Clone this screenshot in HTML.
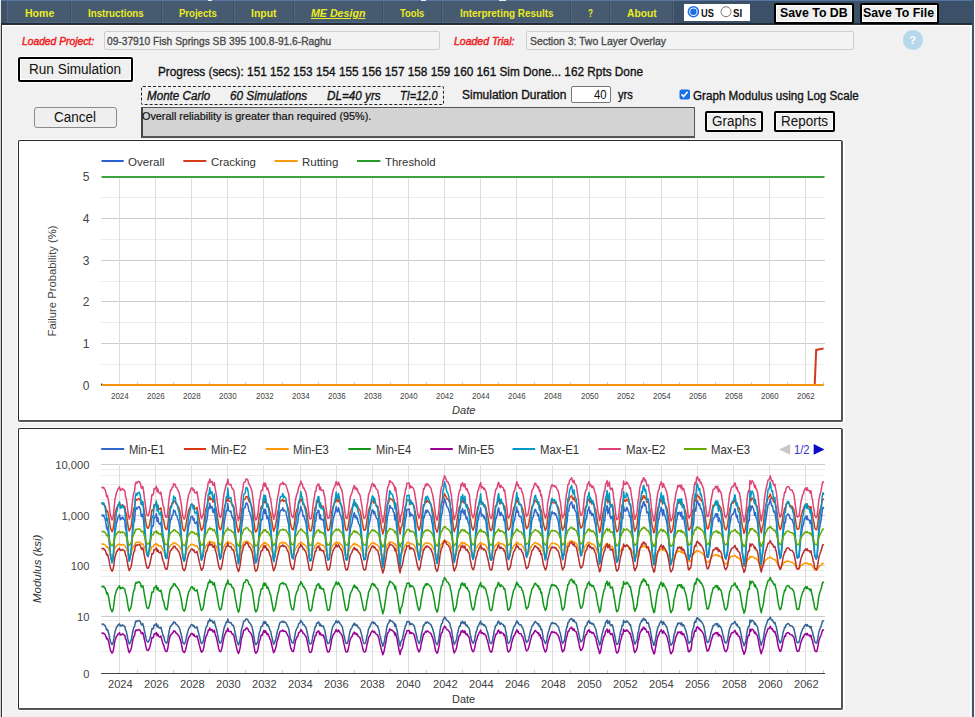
<!DOCTYPE html>
<html><head><meta charset="utf-8"><title>ME Design</title>
<style>
html,body{margin:0;padding:0;width:975px;height:717px;overflow:hidden;background:#f1f1f1}
.b{position:absolute}
.t{position:absolute;white-space:pre;font-family:'Liberation Sans', sans-serif;transform-origin:0 0}
</style></head><body>
<div class=b style="left:0px;top:0px;width:975px;height:717px;background:#f1f1f1"></div>
<div class=b style="left:0px;top:25px;width:1px;height:692px;background:#d0d0d0"></div>
<div class=b style="left:1px;top:25px;width:1px;height:692px;background:#333"></div>
<div class=b style="left:2px;top:25px;width:1px;height:692px;background:#fff"></div>
<div class=b style="left:970px;top:25px;width:1px;height:692px;background:#fff"></div>
<div class=b style="left:2px;top:25px;width:968px;height:1px;background:#fff"></div>
<div class=b style="left:972px;top:0px;width:2px;height:717px;background:#3a5572"></div>
<div class=b style="left:974px;top:0px;width:1px;height:717px;background:#f8f6f6"></div>
<div class=b style="left:0px;top:0px;width:1px;height:25px;background:#e8e8e8"></div>
<div class=b style="left:1px;top:0px;width:971px;height:25px;background:#475b70"></div>
<div class=b style="left:1px;top:0px;width:971px;height:1px;background:#5674a4"></div>
<div class=b style="left:1px;top:22px;width:971px;height:1px;background:#506680"></div>
<div class=b style="left:1px;top:23px;width:971px;height:1px;background:#1f2b38"></div>
<div class=b style="left:1px;top:24px;width:971px;height:1px;background:#2c3036"></div>
<div class=b style="left:1px;top:1px;width:6px;height:22px;background:#3e5169"></div>
<div class=b style="left:7px;top:1px;width:1px;height:22px;background:#53677e"></div>
<div class=b style="left:673px;top:1px;width:299px;height:22px;background:#3c5068"></div>
<div class=b style="left:208px;top:0px;width:4px;height:1px;background:#e8eef8"></div>
<div class=b style="left:421px;top:0px;width:5px;height:1px;background:#e8eef8"></div>
<div class=b style="left:499px;top:0px;width:7px;height:1px;background:#e8eef8"></div>
<div class=b style="left:70px;top:1px;width:1px;height:22px;background:#3c4f64"></div>
<div class=b style="left:71px;top:1px;width:1px;height:22px;background:#52667c"></div>
<div class=b style="left:161px;top:1px;width:1px;height:22px;background:#3c4f64"></div>
<div class=b style="left:162px;top:1px;width:1px;height:22px;background:#52667c"></div>
<div class=b style="left:233px;top:1px;width:1px;height:22px;background:#3c4f64"></div>
<div class=b style="left:234px;top:1px;width:1px;height:22px;background:#52667c"></div>
<div class=b style="left:293px;top:1px;width:1px;height:22px;background:#3c4f64"></div>
<div class=b style="left:294px;top:1px;width:1px;height:22px;background:#52667c"></div>
<div class=b style="left:382px;top:1px;width:1px;height:22px;background:#3c4f64"></div>
<div class=b style="left:383px;top:1px;width:1px;height:22px;background:#52667c"></div>
<div class=b style="left:441px;top:1px;width:1px;height:22px;background:#3c4f64"></div>
<div class=b style="left:442px;top:1px;width:1px;height:22px;background:#52667c"></div>
<div class=b style="left:570px;top:1px;width:1px;height:22px;background:#3c4f64"></div>
<div class=b style="left:571px;top:1px;width:1px;height:22px;background:#52667c"></div>
<div class=b style="left:609px;top:1px;width:1px;height:22px;background:#3c4f64"></div>
<div class=b style="left:610px;top:1px;width:1px;height:22px;background:#52667c"></div>
<div class=b style="left:672px;top:1px;width:1px;height:22px;background:#3c4f64"></div>
<div class=b style="left:673px;top:1px;width:1px;height:22px;background:#52667c"></div>
<div class=b style="left:684px;top:4px;width:66px;height:17px;background:#fff"></div>
<svg class=b style="left:684px;top:4px" width="66" height="17"><circle cx="9.4" cy="7.7" r="5" fill="#fff" stroke="#1a6ee6" stroke-width="1.6"/><circle cx="9.4" cy="7.7" r="3.2" fill="#1a6ee6"/><circle cx="42" cy="7.7" r="5" fill="#fff" stroke="#777" stroke-width="1"/></svg>
<div class=b style="left:774px;top:3px;width:80px;height:21px;box-sizing:border-box;border:2px solid #000;background:#efefef;box-shadow:inset 0 0 0 1px #fff;border-radius:2px"></div>
<div class=b style="left:860px;top:3px;width:79px;height:21px;box-sizing:border-box;border:2px solid #000;background:#efefef;box-shadow:inset 0 0 0 1px #fff;border-radius:2px"></div>
<div class=b style="left:104px;top:31px;width:336px;height:19px;box-sizing:border-box;border:1px solid #cfcfcf;border-radius:2px;background:#f3f3f3"></div>
<div class=b style="left:526px;top:31px;width:328px;height:19px;box-sizing:border-box;border:1px solid #cfcfcf;border-radius:2px;background:#f3f3f3"></div>
<div class=b style="left:903px;top:30px;width:19.5px;height:19.5px;border-radius:50%;background:#b7d8ea"></div>
<div class=b style="left:18px;top:57px;width:115px;height:25px;box-sizing:border-box;border:2px solid #000;border-radius:2px;background:#efefef;box-shadow:inset 0 0 0 1px #fff, 0 0 0 1px #fff"></div>
<div class=b style="left:141px;top:86px;width:303px;height:19px;box-sizing:border-box;border:1px dashed #222;border-radius:2px"></div>
<div class=b style="left:571px;top:86px;width:40px;height:17px;box-sizing:border-box;border:1px solid #777;border-radius:2px;background:#fff"></div>
<svg class=b style="left:679px;top:89px" width="12" height="11"><rect x="0.5" y="0.5" width="10.5" height="10" rx="2" fill="#1a6ee6"/><path d="M2.6 5.4 L4.6 7.6 L8.6 2.8" fill="none" stroke="#fff" stroke-width="1.6"/></svg>
<div class=b style="left:34px;top:107px;width:83px;height:21px;box-sizing:border-box;border:1px solid #8a8a8a;border-radius:3px;background:#efefef"></div>
<div class=b style="left:141px;top:107px;width:554px;height:31px;box-sizing:border-box;border:1px solid #555;border-bottom:2px solid #555;border-left:2px solid #444;background:#d3d3d3"></div>
<div class=b style="left:705px;top:111px;width:58px;height:21px;box-sizing:border-box;border:2px solid #000;border-radius:2px;background:#efefef;box-shadow:inset 0 0 0 1px #fff"></div>
<div class=b style="left:774px;top:111px;width:61px;height:21px;box-sizing:border-box;border:2px solid #000;border-radius:2px;background:#efefef;box-shadow:inset 0 0 0 1px #fff"></div>
<div class=b style="left:17px;top:139px;width:828px;height:284px;background:#fff;opacity:0.9;border-radius:3px"></div>
<div class=b style="left:18px;top:140px;width:825px;height:282px;box-sizing:border-box;background:#fff;border:1px solid #2a2a2a;border-right:2px solid #555;border-bottom:2px solid #555;border-radius:2px"></div>
<div class=b style="left:17px;top:427px;width:828px;height:284px;background:#fff;opacity:0.9;border-radius:3px"></div>
<div class=b style="left:18px;top:428px;width:825px;height:282px;box-sizing:border-box;background:#fff;border:1px solid #2a2a2a;border-right:2px solid #555;border-bottom:2px solid #555;border-radius:2px"></div>
<svg class=b style="left:0;top:0" width="975" height="717"><line x1="101" x2="825" y1="364.5" y2="364.5" stroke="#ebebeb" stroke-width="1"/><line x1="101" x2="825" y1="343.5" y2="343.5" stroke="#cccccc" stroke-width="1"/><line x1="101" x2="825" y1="322.5" y2="322.5" stroke="#ebebeb" stroke-width="1"/><line x1="101" x2="825" y1="301.5" y2="301.5" stroke="#cccccc" stroke-width="1"/><line x1="101" x2="825" y1="281.5" y2="281.5" stroke="#ebebeb" stroke-width="1"/><line x1="101" x2="825" y1="260.5" y2="260.5" stroke="#cccccc" stroke-width="1"/><line x1="101" x2="825" y1="239.5" y2="239.5" stroke="#ebebeb" stroke-width="1"/><line x1="101" x2="825" y1="218.5" y2="218.5" stroke="#cccccc" stroke-width="1"/><line x1="101" x2="825" y1="197.5" y2="197.5" stroke="#ebebeb" stroke-width="1"/><line x1="119.5" x2="119.5" y1="176" y2="384" stroke="#dddddd" stroke-width="1"/><line x1="155.5" x2="155.5" y1="176" y2="384" stroke="#dddddd" stroke-width="1"/><line x1="191.5" x2="191.5" y1="176" y2="384" stroke="#dddddd" stroke-width="1"/><line x1="227.5" x2="227.5" y1="176" y2="384" stroke="#dddddd" stroke-width="1"/><line x1="263.5" x2="263.5" y1="176" y2="384" stroke="#dddddd" stroke-width="1"/><line x1="300.5" x2="300.5" y1="176" y2="384" stroke="#dddddd" stroke-width="1"/><line x1="336.5" x2="336.5" y1="176" y2="384" stroke="#dddddd" stroke-width="1"/><line x1="372.5" x2="372.5" y1="176" y2="384" stroke="#dddddd" stroke-width="1"/><line x1="408.5" x2="408.5" y1="176" y2="384" stroke="#dddddd" stroke-width="1"/><line x1="444.5" x2="444.5" y1="176" y2="384" stroke="#dddddd" stroke-width="1"/><line x1="480.5" x2="480.5" y1="176" y2="384" stroke="#dddddd" stroke-width="1"/><line x1="516.5" x2="516.5" y1="176" y2="384" stroke="#dddddd" stroke-width="1"/><line x1="552.5" x2="552.5" y1="176" y2="384" stroke="#dddddd" stroke-width="1"/><line x1="589.5" x2="589.5" y1="176" y2="384" stroke="#dddddd" stroke-width="1"/><line x1="625.5" x2="625.5" y1="176" y2="384" stroke="#dddddd" stroke-width="1"/><line x1="661.5" x2="661.5" y1="176" y2="384" stroke="#dddddd" stroke-width="1"/><line x1="697.5" x2="697.5" y1="176" y2="384" stroke="#dddddd" stroke-width="1"/><line x1="733.5" x2="733.5" y1="176" y2="384" stroke="#dddddd" stroke-width="1"/><line x1="769.5" x2="769.5" y1="176" y2="384" stroke="#dddddd" stroke-width="1"/><line x1="805.5" x2="805.5" y1="176" y2="384" stroke="#dddddd" stroke-width="1"/><line x1="137.5" x2="137.5" y1="382" y2="384" stroke="#cccccc" stroke-width="1"/><line x1="173.5" x2="173.5" y1="382" y2="384" stroke="#cccccc" stroke-width="1"/><line x1="209.5" x2="209.5" y1="382" y2="384" stroke="#cccccc" stroke-width="1"/><line x1="245.5" x2="245.5" y1="382" y2="384" stroke="#cccccc" stroke-width="1"/><line x1="282.5" x2="282.5" y1="382" y2="384" stroke="#cccccc" stroke-width="1"/><line x1="318.5" x2="318.5" y1="382" y2="384" stroke="#cccccc" stroke-width="1"/><line x1="354.5" x2="354.5" y1="382" y2="384" stroke="#cccccc" stroke-width="1"/><line x1="390.5" x2="390.5" y1="382" y2="384" stroke="#cccccc" stroke-width="1"/><line x1="426.5" x2="426.5" y1="382" y2="384" stroke="#cccccc" stroke-width="1"/><line x1="462.5" x2="462.5" y1="382" y2="384" stroke="#cccccc" stroke-width="1"/><line x1="498.5" x2="498.5" y1="382" y2="384" stroke="#cccccc" stroke-width="1"/><line x1="534.5" x2="534.5" y1="382" y2="384" stroke="#cccccc" stroke-width="1"/><line x1="570.5" x2="570.5" y1="382" y2="384" stroke="#cccccc" stroke-width="1"/><line x1="607.5" x2="607.5" y1="382" y2="384" stroke="#cccccc" stroke-width="1"/><line x1="643.5" x2="643.5" y1="382" y2="384" stroke="#cccccc" stroke-width="1"/><line x1="679.5" x2="679.5" y1="382" y2="384" stroke="#cccccc" stroke-width="1"/><line x1="715.5" x2="715.5" y1="382" y2="384" stroke="#cccccc" stroke-width="1"/><line x1="751.5" x2="751.5" y1="382" y2="384" stroke="#cccccc" stroke-width="1"/><line x1="787.5" x2="787.5" y1="382" y2="384" stroke="#cccccc" stroke-width="1"/><line x1="823.5" x2="823.5" y1="382" y2="384" stroke="#cccccc" stroke-width="1"/><line x1="101" x2="102" y1="384.5" y2="384.5" stroke="#333" stroke-width="2"/><path d="M101.5 177 H824.5" stroke="#3ba53b" stroke-width="2" fill="none"/><path d="M102 385 H814.7 L816.2 349.9 L823.6 348.4" stroke="#d23a1c" stroke-width="2" fill="none"/><path d="M102 385 H823.8" stroke="#f7930f" stroke-width="2" fill="none"/><path d="M101.5 161 H123.7" stroke="#2a5fd0" stroke-width="2"/><path d="M183.3 161 H206.3" stroke="#d83a1a" stroke-width="2"/><path d="M274.5 161 H297.8" stroke="#fb9a10" stroke-width="2"/><path d="M357 161 H380.4" stroke="#2a9a2a" stroke-width="2"/><line x1="101" x2="825" y1="600.5" y2="600.5" stroke="#ebebeb" stroke-width="1"/><line x1="101" x2="825" y1="585.5" y2="585.5" stroke="#ebebeb" stroke-width="1"/><line x1="101" x2="825" y1="576.5" y2="576.5" stroke="#ebebeb" stroke-width="1"/><line x1="101" x2="825" y1="570.5" y2="570.5" stroke="#ebebeb" stroke-width="1"/><line x1="101" x2="825" y1="550.5" y2="550.5" stroke="#ebebeb" stroke-width="1"/><line x1="101" x2="825" y1="535.5" y2="535.5" stroke="#ebebeb" stroke-width="1"/><line x1="101" x2="825" y1="526.5" y2="526.5" stroke="#ebebeb" stroke-width="1"/><line x1="101" x2="825" y1="519.5" y2="519.5" stroke="#ebebeb" stroke-width="1"/><line x1="101" x2="825" y1="499.5" y2="499.5" stroke="#ebebeb" stroke-width="1"/><line x1="101" x2="825" y1="484.5" y2="484.5" stroke="#ebebeb" stroke-width="1"/><line x1="101" x2="825" y1="475.5" y2="475.5" stroke="#ebebeb" stroke-width="1"/><line x1="101" x2="825" y1="469.5" y2="469.5" stroke="#ebebeb" stroke-width="1"/><line x1="101" x2="825" y1="620.5" y2="620.5" stroke="#ebebeb" stroke-width="1"/><line x1="101" x2="825" y1="626.5" y2="626.5" stroke="#ebebeb" stroke-width="1"/><line x1="101" x2="825" y1="636.5" y2="636.5" stroke="#ebebeb" stroke-width="1"/><line x1="101" x2="825" y1="651.5" y2="651.5" stroke="#ebebeb" stroke-width="1"/><line x1="101" x2="825" y1="464.5" y2="464.5" stroke="#cccccc" stroke-width="1"/><line x1="101" x2="825" y1="515.5" y2="515.5" stroke="#cccccc" stroke-width="1"/><line x1="101" x2="825" y1="565.5" y2="565.5" stroke="#cccccc" stroke-width="1"/><line x1="101" x2="825" y1="616.5" y2="616.5" stroke="#cccccc" stroke-width="1"/><line x1="119.5" x2="119.5" y1="464" y2="673" stroke="#dddddd" stroke-width="1"/><line x1="155.5" x2="155.5" y1="464" y2="673" stroke="#dddddd" stroke-width="1"/><line x1="191.5" x2="191.5" y1="464" y2="673" stroke="#dddddd" stroke-width="1"/><line x1="227.5" x2="227.5" y1="464" y2="673" stroke="#dddddd" stroke-width="1"/><line x1="263.5" x2="263.5" y1="464" y2="673" stroke="#dddddd" stroke-width="1"/><line x1="300.5" x2="300.5" y1="464" y2="673" stroke="#dddddd" stroke-width="1"/><line x1="336.5" x2="336.5" y1="464" y2="673" stroke="#dddddd" stroke-width="1"/><line x1="372.5" x2="372.5" y1="464" y2="673" stroke="#dddddd" stroke-width="1"/><line x1="408.5" x2="408.5" y1="464" y2="673" stroke="#dddddd" stroke-width="1"/><line x1="444.5" x2="444.5" y1="464" y2="673" stroke="#dddddd" stroke-width="1"/><line x1="480.5" x2="480.5" y1="464" y2="673" stroke="#dddddd" stroke-width="1"/><line x1="516.5" x2="516.5" y1="464" y2="673" stroke="#dddddd" stroke-width="1"/><line x1="552.5" x2="552.5" y1="464" y2="673" stroke="#dddddd" stroke-width="1"/><line x1="589.5" x2="589.5" y1="464" y2="673" stroke="#dddddd" stroke-width="1"/><line x1="625.5" x2="625.5" y1="464" y2="673" stroke="#dddddd" stroke-width="1"/><line x1="661.5" x2="661.5" y1="464" y2="673" stroke="#dddddd" stroke-width="1"/><line x1="697.5" x2="697.5" y1="464" y2="673" stroke="#dddddd" stroke-width="1"/><line x1="733.5" x2="733.5" y1="464" y2="673" stroke="#dddddd" stroke-width="1"/><line x1="769.5" x2="769.5" y1="464" y2="673" stroke="#dddddd" stroke-width="1"/><line x1="805.5" x2="805.5" y1="464" y2="673" stroke="#dddddd" stroke-width="1"/><line x1="137.5" x2="137.5" y1="670" y2="673" stroke="#cccccc" stroke-width="1"/><line x1="173.5" x2="173.5" y1="670" y2="673" stroke="#cccccc" stroke-width="1"/><line x1="209.5" x2="209.5" y1="670" y2="673" stroke="#cccccc" stroke-width="1"/><line x1="245.5" x2="245.5" y1="670" y2="673" stroke="#cccccc" stroke-width="1"/><line x1="282.5" x2="282.5" y1="670" y2="673" stroke="#cccccc" stroke-width="1"/><line x1="318.5" x2="318.5" y1="670" y2="673" stroke="#cccccc" stroke-width="1"/><line x1="354.5" x2="354.5" y1="670" y2="673" stroke="#cccccc" stroke-width="1"/><line x1="390.5" x2="390.5" y1="670" y2="673" stroke="#cccccc" stroke-width="1"/><line x1="426.5" x2="426.5" y1="670" y2="673" stroke="#cccccc" stroke-width="1"/><line x1="462.5" x2="462.5" y1="670" y2="673" stroke="#cccccc" stroke-width="1"/><line x1="498.5" x2="498.5" y1="670" y2="673" stroke="#cccccc" stroke-width="1"/><line x1="534.5" x2="534.5" y1="670" y2="673" stroke="#cccccc" stroke-width="1"/><line x1="570.5" x2="570.5" y1="670" y2="673" stroke="#cccccc" stroke-width="1"/><line x1="607.5" x2="607.5" y1="670" y2="673" stroke="#cccccc" stroke-width="1"/><line x1="643.5" x2="643.5" y1="670" y2="673" stroke="#cccccc" stroke-width="1"/><line x1="679.5" x2="679.5" y1="670" y2="673" stroke="#cccccc" stroke-width="1"/><line x1="715.5" x2="715.5" y1="670" y2="673" stroke="#cccccc" stroke-width="1"/><line x1="751.5" x2="751.5" y1="670" y2="673" stroke="#cccccc" stroke-width="1"/><line x1="787.5" x2="787.5" y1="670" y2="673" stroke="#cccccc" stroke-width="1"/><line x1="823.5" x2="823.5" y1="670" y2="673" stroke="#cccccc" stroke-width="1"/><line x1="101" x2="825" y1="673.5" y2="673.5" stroke="#444" stroke-width="1.2"/><path d="M101.4 515.7 L102.2 515.1 L102.9 516.2 L103.7 515.1 L104.4 517.5 L105.2 519.0 L106.0 523.7 L106.7 528.9 L107.5 527.2 L108.2 532.2 L109.0 539.1 L109.7 547.8 L110.5 556.1 L111.2 559.0 L112.0 562.4 L112.7 560.4 L113.5 554.2 L114.2 543.3 L115.0 532.1 L115.7 528.5 L116.5 522.3 L117.2 521.3 L118.0 517.1 L118.7 516.8 L119.5 514.4 L120.3 519.7 L121.0 518.1 L121.8 519.0 L122.5 516.9 L123.3 518.3 L124.0 519.3 L124.8 520.5 L125.5 528.4 L126.3 531.7 L127.0 539.2 L127.8 549.1 L128.5 556.4 L129.3 561.2 L130.0 557.9 L130.8 554.9 L131.5 549.0 L132.3 537.9 L133.0 529.8 L133.8 522.7 L134.5 521.4 L135.3 510.8 L136.1 507.6 L136.8 509.1 L137.6 508.2 L138.3 507.0 L139.1 506.7 L139.8 508.0 L140.6 510.5 L141.3 516.4 L142.1 516.6 L142.8 513.9 L143.6 520.8 L144.3 529.4 L145.1 537.1 L145.8 545.3 L146.6 553.3 L147.3 555.7 L148.1 556.6 L148.8 554.1 L149.6 549.5 L150.3 543.4 L151.1 535.4 L151.9 525.9 L152.6 526.6 L153.4 525.1 L154.1 517.0 L154.9 517.8 L155.6 516.3 L156.4 513.7 L157.1 521.6 L157.9 517.5 L158.6 522.5 L159.4 524.1 L160.1 524.4 L160.9 522.2 L161.6 528.5 L162.4 535.7 L163.1 541.3 L163.9 544.4 L164.6 552.2 L165.4 557.0 L166.1 558.4 L166.9 558.5 L167.7 552.7 L168.4 541.5 L169.2 531.0 L169.9 523.8 L170.7 518.9 L171.4 519.0 L172.2 514.9 L172.9 514.9 L173.7 509.8 L174.4 511.7 L175.2 511.0 L175.9 515.0 L176.7 515.8 L177.4 517.6 L178.2 520.2 L178.9 522.1 L179.7 526.4 L180.4 532.2 L181.2 538.5 L181.9 546.9 L182.7 556.9 L183.5 559.5 L184.2 561.2 L185.0 558.7 L185.7 554.0 L186.5 544.9 L187.2 537.7 L188.0 531.2 L188.7 525.4 L189.5 523.6 L190.2 520.5 L191.0 517.0 L191.7 516.1 L192.5 516.4 L193.2 520.0 L194.0 518.2 L194.7 522.9 L195.5 523.6 L196.2 523.3 L197.0 521.4 L197.7 527.9 L198.5 534.8 L199.3 543.0 L200.0 548.7 L200.8 556.4 L201.5 560.3 L202.3 558.3 L203.0 556.1 L203.8 549.4 L204.5 538.6 L205.3 530.0 L206.0 522.9 L206.8 520.4 L207.5 515.8 L208.3 507.9 L209.0 508.7 L209.8 503.2 L210.5 508.1 L211.3 507.3 L212.0 506.4 L212.8 512.0 L213.6 512.5 L214.3 508.3 L215.1 516.6 L215.8 521.7 L216.6 527.4 L217.3 536.0 L218.1 544.3 L218.8 552.8 L219.6 557.4 L220.3 559.2 L221.1 557.3 L221.8 551.7 L222.6 542.0 L223.3 532.2 L224.1 524.0 L224.8 519.2 L225.6 515.2 L226.3 510.4 L227.1 510.7 L227.8 503.5 L228.6 510.1 L229.4 511.4 L230.1 511.7 L230.9 511.0 L231.6 514.7 L232.4 517.9 L233.1 517.6 L233.9 521.3 L234.6 529.2 L235.4 538.3 L236.1 544.6 L236.9 553.8 L237.6 558.0 L238.4 563.3 L239.1 560.3 L239.9 552.3 L240.6 543.0 L241.4 528.4 L242.1 523.1 L242.9 517.2 L243.6 508.9 L244.4 507.9 L245.2 507.5 L245.9 503.5 L246.7 503.0 L247.4 503.9 L248.2 506.6 L248.9 511.2 L249.7 512.1 L250.4 514.6 L251.2 517.3 L251.9 521.0 L252.7 528.5 L253.4 538.2 L254.2 548.3 L254.9 558.4 L255.7 562.6 L256.4 561.6 L257.2 558.6 L257.9 553.7 L258.7 542.5 L259.4 533.9 L260.2 530.2 L261.0 520.9 L261.7 519.3 L262.5 519.6 L263.2 512.0 L264.0 509.0 L264.7 513.6 L265.5 509.4 L266.2 513.4 L267.0 518.6 L267.7 516.2 L268.5 520.0 L269.2 523.8 L270.0 529.8 L270.7 531.4 L271.5 541.6 L272.2 547.7 L273.0 556.8 L273.7 561.5 L274.5 557.8 L275.2 554.3 L276.0 547.3 L276.8 537.9 L277.5 530.5 L278.3 525.9 L279.0 519.2 L279.8 512.6 L280.5 510.5 L281.3 510.1 L282.0 510.0 L282.8 507.7 L283.5 511.1 L284.3 510.0 L285.0 510.9 L285.8 511.4 L286.5 515.2 L287.3 518.1 L288.0 521.8 L288.8 525.1 L289.5 536.3 L290.3 546.0 L291.0 551.9 L291.8 557.0 L292.6 558.3 L293.3 558.9 L294.1 552.0 L294.8 542.2 L295.6 532.3 L296.3 528.1 L297.1 524.1 L297.8 522.4 L298.6 514.6 L299.3 513.5 L300.1 511.5 L300.8 506.3 L301.6 510.4 L302.3 510.5 L303.1 516.3 L303.8 515.8 L304.6 518.8 L305.3 520.7 L306.1 523.8 L306.8 529.9 L307.6 539.3 L308.4 547.3 L309.1 557.3 L309.9 560.7 L310.6 560.8 L311.4 559.5 L312.1 553.5 L312.9 542.4 L313.6 535.6 L314.4 529.7 L315.1 521.3 L315.9 521.0 L316.6 513.1 L317.4 513.1 L318.1 510.3 L318.9 510.4 L319.6 518.6 L320.4 514.8 L321.1 519.7 L321.9 519.0 L322.7 520.2 L323.4 519.6 L324.2 526.7 L324.9 529.6 L325.7 541.5 L326.4 548.5 L327.2 556.8 L327.9 560.1 L328.7 559.6 L329.4 558.2 L330.2 551.3 L330.9 542.4 L331.7 529.6 L332.4 524.3 L333.2 519.0 L333.9 516.5 L334.7 513.8 L335.4 511.5 L336.2 506.6 L336.9 510.9 L337.7 512.0 L338.5 507.8 L339.2 510.4 L340.0 514.1 L340.7 515.7 L341.5 518.4 L342.2 521.1 L343.0 530.1 L343.7 538.4 L344.5 545.8 L345.2 554.1 L346.0 559.5 L346.7 560.2 L347.5 559.0 L348.2 553.2 L349.0 544.0 L349.7 534.9 L350.5 528.2 L351.2 525.8 L352.0 523.2 L352.7 518.8 L353.5 515.5 L354.3 512.7 L355.0 517.6 L355.8 515.2 L356.5 518.7 L357.3 517.5 L358.0 521.8 L358.8 523.8 L359.5 524.9 L360.3 528.0 L361.0 534.7 L361.8 541.0 L362.5 548.3 L363.3 556.3 L364.0 559.9 L364.8 559.6 L365.5 558.9 L366.3 551.8 L367.0 541.8 L367.8 536.0 L368.5 526.5 L369.3 522.9 L370.1 520.2 L370.8 515.5 L371.6 512.4 L372.3 509.8 L373.1 510.2 L373.8 513.8 L374.6 511.6 L375.3 514.7 L376.1 517.4 L376.8 518.6 L377.6 519.0 L378.3 524.5 L379.1 529.8 L379.8 539.5 L380.6 546.1 L381.3 554.1 L382.1 559.6 L382.8 566.1 L383.6 561.6 L384.3 555.6 L385.1 544.9 L385.9 536.3 L386.6 525.2 L387.4 517.2 L388.1 514.1 L388.9 511.7 L389.6 505.6 L390.4 506.3 L391.1 508.3 L391.9 508.2 L392.6 508.8 L393.4 512.0 L394.1 512.6 L394.9 519.9 L395.6 515.1 L396.4 524.6 L397.1 529.3 L397.9 541.8 L398.6 549.6 L399.4 560.2 L400.1 565.8 L400.9 555.4 L401.7 553.5 L402.4 548.8 L403.2 540.9 L403.9 530.9 L404.7 525.9 L405.4 519.0 L406.2 516.7 L406.9 509.3 L407.7 509.4 L408.4 509.3 L409.2 509.1 L409.9 516.6 L410.7 513.1 L411.4 515.4 L412.2 514.8 L412.9 515.8 L413.7 517.8 L414.4 521.1 L415.2 529.1 L416.0 535.9 L416.7 543.7 L417.5 551.7 L418.2 555.2 L419.0 559.9 L419.7 557.7 L420.5 551.4 L421.2 540.2 L422.0 533.0 L422.7 526.7 L423.5 516.8 L424.2 517.8 L425.0 513.7 L425.7 510.6 L426.5 512.9 L427.2 509.9 L428.0 511.0 L428.7 512.4 L429.5 513.7 L430.2 515.2 L431.0 516.4 L431.8 521.8 L432.5 524.5 L433.3 531.7 L434.0 537.9 L434.8 546.9 L435.5 556.6 L436.3 559.3 L437.0 563.0 L437.8 559.3 L438.5 552.4 L439.3 542.5 L440.0 529.7 L440.8 520.4 L441.5 514.6 L442.3 513.2 L443.0 505.4 L443.8 503.1 L444.5 498.5 L445.3 500.7 L446.0 503.2 L446.8 506.5 L447.6 507.3 L448.3 508.6 L449.1 511.5 L449.8 513.2 L450.6 521.8 L451.3 525.7 L452.1 537.3 L452.8 546.2 L453.6 557.2 L454.3 562.2 L455.1 557.5 L455.8 555.3 L456.6 549.7 L457.3 539.1 L458.1 532.0 L458.8 524.5 L459.6 519.6 L460.3 519.4 L461.1 510.4 L461.8 512.7 L462.6 508.6 L463.4 512.3 L464.1 514.2 L464.9 510.0 L465.6 516.5 L466.4 518.9 L467.1 517.1 L467.9 521.5 L468.6 523.6 L469.4 526.0 L470.1 538.0 L470.9 544.6 L471.6 553.0 L472.4 557.2 L473.1 559.5 L473.9 556.5 L474.6 551.4 L475.4 541.2 L476.1 533.0 L476.9 529.7 L477.6 521.5 L478.4 519.4 L479.2 514.1 L479.9 512.1 L480.7 508.1 L481.4 516.2 L482.2 514.4 L482.9 514.9 L483.7 518.0 L484.4 516.5 L485.2 519.4 L485.9 520.9 L486.7 528.5 L487.4 532.6 L488.2 539.7 L488.9 547.5 L489.7 555.8 L490.4 559.2 L491.2 560.3 L491.9 559.0 L492.7 549.8 L493.4 541.7 L494.2 530.8 L495.0 524.7 L495.7 518.1 L496.5 518.2 L497.2 514.6 L498.0 509.7 L498.7 507.8 L499.5 514.1 L500.2 515.8 L501.0 512.2 L501.7 514.4 L502.5 515.2 L503.2 516.0 L504.0 520.6 L504.7 519.2 L505.5 528.2 L506.2 537.1 L507.0 546.4 L507.7 557.4 L508.5 559.7 L509.2 557.9 L510.0 555.5 L510.8 549.8 L511.5 539.5 L512.3 533.4 L513.0 527.3 L513.8 521.5 L514.5 520.4 L515.3 515.9 L516.0 511.9 L516.8 507.1 L517.5 512.3 L518.3 511.2 L519.0 516.0 L519.8 516.8 L520.5 516.2 L521.3 517.6 L522.0 522.4 L522.8 523.9 L523.5 530.0 L524.3 536.7 L525.1 544.5 L525.8 553.1 L526.6 557.5 L527.3 554.9 L528.1 554.1 L528.8 548.3 L529.6 540.8 L530.3 532.6 L531.1 527.6 L531.8 520.7 L532.6 517.9 L533.3 517.0 L534.1 512.7 L534.8 509.7 L535.6 509.3 L536.3 512.5 L537.1 512.5 L537.8 515.9 L538.6 514.3 L539.3 520.8 L540.1 519.1 L540.9 527.8 L541.6 526.3 L542.4 535.5 L543.1 545.8 L543.9 551.7 L544.6 555.8 L545.4 560.0 L546.1 557.3 L546.9 551.4 L547.6 539.6 L548.4 533.1 L549.1 528.5 L549.9 521.4 L550.6 517.9 L551.4 512.8 L552.1 511.5 L552.9 513.7 L553.6 512.9 L554.4 512.7 L555.1 514.7 L555.9 513.9 L556.7 517.1 L557.4 518.5 L558.2 520.9 L558.9 524.8 L559.7 532.6 L560.4 536.2 L561.2 546.9 L561.9 555.2 L562.7 559.7 L563.4 556.0 L564.2 555.0 L564.9 546.5 L565.7 534.4 L566.4 525.4 L567.2 520.7 L567.9 511.5 L568.7 511.3 L569.4 506.3 L570.2 504.0 L570.9 502.8 L571.7 501.7 L572.5 506.4 L573.2 508.2 L574.0 504.9 L574.7 509.9 L575.5 511.2 L576.2 512.1 L577.0 518.7 L577.7 525.9 L578.5 533.9 L579.2 543.0 L580.0 550.9 L580.7 556.0 L581.5 555.2 L582.2 552.8 L583.0 548.7 L583.7 539.8 L584.5 528.7 L585.2 522.4 L586.0 519.0 L586.7 518.1 L587.5 510.3 L588.3 509.9 L589.0 506.8 L589.8 513.5 L590.5 511.0 L591.3 513.5 L592.0 515.8 L592.8 513.5 L593.5 515.1 L594.3 519.1 L595.0 523.1 L595.8 525.8 L596.5 535.2 L597.3 543.3 L598.0 550.7 L598.8 554.7 L599.5 563.6 L600.3 561.1 L601.0 553.3 L601.8 541.8 L602.5 534.7 L603.3 527.9 L604.1 521.5 L604.8 520.3 L605.6 510.6 L606.3 509.7 L607.1 505.5 L607.8 513.7 L608.6 512.0 L609.3 507.4 L610.1 516.6 L610.8 518.6 L611.6 516.7 L612.3 516.4 L613.1 523.4 L613.8 532.2 L614.6 539.6 L615.3 548.3 L616.1 557.9 L616.8 562.2 L617.6 560.9 L618.4 558.6 L619.1 550.9 L619.9 539.7 L620.6 531.4 L621.4 527.8 L622.1 517.5 L622.9 518.4 L623.6 506.2 L624.4 511.0 L625.1 510.2 L625.9 511.0 L626.6 507.5 L627.4 508.5 L628.1 510.6 L628.9 512.5 L629.6 516.7 L630.4 515.9 L631.1 523.8 L631.9 531.2 L632.6 537.5 L633.4 546.6 L634.2 557.5 L634.9 561.3 L635.7 557.4 L636.4 555.3 L637.2 549.5 L637.9 535.8 L638.7 531.0 L639.4 520.5 L640.2 513.6 L640.9 511.5 L641.7 506.1 L642.4 507.5 L643.2 502.0 L643.9 501.5 L644.7 505.8 L645.4 504.4 L646.2 507.8 L646.9 513.1 L647.7 512.1 L648.4 512.1 L649.2 521.1 L650.0 524.9 L650.7 534.4 L651.5 544.9 L652.2 553.5 L653.0 557.2 L653.7 564.0 L654.5 563.3 L655.2 554.4 L656.0 543.9 L656.7 534.4 L657.5 525.8 L658.2 520.8 L659.0 518.5 L659.7 512.5 L660.5 510.9 L661.2 507.2 L662.0 511.0 L662.7 515.7 L663.5 509.6 L664.2 513.9 L665.0 515.7 L665.8 518.7 L666.5 521.1 L667.3 526.0 L668.0 533.8 L668.8 541.0 L669.5 550.3 L670.3 560.7 L671.0 564.1 L671.8 561.1 L672.5 559.1 L673.3 552.1 L674.0 539.3 L674.8 535.5 L675.5 527.5 L676.3 521.3 L677.0 519.1 L677.8 512.6 L678.5 514.6 L679.3 512.3 L680.0 512.4 L680.8 516.3 L681.6 511.9 L682.3 519.1 L683.1 516.6 L683.8 517.3 L684.6 523.1 L685.3 526.6 L686.1 532.2 L686.8 538.4 L687.6 547.9 L688.3 558.1 L689.1 559.9 L689.8 556.0 L690.6 556.2 L691.3 550.0 L692.1 533.1 L692.8 526.5 L693.6 523.7 L694.3 512.0 L695.1 508.3 L695.8 511.1 L696.6 501.5 L697.4 500.2 L698.1 502.6 L698.9 505.3 L699.6 503.8 L700.4 508.9 L701.1 508.2 L701.9 511.2 L702.6 513.7 L703.4 517.2 L704.1 522.8 L704.9 532.9 L705.6 542.0 L706.4 550.7 L707.1 557.3 L707.9 557.5 L708.6 555.9 L709.4 549.3 L710.1 544.6 L710.9 535.0 L711.6 529.9 L712.4 524.2 L713.2 518.0 L713.9 518.1 L714.7 517.1 L715.4 514.2 L716.2 513.6 L716.9 517.1 L717.7 513.8 L718.4 521.8 L719.2 517.9 L719.9 520.6 L720.7 521.8 L721.4 525.1 L722.2 532.9 L722.9 539.5 L723.7 546.3 L724.4 554.5 L725.2 557.9 L725.9 559.2 L726.7 556.3 L727.5 552.7 L728.2 542.4 L729.0 532.2 L729.7 524.6 L730.5 521.4 L731.2 516.3 L732.0 514.6 L732.7 513.7 L733.5 513.9 L734.2 510.9 L735.0 508.7 L735.7 512.9 L736.5 517.5 L737.2 515.3 L738.0 521.0 L738.7 522.4 L739.5 522.9 L740.2 529.7 L741.0 537.6 L741.7 546.0 L742.5 554.7 L743.3 558.3 L744.0 565.2 L744.8 562.0 L745.5 556.2 L746.3 545.5 L747.0 534.0 L747.8 524.5 L748.5 520.3 L749.3 520.5 L750.0 505.3 L750.8 510.7 L751.5 506.6 L752.3 505.9 L753.0 507.7 L753.8 509.7 L754.5 515.3 L755.3 512.4 L756.0 517.7 L756.8 518.4 L757.5 522.4 L758.3 531.0 L759.1 543.0 L759.8 550.4 L760.6 559.5 L761.3 564.2 L762.1 555.8 L762.8 552.9 L763.6 545.7 L764.3 533.9 L765.1 525.2 L765.8 519.3 L766.6 514.1 L767.3 509.8 L768.1 504.5 L768.8 504.4 L769.6 502.3 L770.3 498.8 L771.1 503.8 L771.8 506.1 L772.6 505.8 L773.3 510.7 L774.1 512.4 L774.9 510.8 L775.6 517.5 L776.4 522.4 L777.1 532.0 L777.9 542.0 L778.6 550.0 L779.4 554.9 L780.1 558.7 L780.9 556.9 L781.6 551.1 L782.4 543.4 L783.1 533.2 L783.9 528.3 L784.6 522.2 L785.4 522.7 L786.1 516.3 L786.9 515.4 L787.6 513.9 L788.4 514.2 L789.1 515.2 L789.9 518.2 L790.7 518.7 L791.4 519.5 L792.2 519.5 L792.9 522.5 L793.7 524.2 L794.4 530.9 L795.2 539.5 L795.9 546.7 L796.7 556.0 L797.4 558.3 L798.2 557.4 L798.9 557.5 L799.7 550.0 L800.4 542.0 L801.2 534.9 L801.9 531.1 L802.7 525.6 L803.4 524.9 L804.2 519.8 L804.9 518.0 L805.7 516.1 L806.5 519.5 L807.2 515.9 L808.0 519.8 L808.7 519.8 L809.5 520.3 L810.2 523.5 L811.0 520.3 L811.7 528.6 L812.5 532.9 L813.2 541.3 L814.0 547.1 L814.7 555.7 L815.5 557.7 L816.2 559.1 L817.0 557.3 L817.7 549.3 L818.5 538.2 L819.2 530.7 L820.0 525.6 L820.8 521.6 L821.5 517.0 L822.3 509.6 L823.0 507.2 L823.8 508.9" stroke="#3366cc" stroke-width="1.5" fill="none" stroke-linejoin="round"/><path d="M101.4 504.0 L102.2 503.6 L102.9 504.3 L103.7 503.6 L104.4 505.1 L105.2 506.0 L106.0 508.8 L106.7 511.9 L107.5 510.8 L108.2 513.8 L109.0 517.9 L109.7 523.1 L110.5 528.1 L111.2 529.8 L112.0 531.8 L112.7 530.6 L113.5 527.0 L114.2 520.5 L115.0 513.8 L115.7 511.6 L116.5 507.9 L117.2 507.4 L118.0 504.8 L118.7 504.6 L119.5 503.2 L120.3 506.4 L121.0 505.4 L121.8 505.9 L122.5 504.7 L123.3 505.6 L124.0 506.1 L124.8 506.8 L125.5 511.6 L126.3 513.5 L127.0 518.0 L127.8 523.9 L128.5 528.3 L129.3 531.1 L130.0 529.2 L130.8 527.3 L131.5 523.9 L132.3 517.2 L133.0 512.4 L133.8 508.2 L134.5 507.4 L135.3 501.1 L136.1 499.2 L136.8 500.1 L137.6 499.5 L138.3 498.8 L139.1 498.6 L139.8 499.4 L140.6 500.9 L141.3 504.4 L142.1 504.5 L142.8 502.9 L143.6 507.1 L144.3 512.2 L145.1 516.7 L145.8 521.6 L146.6 526.4 L147.3 527.9 L148.1 528.4 L148.8 526.9 L149.6 524.1 L150.3 520.5 L151.1 515.7 L151.9 510.1 L152.6 510.5 L153.4 509.6 L154.1 504.8 L154.9 505.3 L155.6 504.3 L156.4 502.8 L157.1 507.5 L157.9 505.1 L158.6 508.1 L159.4 509.0 L160.1 509.2 L160.9 507.9 L161.6 511.6 L162.4 515.9 L163.1 519.3 L163.9 521.1 L164.6 525.7 L165.4 528.6 L166.1 529.4 L166.9 529.5 L167.7 526.1 L168.4 519.4 L169.2 513.1 L169.9 508.8 L170.7 505.9 L171.4 505.9 L172.2 503.5 L172.9 503.5 L173.7 500.5 L174.4 501.6 L175.2 501.2 L175.9 503.5 L176.7 504.0 L177.4 505.1 L178.2 506.7 L178.9 507.8 L179.7 510.4 L180.4 513.9 L181.2 517.6 L181.9 522.6 L182.7 528.5 L183.5 530.1 L184.2 531.1 L185.0 529.6 L185.7 526.8 L186.5 521.4 L187.2 517.1 L188.0 513.3 L188.7 509.8 L189.5 508.7 L190.2 506.9 L191.0 504.8 L191.7 504.2 L192.5 504.4 L193.2 506.6 L194.0 505.5 L194.7 508.3 L195.5 508.7 L196.2 508.5 L197.0 507.4 L197.7 511.3 L198.5 515.4 L199.3 520.3 L200.0 523.7 L200.8 528.3 L201.5 530.6 L202.3 529.4 L203.0 528.1 L203.8 524.1 L204.5 517.7 L205.3 512.5 L206.0 508.3 L206.8 506.8 L207.5 504.1 L208.3 499.4 L209.0 499.8 L209.8 496.6 L210.5 499.4 L211.3 499.0 L212.0 498.5 L212.8 501.8 L213.6 502.1 L214.3 499.6 L215.1 504.5 L215.8 507.5 L216.6 511.0 L217.3 516.1 L218.1 521.1 L218.8 526.1 L219.6 528.8 L220.3 529.9 L221.1 528.8 L221.8 525.5 L222.6 519.7 L223.3 513.9 L224.1 508.9 L224.8 506.1 L225.6 503.7 L226.3 500.8 L227.1 501.0 L227.8 496.7 L228.6 500.6 L229.4 501.4 L230.1 501.6 L230.9 501.2 L231.6 503.4 L232.4 505.3 L233.1 505.1 L233.9 507.3 L234.6 512.0 L235.4 517.5 L236.1 521.2 L236.9 526.7 L237.6 529.2 L238.4 532.3 L239.1 530.6 L239.9 525.8 L240.6 520.3 L241.4 511.5 L242.1 508.4 L242.9 504.9 L243.6 500.0 L244.4 499.4 L245.2 499.1 L245.9 496.7 L246.7 496.4 L247.4 496.9 L248.2 498.6 L248.9 501.3 L249.7 501.8 L250.4 503.3 L251.2 505.0 L251.9 507.2 L252.7 511.7 L253.4 517.4 L254.2 523.4 L254.9 529.4 L255.7 531.9 L256.4 531.4 L257.2 529.6 L257.9 526.7 L258.7 519.9 L259.4 514.8 L260.2 512.7 L261.0 507.1 L261.7 506.1 L262.5 506.3 L263.2 501.8 L264.0 500.0 L264.7 502.7 L265.5 500.2 L266.2 502.6 L267.0 505.7 L267.7 504.3 L268.5 506.5 L269.2 508.8 L270.0 512.4 L270.7 513.3 L271.5 519.4 L272.2 523.1 L273.0 528.5 L273.7 531.3 L274.5 529.1 L275.2 527.0 L276.0 522.9 L276.8 517.2 L277.5 512.8 L278.3 510.0 L279.0 506.1 L279.8 502.1 L280.5 500.9 L281.3 500.7 L282.0 500.6 L282.8 499.2 L283.5 501.3 L284.3 500.6 L285.0 501.1 L285.8 501.4 L286.5 503.7 L287.3 505.4 L288.0 507.7 L288.8 509.6 L289.5 516.3 L290.3 522.1 L291.0 525.6 L291.8 528.6 L292.6 529.4 L293.3 529.8 L294.1 525.6 L294.8 519.8 L295.6 513.9 L296.3 511.4 L297.1 509.0 L297.8 508.0 L298.6 503.3 L299.3 502.7 L300.1 501.5 L300.8 498.4 L301.6 500.8 L302.3 500.9 L303.1 504.4 L303.8 504.0 L304.6 505.8 L305.3 507.0 L306.1 508.8 L306.8 512.4 L307.6 518.1 L308.4 522.8 L309.1 528.8 L309.9 530.8 L310.6 530.9 L311.4 530.1 L312.1 526.5 L312.9 519.9 L313.6 515.9 L314.4 512.3 L315.1 507.3 L315.9 507.2 L316.6 502.5 L317.4 502.4 L318.1 500.8 L318.9 500.8 L319.6 505.7 L320.4 503.5 L321.1 506.4 L321.9 506.0 L322.7 506.7 L323.4 506.3 L324.2 510.6 L324.9 512.3 L325.7 519.4 L326.4 523.5 L327.2 528.5 L327.9 530.5 L328.7 530.2 L329.4 529.3 L330.2 525.2 L330.9 519.9 L331.7 512.3 L332.4 509.1 L333.2 506.0 L333.9 504.5 L334.7 502.9 L335.4 501.5 L336.2 498.6 L336.9 501.1 L337.7 501.8 L338.5 499.3 L339.2 500.8 L340.0 503.1 L340.7 504.0 L341.5 505.6 L342.2 507.2 L343.0 512.6 L343.7 517.5 L344.5 522.0 L345.2 526.9 L346.0 530.1 L346.7 530.5 L347.5 529.8 L348.2 526.3 L349.0 520.9 L349.7 515.5 L350.5 511.5 L351.2 510.0 L352.0 508.4 L352.7 505.9 L353.5 503.9 L354.3 502.2 L355.0 505.1 L355.8 503.7 L356.5 505.8 L357.3 505.0 L358.0 507.7 L358.8 508.8 L359.5 509.5 L360.3 511.4 L361.0 515.3 L361.8 519.1 L362.5 523.4 L363.3 528.2 L364.0 530.3 L364.8 530.1 L365.5 529.7 L366.3 525.5 L367.0 519.5 L367.8 516.1 L368.5 510.5 L369.3 508.3 L370.1 506.7 L370.8 503.9 L371.6 502.0 L372.3 500.5 L373.1 500.7 L373.8 502.9 L374.6 501.6 L375.3 503.4 L376.1 505.0 L376.8 505.7 L377.6 506.0 L378.3 509.2 L379.1 512.4 L379.8 518.2 L380.6 522.1 L381.3 526.9 L382.1 530.2 L382.8 534.1 L383.6 531.3 L384.3 527.8 L385.1 521.4 L385.9 516.3 L386.6 509.7 L387.4 504.9 L388.1 503.1 L388.9 501.6 L389.6 498.0 L390.4 498.4 L391.1 499.6 L391.9 499.5 L392.6 499.9 L393.4 501.8 L394.1 502.1 L394.9 506.5 L395.6 503.6 L396.4 509.3 L397.1 512.1 L397.9 519.5 L398.6 524.2 L399.4 530.5 L400.1 533.9 L400.9 527.7 L401.7 526.5 L402.4 523.7 L403.2 519.0 L403.9 513.1 L404.7 510.1 L405.4 506.0 L406.2 504.6 L406.9 500.2 L407.7 500.3 L408.4 500.2 L409.2 500.1 L409.9 504.5 L410.7 502.5 L411.4 503.8 L412.2 503.4 L412.9 504.0 L413.7 505.3 L414.4 507.2 L415.2 512.0 L416.0 516.1 L416.7 520.7 L417.5 525.4 L418.2 527.5 L419.0 530.3 L419.7 529.0 L420.5 525.3 L421.2 518.6 L422.0 514.3 L422.7 510.5 L423.5 504.7 L424.2 505.2 L425.0 502.8 L425.7 500.9 L426.5 502.3 L427.2 500.6 L428.0 501.2 L428.7 502.0 L429.5 502.8 L430.2 503.7 L431.0 504.4 L431.8 507.6 L432.5 509.3 L433.3 513.5 L434.0 517.2 L434.8 522.6 L435.5 528.4 L436.3 530.0 L437.0 532.2 L437.8 530.0 L438.5 525.9 L439.3 520.0 L440.0 512.3 L440.8 506.8 L441.5 503.3 L442.3 502.5 L443.0 497.8 L443.8 496.5 L444.5 493.8 L445.3 495.1 L446.0 496.6 L446.8 498.5 L447.6 499.0 L448.3 499.8 L449.1 501.5 L449.8 502.5 L450.6 507.6 L451.3 510.0 L452.1 516.9 L452.8 522.2 L453.6 528.7 L454.3 531.7 L455.1 528.9 L455.8 527.6 L456.6 524.3 L457.3 517.9 L458.1 513.7 L458.8 509.2 L459.6 506.3 L460.3 506.2 L461.1 500.8 L461.8 502.2 L462.6 499.8 L463.4 502.0 L464.1 503.1 L464.9 500.6 L465.6 504.5 L466.4 505.9 L467.1 504.8 L467.9 507.5 L468.6 508.7 L469.4 510.1 L470.1 517.3 L470.9 521.2 L471.6 526.2 L472.4 528.7 L473.1 530.1 L473.9 528.3 L474.6 525.3 L475.4 519.2 L476.1 514.3 L476.9 512.3 L477.6 507.5 L478.4 506.2 L479.2 503.0 L479.9 501.8 L480.7 499.5 L481.4 504.3 L482.2 503.2 L482.9 503.5 L483.7 505.4 L484.4 504.5 L485.2 506.2 L485.9 507.1 L486.7 511.6 L487.4 514.1 L488.2 518.3 L488.9 522.9 L489.7 527.9 L490.4 529.9 L491.2 530.6 L491.9 529.8 L492.7 524.3 L493.4 519.5 L494.2 513.0 L495.0 509.4 L495.7 505.4 L496.5 505.5 L497.2 503.3 L498.0 500.4 L498.7 499.3 L499.5 503.0 L500.2 504.0 L501.0 501.9 L501.7 503.2 L502.5 503.7 L503.2 504.2 L504.0 506.9 L504.7 506.1 L505.5 511.5 L506.2 516.7 L507.0 522.3 L507.7 528.8 L508.5 530.2 L509.2 529.1 L510.0 527.7 L510.8 524.3 L511.5 518.2 L512.3 514.6 L513.0 510.9 L513.8 507.4 L514.5 506.8 L515.3 504.1 L516.0 501.7 L516.8 498.8 L517.5 502.0 L518.3 501.3 L519.0 504.1 L519.8 504.6 L520.5 504.3 L521.3 505.1 L522.0 508.0 L522.8 508.9 L523.5 512.5 L524.3 516.5 L525.1 521.2 L525.8 526.3 L526.6 528.9 L527.3 527.4 L528.1 526.9 L528.8 523.4 L529.6 519.0 L530.3 514.1 L531.1 511.1 L531.8 507.0 L532.6 505.3 L533.3 504.7 L534.1 502.2 L534.8 500.4 L535.6 500.2 L536.3 502.1 L537.1 502.1 L537.8 504.1 L538.6 503.2 L539.3 507.0 L540.1 506.0 L540.9 511.2 L541.6 510.3 L542.4 515.8 L543.1 521.9 L543.9 525.5 L544.6 527.9 L545.4 530.4 L546.1 528.8 L546.9 525.3 L547.6 518.2 L548.4 514.4 L549.1 511.6 L549.9 507.4 L550.6 505.3 L551.4 502.3 L552.1 501.5 L552.9 502.8 L553.6 502.3 L554.4 502.2 L555.1 503.4 L555.9 502.9 L556.7 504.8 L557.4 505.6 L558.2 507.1 L558.9 509.4 L559.7 514.1 L560.4 516.2 L561.2 522.6 L561.9 527.6 L562.7 530.3 L563.4 528.0 L564.2 527.4 L564.9 522.4 L565.7 515.1 L566.4 509.8 L567.2 507.0 L567.9 501.5 L568.7 501.3 L569.4 498.4 L570.2 497.0 L570.9 496.3 L571.7 495.6 L572.5 498.4 L573.2 499.5 L574.0 497.5 L574.7 500.5 L575.5 501.3 L576.2 501.8 L577.0 505.8 L577.7 510.1 L578.5 514.8 L579.2 520.3 L580.0 525.0 L580.7 528.0 L581.5 527.6 L582.2 526.1 L583.0 523.7 L583.7 518.3 L584.5 511.8 L585.2 508.0 L586.0 506.0 L586.7 505.4 L587.5 500.7 L588.3 500.5 L589.0 498.7 L589.8 502.7 L590.5 501.2 L591.3 502.7 L592.0 504.1 L592.8 502.7 L593.5 503.6 L594.3 506.0 L595.0 508.4 L595.8 510.0 L596.5 515.6 L597.3 520.4 L598.0 524.9 L598.8 527.3 L599.5 532.6 L600.3 531.1 L601.0 526.4 L601.8 519.6 L602.5 515.3 L603.3 511.3 L604.1 507.4 L604.8 506.8 L605.6 500.9 L606.3 500.4 L607.1 497.9 L607.8 502.8 L608.6 501.8 L609.3 499.1 L610.1 504.5 L610.8 505.7 L611.6 504.6 L612.3 504.4 L613.1 508.6 L613.8 513.8 L614.6 518.2 L615.3 523.4 L616.1 529.2 L616.8 531.7 L617.6 530.9 L618.4 529.6 L619.1 525.0 L619.9 518.3 L620.6 513.4 L621.4 511.2 L622.1 505.1 L622.9 505.6 L623.6 498.3 L624.4 501.2 L625.1 500.7 L625.9 501.2 L626.6 499.1 L627.4 499.7 L628.1 500.9 L628.9 502.1 L629.6 504.6 L630.4 504.1 L631.1 508.8 L631.9 513.3 L632.6 517.0 L633.4 522.4 L634.2 528.9 L634.9 531.2 L635.7 528.8 L636.4 527.6 L637.2 524.2 L637.9 516.0 L638.7 513.1 L639.4 506.9 L640.2 502.7 L640.9 501.5 L641.7 498.3 L642.4 499.1 L643.2 495.8 L643.9 495.6 L644.7 498.1 L645.4 497.3 L646.2 499.3 L646.9 502.4 L647.7 501.8 L648.4 501.8 L649.2 507.2 L650.0 509.5 L650.7 515.1 L651.5 521.4 L652.2 526.5 L653.0 528.7 L653.7 532.8 L654.5 532.3 L655.2 527.1 L656.0 520.8 L656.7 515.2 L657.5 510.0 L658.2 507.0 L659.0 505.6 L659.7 502.1 L660.5 501.2 L661.2 499.0 L662.0 501.2 L662.7 504.0 L663.5 500.4 L664.2 502.9 L665.0 504.0 L665.8 505.8 L666.5 507.2 L667.3 510.1 L668.0 514.8 L668.8 519.1 L669.5 524.6 L670.3 530.8 L671.0 532.8 L671.8 531.1 L672.5 529.9 L673.3 525.7 L674.0 518.1 L674.8 515.8 L675.5 511.0 L676.3 507.3 L677.0 506.0 L677.8 502.2 L678.5 503.4 L679.3 502.0 L680.0 502.0 L680.8 504.4 L681.6 501.7 L682.3 506.0 L683.1 504.5 L683.8 505.0 L684.6 508.4 L685.3 510.5 L686.1 513.8 L686.8 517.5 L687.6 523.2 L688.3 529.3 L689.1 530.3 L689.8 528.0 L690.6 528.1 L691.3 524.4 L692.1 514.4 L692.8 510.4 L693.6 508.8 L694.3 501.8 L695.1 499.6 L695.8 501.2 L696.6 495.5 L697.4 494.8 L698.1 496.2 L698.9 497.8 L699.6 496.9 L700.4 500.0 L701.1 499.5 L701.9 501.3 L702.6 502.8 L703.4 504.9 L704.1 508.2 L704.9 514.3 L705.6 519.7 L706.4 524.9 L707.1 528.8 L707.9 528.9 L708.6 527.9 L709.4 524.0 L710.1 521.2 L710.9 515.5 L711.6 512.5 L712.4 509.0 L713.2 505.3 L713.9 505.4 L714.7 504.8 L715.4 503.1 L716.2 502.8 L716.9 504.8 L717.7 502.9 L718.4 507.6 L719.2 505.3 L719.9 506.9 L720.7 507.6 L721.4 509.6 L722.2 514.3 L722.9 518.2 L723.7 522.2 L724.4 527.1 L725.2 529.1 L725.9 529.9 L726.7 528.2 L727.5 526.0 L728.2 519.9 L729.0 513.8 L729.7 509.3 L730.5 507.4 L731.2 504.3 L732.0 503.3 L732.7 502.8 L733.5 502.9 L734.2 501.1 L735.0 499.8 L735.7 502.3 L736.5 505.1 L737.2 503.8 L738.0 507.1 L738.7 508.0 L739.5 508.3 L740.2 512.3 L741.0 517.0 L741.7 522.1 L742.5 527.2 L743.3 529.4 L744.0 533.5 L744.8 531.6 L745.5 528.2 L746.3 521.8 L747.0 514.9 L747.8 509.2 L748.5 506.7 L749.3 506.9 L750.0 497.8 L750.8 501.0 L751.5 498.6 L752.3 498.1 L753.0 499.2 L753.8 500.4 L754.5 503.8 L755.3 502.1 L756.0 505.2 L756.8 505.6 L757.5 508.0 L758.3 513.1 L759.1 520.3 L759.8 524.7 L760.6 530.1 L761.3 532.9 L762.1 527.9 L762.8 526.2 L763.6 521.9 L764.3 514.8 L765.1 509.6 L765.8 506.2 L766.6 503.0 L767.3 500.5 L768.1 497.3 L768.8 497.2 L769.6 496.0 L770.3 493.9 L771.1 496.9 L771.8 498.3 L772.6 498.1 L773.3 501.0 L774.1 502.1 L774.9 501.1 L775.6 505.1 L776.4 508.0 L777.1 513.7 L777.9 519.7 L778.6 524.4 L779.4 527.4 L780.1 529.6 L780.9 528.6 L781.6 525.1 L782.4 520.5 L783.1 514.4 L783.9 511.5 L784.6 507.9 L785.4 508.2 L786.1 504.4 L786.9 503.8 L787.6 502.9 L788.4 503.1 L789.1 503.7 L789.9 505.5 L790.7 505.8 L791.4 506.3 L792.2 506.3 L792.9 508.0 L793.7 509.0 L794.4 513.0 L795.2 518.2 L795.9 522.5 L796.7 528.0 L797.4 529.4 L798.2 528.9 L798.9 528.9 L799.7 524.4 L800.4 519.7 L801.2 515.4 L801.9 513.2 L802.7 509.9 L803.4 509.5 L804.2 506.4 L804.9 505.4 L805.7 504.3 L806.5 506.3 L807.2 504.1 L808.0 506.5 L808.7 506.4 L809.5 506.7 L810.2 508.6 L811.0 506.7 L811.7 511.7 L812.5 514.3 L813.2 519.3 L814.0 522.7 L814.7 527.9 L815.5 529.0 L816.2 529.9 L817.0 528.8 L817.7 524.0 L818.5 517.4 L819.2 512.9 L820.0 509.9 L820.8 507.5 L821.5 504.8 L822.3 500.3 L823.0 498.9 L823.8 500.0" stroke="#dc3912" stroke-width="1.5" fill="none" stroke-linejoin="round"/><path d="M101.4 544.1 L102.2 544.0 L102.9 544.2 L103.7 544.0 L104.4 544.6 L105.2 544.9 L106.0 546.0 L106.7 547.3 L107.5 546.9 L108.2 548.1 L109.0 549.7 L109.7 551.8 L110.5 553.8 L111.2 554.5 L112.0 555.3 L112.7 554.8 L113.5 553.4 L114.2 550.8 L115.0 548.1 L115.7 547.2 L116.5 545.7 L117.2 545.5 L118.0 544.4 L118.7 544.4 L119.5 543.8 L120.3 545.1 L121.0 544.7 L121.8 544.9 L122.5 544.4 L123.3 544.7 L124.0 545.0 L124.8 545.3 L125.5 547.2 L126.3 548.0 L127.0 549.8 L127.8 552.1 L128.5 553.9 L129.3 555.0 L130.0 554.3 L130.8 553.5 L131.5 552.1 L132.3 549.4 L133.0 547.5 L133.8 545.8 L134.5 545.5 L135.3 542.9 L136.1 542.2 L136.8 542.5 L137.6 542.3 L138.3 542.0 L139.1 541.9 L139.8 542.3 L140.6 542.9 L141.3 544.3 L142.1 544.3 L142.8 543.7 L143.6 545.3 L144.3 547.4 L145.1 549.2 L145.8 551.2 L146.6 553.2 L147.3 553.7 L148.1 553.9 L148.8 553.3 L149.6 552.2 L150.3 550.8 L151.1 548.8 L151.9 546.6 L152.6 546.7 L153.4 546.4 L154.1 544.4 L154.9 544.6 L155.6 544.3 L156.4 543.6 L157.1 545.5 L157.9 544.5 L158.6 545.8 L159.4 546.1 L160.1 546.2 L160.9 545.7 L161.6 547.2 L162.4 548.9 L163.1 550.3 L163.9 551.0 L164.6 552.9 L165.4 554.0 L166.1 554.4 L166.9 554.4 L167.7 553.0 L168.4 550.3 L169.2 547.8 L169.9 546.1 L170.7 544.9 L171.4 544.9 L172.2 543.9 L172.9 543.9 L173.7 542.7 L174.4 543.1 L175.2 543.0 L175.9 543.9 L176.7 544.1 L177.4 544.6 L178.2 545.2 L178.9 545.6 L179.7 546.7 L180.4 548.1 L181.2 549.6 L181.9 551.6 L182.7 554.0 L183.5 554.6 L184.2 555.1 L185.0 554.4 L185.7 553.3 L186.5 551.1 L187.2 549.4 L188.0 547.8 L188.7 546.4 L189.5 546.0 L190.2 545.3 L191.0 544.4 L191.7 544.2 L192.5 544.3 L193.2 545.1 L194.0 544.7 L194.7 545.8 L195.5 546.0 L196.2 545.9 L197.0 545.5 L197.7 547.1 L198.5 548.7 L199.3 550.7 L200.0 552.0 L200.8 553.9 L201.5 554.8 L202.3 554.4 L203.0 553.8 L203.8 552.2 L204.5 549.6 L205.3 547.6 L206.0 545.8 L206.8 545.2 L207.5 544.1 L208.3 542.2 L209.0 542.4 L209.8 541.1 L210.5 542.3 L211.3 542.1 L212.0 541.9 L212.8 543.2 L213.6 543.3 L214.3 542.3 L215.1 544.3 L215.8 545.5 L216.6 546.9 L217.3 549.0 L218.1 551.0 L218.8 553.0 L219.6 554.1 L220.3 554.6 L221.1 554.1 L221.8 552.8 L222.6 550.4 L223.3 548.1 L224.1 546.1 L224.8 545.0 L225.6 544.0 L226.3 542.8 L227.1 542.9 L227.8 541.2 L228.6 542.8 L229.4 543.1 L230.1 543.2 L230.9 543.0 L231.6 543.9 L232.4 544.6 L233.1 544.6 L233.9 545.4 L234.6 547.4 L235.4 549.5 L236.1 551.1 L236.9 553.3 L237.6 554.3 L238.4 555.5 L239.1 554.8 L239.9 552.9 L240.6 550.7 L241.4 547.2 L242.1 545.9 L242.9 544.5 L243.6 542.5 L244.4 542.2 L245.2 542.1 L245.9 541.2 L246.7 541.1 L247.4 541.3 L248.2 541.9 L248.9 543.0 L249.7 543.2 L250.4 543.9 L251.2 544.5 L251.9 545.4 L252.7 547.2 L253.4 549.5 L254.2 551.9 L254.9 554.4 L255.7 555.4 L256.4 555.1 L257.2 554.4 L257.9 553.3 L258.7 550.5 L259.4 548.5 L260.2 547.6 L261.0 545.4 L261.7 545.0 L262.5 545.0 L263.2 543.2 L264.0 542.5 L264.7 543.6 L265.5 542.6 L266.2 543.6 L267.0 544.8 L267.7 544.2 L268.5 545.1 L269.2 546.1 L270.0 547.5 L270.7 547.9 L271.5 550.3 L272.2 551.8 L273.0 554.0 L273.7 555.1 L274.5 554.2 L275.2 553.4 L276.0 551.7 L276.8 549.4 L277.5 547.7 L278.3 546.6 L279.0 545.0 L279.8 543.4 L280.5 542.9 L281.3 542.8 L282.0 542.8 L282.8 542.2 L283.5 543.0 L284.3 542.7 L285.0 543.0 L285.8 543.1 L286.5 544.0 L287.3 544.7 L288.0 545.6 L288.8 546.4 L289.5 549.1 L290.3 551.4 L291.0 552.8 L291.8 554.0 L292.6 554.3 L293.3 554.5 L294.1 552.8 L294.8 550.5 L295.6 548.1 L296.3 547.1 L297.1 546.1 L297.8 545.7 L298.6 543.8 L299.3 543.6 L300.1 543.1 L300.8 541.9 L301.6 542.8 L302.3 542.9 L303.1 544.3 L303.8 544.1 L304.6 544.8 L305.3 545.3 L306.1 546.1 L306.8 547.5 L307.6 549.8 L308.4 551.7 L309.1 554.1 L309.9 554.9 L310.6 554.9 L311.4 554.6 L312.1 553.2 L312.9 550.5 L313.6 548.9 L314.4 547.5 L315.1 545.5 L315.9 545.4 L316.6 543.5 L317.4 543.5 L318.1 542.8 L318.9 542.8 L319.6 544.8 L320.4 543.9 L321.1 545.1 L321.9 544.9 L322.7 545.2 L323.4 545.0 L324.2 546.8 L324.9 547.5 L325.7 550.3 L326.4 552.0 L327.2 554.0 L327.9 554.8 L328.7 554.7 L329.4 554.3 L330.2 552.7 L330.9 550.5 L331.7 547.5 L332.4 546.2 L333.2 544.9 L333.9 544.3 L334.7 543.7 L335.4 543.1 L336.2 541.9 L336.9 543.0 L337.7 543.2 L338.5 542.2 L339.2 542.8 L340.0 543.7 L340.7 544.1 L341.5 544.8 L342.2 545.4 L343.0 547.6 L343.7 549.6 L344.5 551.4 L345.2 553.3 L346.0 554.6 L346.7 554.8 L347.5 554.5 L348.2 553.1 L349.0 550.9 L349.7 548.7 L350.5 547.1 L351.2 546.5 L352.0 545.9 L352.7 544.9 L353.5 544.1 L354.3 543.4 L355.0 544.6 L355.8 544.0 L356.5 544.8 L357.3 544.5 L358.0 545.6 L358.8 546.1 L359.5 546.3 L360.3 547.1 L361.0 548.7 L361.8 550.2 L362.5 551.9 L363.3 553.9 L364.0 554.7 L364.8 554.7 L365.5 554.5 L366.3 552.8 L367.0 550.4 L367.8 549.0 L368.5 546.7 L369.3 545.9 L370.1 545.2 L370.8 544.1 L371.6 543.3 L372.3 542.7 L373.1 542.8 L373.8 543.7 L374.6 543.1 L375.3 543.9 L376.1 544.5 L376.8 544.8 L377.6 544.9 L378.3 546.2 L379.1 547.5 L379.8 549.8 L380.6 551.4 L381.3 553.4 L382.1 554.7 L382.8 556.2 L383.6 555.1 L384.3 553.7 L385.1 551.1 L385.9 549.1 L386.6 546.4 L387.4 544.5 L388.1 543.7 L388.9 543.2 L389.6 541.7 L390.4 541.8 L391.1 542.3 L391.9 542.3 L392.6 542.4 L393.4 543.2 L394.1 543.4 L394.9 545.1 L395.6 544.0 L396.4 546.3 L397.1 547.4 L397.9 550.4 L398.6 552.3 L399.4 554.8 L400.1 556.2 L400.9 553.7 L401.7 553.2 L402.4 552.1 L403.2 550.2 L403.9 547.8 L404.7 546.6 L405.4 544.9 L406.2 544.4 L406.9 542.6 L407.7 542.6 L408.4 542.6 L409.2 542.5 L409.9 544.3 L410.7 543.5 L411.4 544.0 L412.2 543.9 L412.9 544.1 L413.7 544.6 L414.4 545.4 L415.2 547.3 L416.0 549.0 L416.7 550.8 L417.5 552.8 L418.2 553.6 L419.0 554.7 L419.7 554.2 L420.5 552.7 L421.2 550.0 L422.0 548.3 L422.7 546.7 L423.5 544.4 L424.2 544.6 L425.0 543.6 L425.7 542.9 L426.5 543.4 L427.2 542.7 L428.0 543.0 L428.7 543.3 L429.5 543.6 L430.2 544.0 L431.0 544.3 L431.8 545.6 L432.5 546.2 L433.3 548.0 L434.0 549.4 L434.8 551.6 L435.5 553.9 L436.3 554.6 L437.0 555.5 L437.8 554.6 L438.5 552.9 L439.3 550.6 L440.0 547.5 L440.8 545.2 L441.5 543.8 L442.3 543.5 L443.0 541.6 L443.8 541.1 L444.5 540.0 L445.3 540.5 L446.0 541.1 L446.8 541.9 L447.6 542.1 L448.3 542.4 L449.1 543.1 L449.8 543.5 L450.6 545.6 L451.3 546.5 L452.1 549.3 L452.8 551.5 L453.6 554.1 L454.3 555.3 L455.1 554.1 L455.8 553.6 L456.6 552.3 L457.3 549.7 L458.1 548.0 L458.8 546.2 L459.6 545.0 L460.3 545.0 L461.1 542.8 L461.8 543.4 L462.6 542.4 L463.4 543.3 L464.1 543.8 L464.9 542.7 L465.6 544.3 L466.4 544.9 L467.1 544.5 L467.9 545.5 L468.6 546.0 L469.4 546.6 L470.1 549.5 L470.9 551.1 L471.6 553.1 L472.4 554.1 L473.1 554.6 L473.9 553.9 L474.6 552.7 L475.4 550.2 L476.1 548.3 L476.9 547.5 L477.6 545.5 L478.4 545.0 L479.2 543.7 L479.9 543.2 L480.7 542.3 L481.4 544.2 L482.2 543.8 L482.9 543.9 L483.7 544.7 L484.4 544.3 L485.2 545.0 L485.9 545.4 L486.7 547.2 L487.4 548.2 L488.2 549.9 L488.9 551.8 L489.7 553.8 L490.4 554.6 L491.2 554.8 L491.9 554.5 L492.7 552.3 L493.4 550.4 L494.2 547.7 L495.0 546.3 L495.7 544.7 L496.5 544.7 L497.2 543.8 L498.0 542.7 L498.7 542.2 L499.5 543.7 L500.2 544.1 L501.0 543.3 L501.7 543.8 L502.5 544.0 L503.2 544.2 L504.0 545.3 L504.7 545.0 L505.5 547.1 L506.2 549.3 L507.0 551.5 L507.7 554.1 L508.5 554.7 L509.2 554.2 L510.0 553.7 L510.8 552.3 L511.5 549.8 L512.3 548.4 L513.0 546.9 L513.8 545.5 L514.5 545.2 L515.3 544.2 L516.0 543.2 L516.8 542.0 L517.5 543.3 L518.3 543.0 L519.0 544.2 L519.8 544.4 L520.5 544.2 L521.3 544.6 L522.0 545.7 L522.8 546.1 L523.5 547.5 L524.3 549.2 L525.1 551.0 L525.8 553.1 L526.6 554.2 L527.3 553.5 L528.1 553.3 L528.8 552.0 L529.6 550.1 L530.3 548.2 L531.1 547.0 L531.8 545.3 L532.6 544.6 L533.3 544.4 L534.1 543.4 L534.8 542.7 L535.6 542.6 L536.3 543.3 L537.1 543.3 L537.8 544.2 L538.6 543.8 L539.3 545.3 L540.1 544.9 L540.9 547.0 L541.6 546.6 L542.4 548.9 L543.1 551.3 L543.9 552.8 L544.6 553.8 L545.4 554.7 L546.1 554.1 L546.9 552.7 L547.6 549.9 L548.4 548.3 L549.1 547.2 L549.9 545.5 L550.6 544.6 L551.4 543.4 L552.1 543.1 L552.9 543.6 L553.6 543.4 L554.4 543.4 L555.1 543.9 L555.9 543.7 L556.7 544.4 L557.4 544.8 L558.2 545.4 L558.9 546.3 L559.7 548.2 L560.4 549.0 L561.2 551.6 L561.9 553.6 L562.7 554.7 L563.4 553.8 L564.2 553.6 L564.9 551.5 L565.7 548.6 L566.4 546.4 L567.2 545.3 L567.9 543.1 L568.7 543.0 L569.4 541.8 L570.2 541.3 L570.9 541.0 L571.7 540.7 L572.5 541.9 L573.2 542.3 L574.0 541.5 L574.7 542.7 L575.5 543.0 L576.2 543.2 L577.0 544.8 L577.7 546.6 L578.5 548.5 L579.2 550.7 L580.0 552.6 L580.7 553.8 L581.5 553.6 L582.2 553.0 L583.0 552.0 L583.7 549.9 L584.5 547.2 L585.2 545.7 L586.0 544.9 L586.7 544.7 L587.5 542.8 L588.3 542.7 L589.0 542.0 L589.8 543.6 L590.5 543.1 L591.3 543.8 L592.0 544.4 L592.8 543.9 L593.5 544.3 L594.3 545.4 L595.0 546.4 L595.8 547.1 L596.5 549.4 L597.3 551.4 L598.0 553.2 L598.8 554.2 L599.5 556.3 L600.3 555.8 L601.0 554.0 L601.8 551.4 L602.5 549.7 L603.3 548.2 L604.1 546.8 L604.8 546.6 L605.6 544.3 L606.3 544.2 L607.1 543.3 L607.8 545.3 L608.6 545.0 L609.3 544.0 L610.1 546.2 L610.8 546.7 L611.6 546.3 L612.3 546.3 L613.1 548.0 L613.8 550.1 L614.6 551.8 L615.3 553.9 L616.1 556.1 L616.8 557.2 L617.6 556.9 L618.4 556.4 L619.1 554.7 L619.9 552.2 L620.6 550.4 L621.4 549.7 L622.1 547.4 L622.9 547.7 L623.6 545.0 L624.4 546.1 L625.1 546.0 L625.9 546.2 L626.6 545.5 L627.4 545.8 L628.1 546.3 L628.9 546.8 L629.6 547.9 L630.4 547.7 L631.1 549.6 L631.9 551.3 L632.6 552.7 L633.4 554.8 L634.2 557.3 L634.9 558.2 L635.7 557.4 L636.4 557.0 L637.2 555.8 L637.9 552.8 L638.7 551.8 L639.4 549.5 L640.2 548.1 L640.9 547.7 L641.7 546.6 L642.4 547.0 L643.2 545.8 L643.9 545.8 L644.7 546.8 L645.4 546.6 L646.2 547.4 L646.9 548.6 L647.7 548.4 L648.4 548.5 L649.2 550.5 L650.0 551.4 L650.7 553.5 L651.5 555.8 L652.2 557.7 L653.0 558.5 L653.7 560.1 L654.5 559.9 L655.2 558.1 L656.0 555.9 L656.7 554.0 L657.5 552.2 L658.2 551.2 L659.0 550.8 L659.7 549.6 L660.5 549.3 L661.2 548.6 L662.0 549.5 L662.7 550.5 L663.5 549.3 L664.2 550.3 L665.0 550.7 L665.8 551.4 L666.5 552.0 L667.3 553.0 L668.0 554.7 L668.8 556.3 L669.5 558.3 L670.3 560.5 L671.0 561.2 L671.8 560.7 L672.5 560.3 L673.3 558.9 L674.0 556.3 L674.8 555.6 L675.5 554.0 L676.3 552.8 L677.0 552.4 L677.8 551.2 L678.5 551.7 L679.3 551.2 L680.0 551.3 L680.8 552.2 L681.6 551.4 L682.3 552.9 L683.1 552.5 L683.8 552.7 L684.6 553.9 L685.3 554.6 L686.1 555.8 L686.8 557.1 L687.6 559.1 L688.3 561.2 L689.1 561.6 L689.8 560.9 L690.6 561.0 L691.3 559.8 L692.1 556.5 L692.8 555.2 L693.6 554.8 L694.3 552.5 L695.1 551.9 L695.8 552.5 L696.6 550.6 L697.4 550.5 L698.1 551.0 L698.9 551.6 L699.6 551.4 L700.4 552.4 L701.1 552.4 L701.9 553.0 L702.6 553.6 L703.4 554.3 L704.1 555.5 L704.9 557.5 L705.6 559.3 L706.4 561.0 L707.1 562.3 L707.9 562.4 L708.6 562.2 L709.4 561.0 L710.1 560.1 L710.9 558.3 L711.6 557.4 L712.4 556.4 L713.2 555.3 L713.9 555.4 L714.7 555.3 L715.4 554.8 L716.2 554.7 L716.9 555.5 L717.7 554.9 L718.4 556.5 L719.2 555.8 L719.9 556.4 L720.7 556.7 L721.4 557.3 L722.2 558.9 L722.9 560.1 L723.7 561.5 L724.4 563.0 L725.2 563.7 L725.9 564.0 L726.7 563.5 L727.5 562.9 L728.2 561.1 L729.0 559.3 L729.7 557.9 L730.5 557.4 L731.2 556.5 L732.0 556.3 L732.7 556.2 L733.5 556.3 L734.2 555.8 L735.0 555.5 L735.7 556.3 L736.5 557.2 L737.2 556.9 L738.0 558.0 L738.7 558.3 L739.5 558.5 L740.2 559.7 L741.0 561.2 L741.7 562.7 L742.5 564.3 L743.3 565.0 L744.0 566.3 L744.8 565.8 L745.5 564.8 L746.3 563.0 L747.0 561.0 L747.8 559.4 L748.5 558.7 L749.3 558.9 L750.0 556.3 L750.8 557.3 L751.5 556.6 L752.3 556.6 L753.0 556.9 L753.8 557.4 L754.5 558.4 L755.3 558.0 L756.0 558.9 L756.8 559.1 L757.5 559.9 L758.3 561.4 L759.1 563.5 L759.8 564.8 L760.6 566.4 L761.3 567.3 L762.1 565.9 L762.8 565.5 L763.6 564.3 L764.3 562.4 L765.1 561.0 L765.8 560.1 L766.6 559.2 L767.3 558.6 L768.1 557.8 L768.8 557.8 L769.6 557.5 L770.3 557.0 L771.1 557.9 L771.8 558.4 L772.6 558.4 L773.3 559.3 L774.1 559.6 L774.9 559.4 L775.6 560.6 L776.4 561.4 L777.1 563.1 L777.9 564.8 L778.6 566.1 L779.4 567.0 L780.1 567.6 L780.9 567.4 L781.6 566.5 L782.4 565.3 L783.1 563.8 L783.9 563.0 L784.6 562.1 L785.4 562.3 L786.1 561.3 L786.9 561.2 L787.6 561.0 L788.4 561.2 L789.1 561.4 L789.9 561.9 L790.7 562.1 L791.4 562.3 L792.2 562.3 L792.9 562.9 L793.7 563.2 L794.4 564.3 L795.2 565.7 L795.9 566.9 L796.7 568.4 L797.4 568.8 L798.2 568.7 L798.9 568.8 L799.7 567.7 L800.4 566.5 L801.2 565.4 L801.9 564.9 L802.7 564.2 L803.4 564.1 L804.2 563.4 L804.9 563.2 L805.7 563.0 L806.5 563.5 L807.2 563.1 L808.0 563.7 L808.7 563.8 L809.5 563.9 L810.2 564.5 L811.0 564.0 L811.7 565.3 L812.5 566.1 L813.2 567.4 L814.0 568.3 L814.7 569.6 L815.5 569.9 L816.2 570.2 L817.0 570.0 L817.7 568.9 L818.5 567.3 L819.2 566.3 L820.0 565.6 L820.8 565.1 L821.5 564.5 L822.3 563.4 L823.0 563.2 L823.8 563.5" stroke="#ff9900" stroke-width="1.5" fill="none" stroke-linejoin="round"/><path d="M101.4 586.6 L102.2 586.3 L102.9 586.9 L103.7 586.3 L104.4 587.6 L105.2 588.4 L106.0 590.9 L106.7 593.7 L107.5 592.8 L108.2 595.5 L109.0 599.2 L109.7 603.9 L110.5 608.4 L111.2 609.9 L112.0 611.8 L112.7 610.7 L113.5 607.4 L114.2 601.5 L115.0 595.5 L115.7 593.5 L116.5 590.1 L117.2 589.6 L118.0 587.4 L118.7 587.2 L119.5 585.9 L120.3 588.8 L121.0 587.9 L121.8 588.4 L122.5 587.3 L123.3 588.0 L124.0 588.6 L124.8 589.2 L125.5 593.5 L126.3 595.2 L127.0 599.3 L127.8 604.6 L128.5 608.5 L129.3 611.1 L130.0 609.3 L130.8 607.7 L131.5 604.6 L132.3 598.6 L133.0 594.2 L133.8 590.4 L134.5 589.7 L135.3 584.0 L136.1 582.2 L136.8 583.1 L137.6 582.6 L138.3 581.9 L139.1 581.8 L139.8 582.5 L140.6 583.8 L141.3 587.0 L142.1 587.1 L142.8 585.7 L143.6 589.4 L144.3 594.0 L145.1 598.1 L145.8 602.5 L146.6 606.9 L147.3 608.2 L148.1 608.6 L148.8 607.3 L149.6 604.8 L150.3 601.5 L151.1 597.2 L151.9 592.1 L152.6 592.5 L153.4 591.7 L154.1 587.3 L154.9 587.8 L155.6 586.9 L156.4 585.5 L157.1 589.8 L157.9 587.6 L158.6 590.3 L159.4 591.1 L160.1 591.3 L160.9 590.1 L161.6 593.5 L162.4 597.4 L163.1 600.4 L163.9 602.1 L164.6 606.2 L165.4 608.8 L166.1 609.6 L166.9 609.7 L167.7 606.5 L168.4 600.5 L169.2 594.8 L169.9 591.0 L170.7 588.3 L171.4 588.4 L172.2 586.2 L172.9 586.2 L173.7 583.4 L174.4 584.4 L175.2 584.1 L175.9 586.2 L176.7 586.7 L177.4 587.6 L178.2 589.0 L178.9 590.0 L179.7 592.4 L180.4 595.5 L181.2 598.9 L181.9 603.4 L182.7 608.8 L183.5 610.2 L184.2 611.1 L185.0 609.7 L185.7 607.2 L186.5 602.4 L187.2 598.5 L188.0 595.0 L188.7 591.8 L189.5 590.8 L190.2 589.2 L191.0 587.3 L191.7 586.8 L192.5 587.0 L193.2 588.9 L194.0 588.0 L194.7 590.5 L195.5 590.8 L196.2 590.7 L197.0 589.7 L197.7 593.2 L198.5 596.9 L199.3 601.3 L200.0 604.4 L200.8 608.5 L201.5 610.6 L202.3 609.6 L203.0 608.3 L203.8 604.8 L204.5 598.9 L205.3 594.3 L206.0 590.5 L206.8 589.1 L207.5 586.7 L208.3 582.4 L209.0 582.9 L209.8 579.9 L210.5 582.5 L211.3 582.1 L212.0 581.6 L212.8 584.6 L213.6 584.9 L214.3 582.6 L215.1 587.1 L215.8 589.8 L216.6 592.9 L217.3 597.5 L218.1 602.0 L218.8 606.6 L219.6 609.0 L220.3 610.0 L221.1 609.0 L221.8 606.0 L222.6 600.8 L223.3 595.5 L224.1 591.1 L224.8 588.5 L225.6 586.3 L226.3 583.7 L227.1 583.9 L227.8 580.0 L228.6 583.6 L229.4 584.3 L230.1 584.5 L230.9 584.1 L231.6 586.1 L232.4 587.8 L233.1 587.6 L233.9 589.6 L234.6 593.9 L235.4 598.8 L236.1 602.2 L236.9 607.1 L237.6 609.4 L238.4 612.2 L239.1 610.6 L239.9 606.3 L240.6 601.3 L241.4 593.4 L242.1 590.6 L242.9 587.4 L243.6 583.0 L244.4 582.4 L245.2 582.2 L245.9 580.0 L246.7 579.8 L247.4 580.2 L248.2 581.7 L248.9 584.2 L249.7 584.7 L250.4 586.0 L251.2 587.5 L251.9 589.5 L252.7 593.5 L253.4 598.7 L254.2 604.2 L254.9 609.6 L255.7 611.8 L256.4 611.3 L257.2 609.7 L257.9 607.1 L258.7 601.0 L259.4 596.4 L260.2 594.4 L261.0 589.4 L261.7 588.5 L262.5 588.7 L263.2 584.6 L264.0 583.0 L264.7 585.5 L265.5 583.2 L266.2 585.4 L267.0 588.2 L267.7 586.9 L268.5 588.9 L269.2 591.0 L270.0 594.2 L270.7 595.0 L271.5 600.6 L272.2 603.8 L273.0 608.7 L273.7 611.3 L274.5 609.3 L275.2 607.4 L276.0 603.6 L276.8 598.6 L277.5 594.6 L278.3 592.1 L279.0 588.5 L279.8 584.9 L280.5 583.8 L281.3 583.6 L282.0 583.6 L282.8 582.3 L283.5 584.1 L284.3 583.5 L285.0 584.0 L285.8 584.3 L286.5 586.3 L287.3 587.9 L288.0 589.9 L288.8 591.7 L289.5 597.7 L290.3 602.9 L291.0 606.1 L291.8 608.9 L292.6 609.5 L293.3 609.9 L294.1 606.2 L294.8 600.9 L295.6 595.6 L296.3 593.3 L297.1 591.1 L297.8 590.2 L298.6 586.0 L299.3 585.4 L300.1 584.3 L300.8 581.6 L301.6 583.7 L302.3 583.8 L303.1 586.9 L303.8 586.7 L304.6 588.3 L305.3 589.3 L306.1 591.0 L306.8 594.2 L307.6 599.3 L308.4 603.6 L309.1 609.0 L309.9 610.8 L310.6 610.9 L311.4 610.2 L312.1 607.0 L312.9 601.0 L313.6 597.3 L314.4 594.1 L315.1 589.6 L315.9 589.5 L316.6 585.2 L317.4 585.2 L318.1 583.7 L318.9 583.7 L319.6 588.1 L320.4 586.1 L321.1 588.8 L321.9 588.4 L322.7 589.1 L323.4 588.7 L324.2 592.5 L324.9 594.1 L325.7 600.5 L326.4 604.2 L327.2 608.7 L327.9 610.5 L328.7 610.3 L329.4 609.5 L330.2 605.8 L330.9 601.0 L331.7 594.1 L332.4 591.3 L333.2 588.4 L333.9 587.0 L334.7 585.6 L335.4 584.3 L336.2 581.7 L336.9 584.0 L337.7 584.6 L338.5 582.3 L339.2 583.8 L340.0 585.8 L340.7 586.6 L341.5 588.1 L342.2 589.5 L343.0 594.4 L343.7 598.8 L344.5 602.8 L345.2 607.3 L346.0 610.2 L346.7 610.5 L347.5 609.9 L348.2 606.8 L349.0 601.9 L349.7 597.0 L350.5 593.4 L351.2 592.0 L352.0 590.6 L352.7 588.3 L353.5 586.5 L354.3 585.0 L355.0 587.6 L355.8 586.4 L356.5 588.2 L357.3 587.6 L358.0 589.9 L358.8 591.0 L359.5 591.5 L360.3 593.3 L361.0 596.9 L361.8 600.3 L362.5 604.1 L363.3 608.5 L364.0 610.4 L364.8 610.2 L365.5 609.9 L366.3 606.0 L367.0 600.7 L367.8 597.6 L368.5 592.4 L369.3 590.5 L370.1 589.1 L370.8 586.5 L371.6 584.8 L372.3 583.4 L373.1 583.6 L373.8 585.6 L374.6 584.4 L375.3 586.1 L376.1 587.5 L376.8 588.2 L377.6 588.4 L378.3 591.4 L379.1 594.2 L379.8 599.4 L380.6 603.0 L381.3 607.3 L382.1 610.3 L382.8 613.8 L383.6 611.3 L384.3 608.1 L385.1 602.3 L385.9 597.7 L386.6 591.7 L387.4 587.4 L388.1 585.8 L388.9 584.5 L389.6 581.2 L390.4 581.5 L391.1 582.6 L391.9 582.6 L392.6 582.9 L393.4 584.6 L394.1 584.9 L394.9 588.9 L395.6 586.3 L396.4 591.4 L397.1 593.9 L397.9 600.6 L398.6 604.9 L399.4 610.6 L400.1 613.6 L400.9 608.0 L401.7 606.9 L402.4 604.4 L403.2 600.2 L403.9 594.8 L404.7 592.1 L405.4 588.4 L406.2 587.2 L406.9 583.2 L407.7 583.2 L408.4 583.2 L409.2 583.1 L409.9 587.1 L410.7 585.2 L411.4 586.4 L412.2 586.1 L412.9 586.6 L413.7 587.8 L414.4 589.5 L415.2 593.8 L416.0 597.5 L416.7 601.7 L417.5 606.0 L418.2 607.9 L419.0 610.4 L419.7 609.2 L420.5 605.8 L421.2 599.8 L422.0 595.9 L422.7 592.5 L423.5 587.2 L424.2 587.7 L425.0 585.5 L425.7 583.8 L426.5 585.1 L427.2 583.5 L428.0 584.1 L428.7 584.8 L429.5 585.5 L430.2 586.3 L431.0 587.0 L431.8 589.9 L432.5 591.4 L433.3 595.2 L434.0 598.5 L434.8 603.4 L435.5 608.6 L436.3 610.1 L437.0 612.1 L437.8 610.1 L438.5 606.3 L439.3 601.0 L440.0 594.1 L440.8 589.1 L441.5 586.0 L442.3 585.2 L443.0 581.0 L443.8 579.8 L444.5 577.4 L445.3 578.5 L446.0 579.9 L446.8 581.7 L447.6 582.1 L448.3 582.8 L449.1 584.4 L449.8 585.2 L450.6 589.9 L451.3 592.0 L452.1 598.2 L452.8 603.1 L453.6 609.0 L454.3 611.6 L455.1 609.1 L455.8 607.9 L456.6 604.9 L457.3 599.2 L458.1 595.4 L458.8 591.3 L459.6 588.7 L460.3 588.6 L461.1 583.8 L461.8 585.0 L462.6 582.8 L463.4 584.8 L464.1 585.8 L464.9 583.5 L465.6 587.1 L466.4 588.3 L467.1 587.4 L467.9 589.7 L468.6 590.9 L469.4 592.2 L470.1 598.6 L470.9 602.2 L471.6 606.7 L472.4 609.0 L473.1 610.2 L473.9 608.6 L474.6 605.8 L475.4 600.3 L476.1 595.9 L476.9 594.1 L477.6 589.7 L478.4 588.6 L479.2 585.7 L479.9 584.7 L480.7 582.5 L481.4 586.9 L482.2 585.9 L482.9 586.2 L483.7 587.9 L484.4 587.1 L485.2 588.6 L485.9 589.4 L486.7 593.5 L487.4 595.7 L488.2 599.5 L488.9 603.7 L489.7 608.2 L490.4 610.1 L491.2 610.6 L491.9 609.9 L492.7 605.0 L493.4 600.6 L494.2 594.7 L495.0 591.5 L495.7 587.9 L496.5 587.9 L497.2 586.0 L498.0 583.4 L498.7 582.3 L499.5 585.8 L500.2 586.6 L501.0 584.7 L501.7 585.9 L502.5 586.4 L503.2 586.8 L504.0 589.2 L504.7 588.5 L505.5 593.4 L506.2 598.1 L507.0 603.2 L507.7 609.0 L508.5 610.3 L509.2 609.3 L510.0 608.0 L510.8 605.0 L511.5 599.4 L512.3 596.2 L513.0 592.9 L513.8 589.7 L514.5 589.1 L515.3 586.7 L516.0 584.6 L516.8 582.0 L517.5 584.8 L518.3 584.2 L519.0 586.7 L519.8 587.2 L520.5 586.9 L521.3 587.6 L522.0 590.2 L522.8 591.0 L523.5 594.3 L524.3 597.9 L525.1 602.1 L525.8 606.8 L526.6 609.1 L527.3 607.7 L528.1 607.3 L528.8 604.2 L529.6 600.1 L530.3 595.7 L531.1 593.0 L531.8 589.3 L532.6 587.8 L533.3 587.3 L534.1 585.0 L534.8 583.4 L535.6 583.2 L536.3 584.9 L537.1 584.9 L537.8 586.7 L538.6 585.8 L539.3 589.4 L540.1 588.5 L540.9 593.1 L541.6 592.3 L542.4 597.3 L543.1 602.8 L543.9 606.0 L544.6 608.2 L545.4 610.4 L546.1 609.0 L546.9 605.8 L547.6 599.5 L548.4 596.0 L549.1 593.5 L549.9 589.7 L550.6 587.8 L551.4 585.0 L552.1 584.4 L552.9 585.5 L553.6 585.1 L554.4 585.0 L555.1 586.1 L555.9 585.6 L556.7 587.4 L557.4 588.1 L558.2 589.4 L558.9 591.5 L559.7 595.7 L560.4 597.6 L561.2 603.4 L561.9 607.9 L562.7 610.3 L563.4 608.3 L564.2 607.8 L564.9 603.2 L565.7 596.7 L566.4 591.8 L567.2 589.3 L567.9 584.4 L568.7 584.2 L569.4 581.5 L570.2 580.3 L570.9 579.6 L571.7 579.1 L572.5 581.6 L573.2 582.6 L574.0 580.8 L574.7 583.5 L575.5 584.2 L576.2 584.7 L577.0 588.2 L577.7 592.1 L578.5 596.4 L579.2 601.3 L580.0 605.6 L580.7 608.3 L581.5 607.9 L582.2 606.6 L583.0 604.4 L583.7 599.6 L584.5 593.6 L585.2 590.2 L586.0 588.4 L586.7 587.9 L587.5 583.7 L588.3 583.5 L589.0 581.8 L589.8 585.4 L590.5 584.1 L591.3 585.4 L592.0 586.7 L592.8 585.4 L593.5 586.3 L594.3 588.4 L595.0 590.6 L595.8 592.0 L596.5 597.1 L597.3 601.4 L598.0 605.5 L598.8 607.6 L599.5 612.4 L600.3 611.1 L601.0 606.9 L601.8 600.7 L602.5 596.8 L603.3 593.2 L604.1 589.7 L604.8 589.1 L605.6 583.8 L606.3 583.4 L607.1 581.1 L607.8 585.5 L608.6 584.6 L609.3 582.2 L610.1 587.1 L610.8 588.2 L611.6 587.2 L612.3 587.0 L613.1 590.8 L613.8 595.5 L614.6 599.5 L615.3 604.1 L616.1 609.3 L616.8 611.7 L617.6 610.9 L618.4 609.7 L619.1 605.5 L619.9 599.5 L620.6 595.1 L621.4 593.1 L622.1 587.6 L622.9 588.0 L623.6 581.5 L624.4 584.1 L625.1 583.6 L625.9 584.1 L626.6 582.2 L627.4 582.7 L628.1 583.8 L628.9 584.9 L629.6 587.1 L630.4 586.7 L631.1 591.0 L631.9 595.0 L632.6 598.4 L633.4 603.3 L634.2 609.1 L634.9 611.2 L635.7 609.0 L636.4 607.9 L637.2 604.8 L637.9 597.4 L638.7 594.9 L639.4 589.2 L640.2 585.5 L640.9 584.3 L641.7 581.5 L642.4 582.2 L643.2 579.2 L643.9 579.0 L644.7 581.3 L645.4 580.5 L646.2 582.4 L646.9 585.2 L647.7 584.6 L648.4 584.6 L649.2 589.5 L650.0 591.5 L650.7 596.7 L651.5 602.3 L652.2 606.9 L653.0 608.9 L653.7 612.6 L654.5 612.2 L655.2 607.4 L656.0 601.8 L656.7 596.7 L657.5 592.1 L658.2 589.3 L659.0 588.1 L659.7 584.9 L660.5 584.0 L661.2 582.1 L662.0 584.1 L662.7 586.6 L663.5 583.3 L664.2 585.6 L665.0 586.6 L665.8 588.2 L666.5 589.5 L667.3 592.2 L668.0 596.4 L668.8 600.3 L669.5 605.3 L670.3 610.8 L671.0 612.7 L671.8 611.1 L672.5 610.0 L673.3 606.2 L674.0 599.3 L674.8 597.2 L675.5 593.0 L676.3 589.6 L677.0 588.5 L677.8 585.0 L678.5 586.0 L679.3 584.8 L680.0 584.8 L680.8 586.9 L681.6 584.6 L682.3 588.4 L683.1 587.1 L683.8 587.5 L684.6 590.6 L685.3 592.5 L686.1 595.5 L686.8 598.8 L687.6 603.9 L688.3 609.4 L689.1 610.4 L689.8 608.3 L690.6 608.4 L691.3 605.1 L692.1 596.0 L692.8 592.4 L693.6 590.9 L694.3 584.6 L695.1 582.6 L695.8 584.1 L696.6 578.9 L697.4 578.3 L698.1 579.6 L698.9 581.0 L699.6 580.2 L700.4 583.0 L701.1 582.6 L701.9 584.2 L702.6 585.5 L703.4 587.4 L704.1 590.4 L704.9 595.9 L705.6 600.8 L706.4 605.4 L707.1 609.0 L707.9 609.1 L708.6 608.2 L709.4 604.7 L710.1 602.2 L710.9 597.0 L711.6 594.2 L712.4 591.2 L713.2 587.8 L713.9 587.9 L714.7 587.4 L715.4 585.8 L716.2 585.5 L716.9 587.3 L717.7 585.6 L718.4 589.9 L719.2 587.8 L719.9 589.3 L720.7 589.9 L721.4 591.6 L722.2 595.9 L722.9 599.4 L723.7 603.1 L724.4 607.5 L725.2 609.3 L725.9 610.0 L726.7 608.5 L727.5 606.5 L728.2 601.0 L729.0 595.5 L729.7 591.4 L730.5 589.7 L731.2 586.9 L732.0 586.0 L732.7 585.5 L733.5 585.6 L734.2 584.0 L735.0 582.9 L735.7 585.1 L736.5 587.6 L737.2 586.4 L738.0 589.5 L738.7 590.2 L739.5 590.5 L740.2 594.1 L741.0 598.4 L741.7 602.9 L742.5 607.6 L743.3 609.6 L744.0 613.2 L744.8 611.5 L745.5 608.4 L746.3 602.7 L747.0 596.5 L747.8 591.3 L748.5 589.1 L749.3 589.2 L750.0 581.0 L750.8 583.9 L751.5 581.7 L752.3 581.3 L753.0 582.3 L753.8 583.4 L754.5 586.4 L755.3 584.9 L756.0 587.7 L756.8 588.1 L757.5 590.2 L758.3 594.8 L759.1 601.3 L759.8 605.3 L760.6 610.2 L761.3 612.7 L762.1 608.2 L762.8 606.7 L763.6 602.7 L764.3 596.4 L765.1 591.7 L765.8 588.6 L766.6 585.7 L767.3 583.4 L768.1 580.6 L768.8 580.5 L769.6 579.4 L770.3 577.5 L771.1 580.2 L771.8 581.5 L772.6 581.3 L773.3 583.9 L774.1 584.9 L774.9 584.0 L775.6 587.6 L776.4 590.2 L777.1 595.4 L777.9 600.8 L778.6 605.1 L779.4 607.7 L780.1 609.7 L780.9 608.8 L781.6 605.7 L782.4 601.5 L783.1 596.1 L783.9 593.4 L784.6 590.1 L785.4 590.4 L786.1 586.9 L786.9 586.4 L787.6 585.6 L788.4 585.8 L789.1 586.3 L789.9 587.9 L790.7 588.2 L791.4 588.7 L792.2 588.7 L792.9 590.3 L793.7 591.2 L794.4 594.8 L795.2 599.4 L795.9 603.3 L796.7 608.3 L797.4 609.6 L798.2 609.1 L798.9 609.1 L799.7 605.1 L800.4 600.8 L801.2 596.9 L801.9 594.9 L802.7 591.9 L803.4 591.5 L804.2 588.8 L804.9 587.8 L805.7 586.8 L806.5 588.6 L807.2 586.7 L808.0 588.8 L808.7 588.8 L809.5 589.1 L810.2 590.8 L811.0 589.1 L811.7 593.5 L812.5 595.9 L813.2 600.4 L814.0 603.5 L814.7 608.2 L815.5 609.2 L816.2 610.0 L817.0 609.0 L817.7 604.7 L818.5 598.7 L819.2 594.7 L820.0 591.9 L820.8 589.8 L821.5 587.3 L822.3 583.3 L823.0 582.0 L823.8 583.0" stroke="#109618" stroke-width="1.5" fill="none" stroke-linejoin="round"/><path d="M101.4 633.3 L102.2 633.1 L102.9 633.5 L103.7 633.1 L104.4 634.1 L105.2 634.7 L106.0 636.7 L106.7 638.9 L107.5 638.2 L108.2 640.3 L109.0 643.2 L109.7 646.9 L110.5 650.4 L111.2 651.6 L112.0 653.1 L112.7 652.2 L113.5 649.6 L114.2 645.0 L115.0 640.3 L115.7 638.7 L116.5 636.1 L117.2 635.7 L118.0 633.9 L118.7 633.8 L119.5 632.8 L120.3 635.0 L121.0 634.4 L121.8 634.7 L122.5 633.9 L123.3 634.4 L124.0 634.9 L124.8 635.4 L125.5 638.7 L126.3 640.1 L127.0 643.3 L127.8 647.4 L128.5 650.6 L129.3 652.6 L130.0 651.2 L130.8 649.9 L131.5 647.4 L132.3 642.7 L133.0 639.3 L133.8 636.3 L134.5 635.7 L135.3 631.2 L136.1 629.9 L136.8 630.6 L137.6 630.2 L138.3 629.6 L139.1 629.5 L139.8 630.1 L140.6 631.2 L141.3 633.6 L142.1 633.7 L142.8 632.6 L143.6 635.5 L144.3 639.1 L145.1 642.4 L145.8 645.9 L146.6 649.3 L147.3 650.3 L148.1 650.6 L148.8 649.6 L149.6 647.6 L150.3 645.1 L151.1 641.7 L151.9 637.6 L152.6 638.0 L153.4 637.3 L154.1 633.9 L154.9 634.2 L155.6 633.6 L156.4 632.5 L157.1 635.8 L157.9 634.1 L158.6 636.2 L159.4 636.9 L160.1 637.0 L160.9 636.1 L161.6 638.7 L162.4 641.8 L163.1 644.2 L163.9 645.5 L164.6 648.8 L165.4 650.8 L166.1 651.4 L166.9 651.4 L167.7 649.0 L168.4 644.3 L169.2 639.8 L169.9 636.8 L170.7 634.7 L171.4 634.7 L172.2 633.0 L172.9 633.0 L173.7 630.8 L174.4 631.6 L175.2 631.3 L175.9 633.0 L176.7 633.4 L177.4 634.1 L178.2 635.2 L178.9 636.0 L179.7 637.9 L180.4 640.3 L181.2 643.0 L181.9 646.5 L182.7 650.8 L183.5 651.8 L184.2 652.6 L185.0 651.5 L185.7 649.5 L186.5 645.7 L187.2 642.7 L188.0 639.9 L188.7 637.4 L189.5 636.7 L190.2 635.4 L191.0 633.9 L191.7 633.5 L192.5 633.6 L193.2 635.2 L194.0 634.4 L194.7 636.4 L195.5 636.7 L196.2 636.6 L197.0 635.7 L197.7 638.5 L198.5 641.4 L199.3 644.9 L200.0 647.3 L200.8 650.6 L201.5 652.2 L202.3 651.4 L203.0 650.4 L203.8 647.6 L204.5 643.0 L205.3 639.4 L206.0 636.4 L206.8 635.3 L207.5 633.4 L208.3 630.1 L209.0 630.4 L209.8 628.1 L210.5 630.1 L211.3 629.8 L212.0 629.4 L212.8 631.8 L213.6 632.0 L214.3 630.2 L215.1 633.7 L215.8 635.9 L216.6 638.3 L217.3 641.9 L218.1 645.4 L218.8 649.0 L219.6 651.0 L220.3 651.7 L221.1 650.9 L221.8 648.6 L222.6 644.5 L223.3 640.3 L224.1 636.8 L224.8 634.8 L225.6 633.1 L226.3 631.1 L227.1 631.2 L227.8 628.2 L228.6 631.0 L229.4 631.5 L230.1 631.7 L230.9 631.3 L231.6 632.9 L232.4 634.3 L233.1 634.1 L233.9 635.7 L234.6 639.0 L235.4 642.9 L236.1 645.6 L236.9 649.4 L237.6 651.2 L238.4 653.5 L239.1 652.2 L239.9 648.8 L240.6 644.9 L241.4 638.7 L242.1 636.5 L242.9 634.0 L243.6 630.5 L244.4 630.0 L245.2 629.9 L245.9 628.2 L246.7 628.0 L247.4 628.3 L248.2 629.5 L248.9 631.4 L249.7 631.8 L250.4 632.9 L251.2 634.0 L251.9 635.6 L252.7 638.8 L253.4 642.8 L254.2 647.1 L254.9 651.4 L255.7 653.2 L256.4 652.8 L257.2 651.5 L257.9 649.4 L258.7 644.7 L259.4 641.0 L260.2 639.5 L261.0 635.5 L261.7 634.8 L262.5 635.0 L263.2 631.8 L264.0 630.5 L264.7 632.4 L265.5 630.7 L266.2 632.4 L267.0 634.6 L267.7 633.5 L268.5 635.1 L269.2 636.8 L270.0 639.3 L270.7 640.0 L271.5 644.3 L272.2 646.9 L273.0 650.7 L273.7 652.7 L274.5 651.1 L275.2 649.6 L276.0 646.7 L276.8 642.7 L277.5 639.6 L278.3 637.6 L279.0 634.8 L279.8 632.0 L280.5 631.1 L281.3 631.0 L282.0 630.9 L282.8 630.0 L283.5 631.4 L284.3 630.9 L285.0 631.3 L285.8 631.5 L286.5 633.1 L287.3 634.4 L288.0 635.9 L288.8 637.3 L289.5 642.0 L290.3 646.2 L291.0 648.6 L291.8 650.8 L292.6 651.3 L293.3 651.6 L294.1 648.7 L294.8 644.5 L295.6 640.4 L296.3 638.6 L297.1 636.9 L297.8 636.2 L298.6 632.9 L299.3 632.4 L300.1 631.5 L300.8 629.4 L301.6 631.1 L302.3 631.1 L303.1 633.6 L303.8 633.4 L304.6 634.6 L305.3 635.5 L306.1 636.8 L306.8 639.3 L307.6 643.3 L308.4 646.7 L309.1 651.0 L309.9 652.4 L310.6 652.4 L311.4 651.9 L312.1 649.3 L312.9 644.6 L313.6 641.8 L314.4 639.2 L315.1 635.7 L315.9 635.6 L316.6 632.2 L317.4 632.2 L318.1 631.0 L318.9 631.1 L319.6 634.5 L320.4 633.0 L321.1 635.0 L321.9 634.8 L322.7 635.3 L323.4 635.0 L324.2 638.0 L324.9 639.2 L325.7 644.3 L326.4 647.2 L327.2 650.7 L327.9 652.1 L328.7 651.9 L329.4 651.3 L330.2 648.4 L330.9 644.6 L331.7 639.2 L332.4 637.0 L333.2 634.7 L333.9 633.7 L334.7 632.6 L335.4 631.5 L336.2 629.5 L336.9 631.3 L337.7 631.8 L338.5 630.0 L339.2 631.1 L340.0 632.7 L340.7 633.3 L341.5 634.5 L342.2 635.6 L343.0 639.4 L343.7 642.9 L344.5 646.1 L345.2 649.6 L346.0 651.9 L346.7 652.1 L347.5 651.7 L348.2 649.2 L349.0 645.3 L349.7 641.5 L350.5 638.6 L351.2 637.6 L352.0 636.5 L352.7 634.7 L353.5 633.2 L354.3 632.1 L355.0 634.1 L355.8 633.1 L356.5 634.6 L357.3 634.1 L358.0 635.9 L358.8 636.8 L359.5 637.2 L360.3 638.6 L361.0 641.4 L361.8 644.1 L362.5 647.1 L363.3 650.5 L364.0 652.0 L364.8 651.9 L365.5 651.6 L366.3 648.6 L367.0 644.4 L367.8 641.9 L368.5 637.9 L369.3 636.4 L370.1 635.3 L370.8 633.2 L371.6 631.9 L372.3 630.8 L373.1 631.0 L373.8 632.5 L374.6 631.6 L375.3 632.9 L376.1 634.0 L376.8 634.6 L377.6 634.7 L378.3 637.1 L379.1 639.3 L379.8 643.4 L380.6 646.2 L381.3 649.6 L382.1 651.9 L382.8 654.7 L383.6 652.7 L384.3 650.2 L385.1 645.7 L385.9 642.1 L386.6 637.4 L387.4 634.0 L388.1 632.7 L388.9 631.6 L389.6 629.1 L390.4 629.3 L391.1 630.2 L391.9 630.2 L392.6 630.4 L393.4 631.8 L394.1 632.0 L394.9 635.1 L395.6 633.1 L396.4 637.1 L397.1 639.1 L397.9 644.4 L398.6 647.7 L399.4 652.1 L400.1 654.5 L400.9 650.1 L401.7 649.3 L402.4 647.3 L403.2 644.0 L403.9 639.8 L404.7 637.7 L405.4 634.7 L406.2 633.8 L406.9 630.6 L407.7 630.7 L408.4 630.6 L409.2 630.6 L409.9 633.7 L410.7 632.2 L411.4 633.2 L412.2 632.9 L412.9 633.4 L413.7 634.2 L414.4 635.6 L415.2 639.0 L416.0 641.9 L416.7 645.2 L417.5 648.6 L418.2 650.1 L419.0 652.0 L419.7 651.1 L420.5 648.5 L421.2 643.7 L422.0 640.7 L422.7 638.0 L423.5 633.8 L424.2 634.2 L425.0 632.5 L425.7 631.2 L426.5 632.1 L427.2 630.9 L428.0 631.3 L428.7 631.9 L429.5 632.5 L430.2 633.1 L431.0 633.6 L431.8 635.9 L432.5 637.1 L433.3 640.1 L434.0 642.7 L434.8 646.5 L435.5 650.6 L436.3 651.8 L437.0 653.3 L437.8 651.8 L438.5 648.8 L439.3 644.7 L440.0 639.2 L440.8 635.3 L441.5 632.9 L442.3 632.3 L443.0 629.0 L443.8 628.0 L444.5 626.1 L445.3 627.0 L446.0 628.1 L446.8 629.5 L447.6 629.8 L448.3 630.3 L449.1 631.6 L449.8 632.3 L450.6 635.9 L451.3 637.6 L452.1 642.5 L452.8 646.3 L453.6 650.9 L454.3 653.0 L455.1 651.0 L455.8 650.1 L456.6 647.7 L457.3 643.2 L458.1 640.2 L458.8 637.1 L459.6 635.0 L460.3 634.9 L461.1 631.1 L461.8 632.1 L462.6 630.3 L463.4 631.9 L464.1 632.7 L464.9 630.9 L465.6 633.7 L466.4 634.7 L467.1 633.9 L467.9 635.8 L468.6 636.7 L469.4 637.7 L470.1 642.8 L470.9 645.6 L471.6 649.1 L472.4 650.9 L473.1 651.9 L473.9 650.6 L474.6 648.4 L475.4 644.1 L476.1 640.6 L476.9 639.3 L477.6 635.8 L478.4 634.9 L479.2 632.6 L479.9 631.8 L480.7 630.1 L481.4 633.5 L482.2 632.8 L482.9 633.0 L483.7 634.3 L484.4 633.7 L485.2 634.9 L485.9 635.5 L486.7 638.7 L487.4 640.5 L488.2 643.5 L488.9 646.8 L489.7 650.3 L490.4 651.8 L491.2 652.2 L491.9 651.6 L492.7 647.8 L493.4 644.3 L494.2 639.7 L495.0 637.2 L495.7 634.3 L496.5 634.4 L497.2 632.9 L498.0 630.8 L498.7 630.0 L499.5 632.7 L500.2 633.4 L501.0 631.8 L501.7 632.8 L502.5 633.1 L503.2 633.4 L504.0 635.4 L504.7 634.8 L505.5 638.6 L506.2 642.4 L507.0 646.3 L507.7 651.0 L508.5 651.9 L509.2 651.2 L510.0 650.2 L510.8 647.8 L511.5 643.4 L512.3 640.8 L513.0 638.3 L513.8 635.8 L514.5 635.3 L515.3 633.4 L516.0 631.7 L516.8 629.7 L517.5 631.9 L518.3 631.4 L519.0 633.4 L519.8 633.8 L520.5 633.6 L521.3 634.1 L522.0 636.2 L522.8 636.8 L523.5 639.4 L524.3 642.2 L525.1 645.5 L525.8 649.2 L526.6 651.0 L527.3 649.9 L528.1 649.6 L528.8 647.1 L529.6 644.0 L530.3 640.5 L531.1 638.4 L531.8 635.4 L532.6 634.3 L533.3 633.9 L534.1 632.1 L534.8 630.8 L535.6 630.6 L536.3 632.0 L537.1 632.0 L537.8 633.4 L538.6 632.7 L539.3 635.5 L540.1 634.8 L540.9 638.4 L541.6 637.8 L542.4 641.7 L543.1 646.1 L543.9 648.6 L544.6 650.3 L545.4 652.1 L546.1 650.9 L546.9 648.4 L547.6 643.4 L548.4 640.7 L549.1 638.8 L549.9 635.7 L550.6 634.2 L551.4 632.1 L552.1 631.6 L552.9 632.5 L553.6 632.2 L554.4 632.1 L555.1 632.9 L555.9 632.6 L556.7 633.9 L557.4 634.5 L558.2 635.5 L558.9 637.2 L559.7 640.5 L560.4 642.0 L561.2 646.5 L561.9 650.1 L562.7 652.0 L563.4 650.4 L564.2 650.0 L564.9 646.4 L565.7 641.3 L566.4 637.4 L567.2 635.5 L567.9 631.6 L568.7 631.5 L569.4 629.4 L570.2 628.4 L570.9 627.9 L571.7 627.4 L572.5 629.4 L573.2 630.2 L574.0 628.8 L574.7 630.9 L575.5 631.4 L576.2 631.8 L577.0 634.6 L577.7 637.6 L578.5 641.0 L579.2 644.9 L580.0 648.2 L580.7 650.4 L581.5 650.1 L582.2 649.0 L583.0 647.3 L583.7 643.5 L584.5 638.8 L585.2 636.2 L586.0 634.7 L586.7 634.3 L587.5 631.0 L588.3 630.9 L589.0 629.6 L589.8 632.4 L590.5 631.3 L591.3 632.4 L592.0 633.4 L592.8 632.4 L593.5 633.1 L594.3 634.8 L595.0 636.5 L595.8 637.6 L596.5 641.6 L597.3 645.0 L598.0 648.1 L598.8 649.8 L599.5 653.6 L600.3 652.6 L601.0 649.2 L601.8 644.4 L602.5 641.4 L603.3 638.5 L604.1 635.8 L604.8 635.3 L605.6 631.2 L606.3 630.8 L607.1 629.0 L607.8 632.5 L608.6 631.8 L609.3 629.8 L610.1 633.7 L610.8 634.6 L611.6 633.8 L612.3 633.6 L613.1 636.6 L613.8 640.3 L614.6 643.4 L615.3 647.1 L616.1 651.2 L616.8 653.0 L617.6 652.5 L618.4 651.5 L619.1 648.2 L619.9 643.5 L620.6 640.0 L621.4 638.5 L622.1 634.1 L622.9 634.5 L623.6 629.3 L624.4 631.3 L625.1 631.0 L625.9 631.3 L626.6 629.9 L627.4 630.3 L628.1 631.2 L628.9 632.0 L629.6 633.8 L630.4 633.4 L631.1 636.8 L631.9 639.9 L632.6 642.6 L633.4 646.4 L634.2 651.0 L634.9 652.6 L635.7 651.0 L636.4 650.1 L637.2 647.7 L637.9 641.8 L638.7 639.8 L639.4 635.4 L640.2 632.4 L640.9 631.5 L641.7 629.3 L642.4 629.9 L643.2 627.5 L643.9 627.3 L644.7 629.2 L645.4 628.6 L646.2 630.0 L646.9 632.2 L647.7 631.8 L648.4 631.8 L649.2 635.6 L650.0 637.2 L650.7 641.2 L651.5 645.7 L652.2 649.3 L653.0 650.9 L653.7 653.8 L654.5 653.5 L655.2 649.7 L656.0 645.3 L656.7 641.3 L657.5 637.6 L658.2 635.5 L659.0 634.5 L659.7 632.0 L660.5 631.3 L661.2 629.8 L662.0 631.4 L662.7 633.3 L663.5 630.8 L664.2 632.6 L665.0 633.3 L665.8 634.6 L666.5 635.6 L667.3 637.7 L668.0 641.0 L668.8 644.1 L669.5 648.0 L670.3 652.4 L671.0 653.8 L671.8 652.5 L672.5 651.7 L673.3 648.7 L674.0 643.3 L674.8 641.7 L675.5 638.3 L676.3 635.7 L677.0 634.8 L677.8 632.0 L678.5 632.9 L679.3 631.9 L680.0 631.9 L680.8 633.6 L681.6 631.7 L682.3 634.8 L683.1 633.7 L683.8 634.0 L684.6 636.5 L685.3 637.9 L686.1 640.3 L686.8 642.9 L687.6 646.9 L688.3 651.3 L689.1 652.0 L689.8 650.4 L690.6 650.5 L691.3 647.8 L692.1 640.7 L692.8 637.9 L693.6 636.7 L694.3 631.8 L695.1 630.2 L695.8 631.4 L696.6 627.3 L697.4 626.8 L698.1 627.8 L698.9 628.9 L699.6 628.3 L700.4 630.5 L701.1 630.2 L701.9 631.4 L702.6 632.5 L703.4 633.9 L704.1 636.4 L704.9 640.6 L705.6 644.5 L706.4 648.1 L707.1 650.9 L707.9 651.0 L708.6 650.3 L709.4 647.5 L710.1 645.6 L710.9 641.5 L711.6 639.3 L712.4 636.9 L713.2 634.3 L713.9 634.3 L714.7 633.9 L715.4 632.7 L716.2 632.5 L716.9 633.9 L717.7 632.5 L718.4 635.9 L719.2 634.3 L719.9 635.4 L720.7 635.9 L721.4 637.3 L722.2 640.6 L722.9 643.4 L723.7 646.3 L724.4 649.7 L725.2 651.2 L725.9 651.7 L726.7 650.5 L727.5 649.0 L728.2 644.6 L729.0 640.3 L729.7 637.1 L730.5 635.8 L731.2 633.6 L732.0 632.9 L732.7 632.5 L733.5 632.6 L734.2 631.3 L735.0 630.4 L735.7 632.1 L736.5 634.1 L737.2 633.2 L738.0 635.6 L738.7 636.2 L739.5 636.4 L740.2 639.3 L741.0 642.6 L741.7 646.2 L742.5 649.8 L743.3 651.4 L744.0 654.3 L744.8 652.9 L745.5 650.5 L746.3 645.9 L747.0 641.1 L747.8 637.0 L748.5 635.3 L749.3 635.4 L750.0 628.9 L750.8 631.2 L751.5 629.5 L752.3 629.2 L753.0 629.9 L753.8 630.8 L754.5 633.2 L755.3 632.0 L756.0 634.2 L756.8 634.5 L757.5 636.2 L758.3 639.8 L759.1 644.9 L759.8 648.0 L760.6 651.9 L761.3 653.8 L762.1 650.3 L762.8 649.1 L763.6 646.0 L764.3 641.0 L765.1 637.3 L765.8 634.9 L766.6 632.7 L767.3 630.8 L768.1 628.6 L768.8 628.5 L769.6 627.7 L770.3 626.2 L771.1 628.3 L771.8 629.3 L772.6 629.1 L773.3 631.2 L774.1 632.0 L774.9 631.2 L775.6 634.1 L776.4 636.2 L777.1 640.2 L777.9 644.5 L778.6 647.8 L779.4 649.9 L780.1 651.5 L780.9 650.8 L781.6 648.3 L782.4 645.0 L783.1 640.8 L783.9 638.7 L784.6 636.1 L785.4 636.3 L786.1 633.6 L786.9 633.2 L787.6 632.6 L788.4 632.7 L789.1 633.1 L789.9 634.4 L790.7 634.6 L791.4 634.9 L792.2 635.0 L792.9 636.2 L793.7 636.9 L794.4 639.8 L795.2 643.4 L795.9 646.5 L796.7 650.4 L797.4 651.4 L798.2 651.0 L798.9 651.0 L799.7 647.8 L800.4 644.4 L801.2 641.4 L801.9 639.9 L802.7 637.5 L803.4 637.2 L804.2 635.1 L804.9 634.3 L805.7 633.5 L806.5 634.9 L807.2 633.4 L808.0 635.1 L808.7 635.1 L809.5 635.3 L810.2 636.6 L811.0 635.3 L811.7 638.8 L812.5 640.6 L813.2 644.2 L814.0 646.6 L814.7 650.3 L815.5 651.1 L816.2 651.7 L817.0 650.9 L817.7 647.5 L818.5 642.9 L819.2 639.7 L820.0 637.5 L820.8 635.8 L821.5 633.9 L822.3 630.7 L823.0 629.7 L823.8 630.5" stroke="#990099" stroke-width="1.5" fill="none" stroke-linejoin="round"/><path d="M101.4 503.5 L102.2 502.8 L102.9 504.1 L103.7 502.8 L104.4 505.8 L105.2 507.7 L106.0 513.7 L106.7 520.3 L107.5 518.1 L108.2 524.5 L109.0 533.2 L109.7 544.3 L110.5 554.8 L111.2 558.4 L112.0 562.8 L112.7 560.2 L113.5 552.4 L114.2 538.6 L115.0 524.4 L115.7 519.7 L116.5 511.8 L117.2 510.7 L118.0 505.3 L118.7 504.9 L119.5 501.8 L120.3 508.6 L121.0 506.6 L121.8 507.6 L122.5 505.1 L123.3 506.8 L124.0 508.1 L124.8 509.6 L125.5 519.7 L126.3 523.8 L127.0 533.3 L127.8 545.8 L128.5 555.2 L129.3 561.3 L130.0 557.1 L130.8 553.2 L131.5 545.8 L132.3 531.7 L133.0 521.4 L133.8 512.4 L134.5 510.7 L135.3 497.2 L136.1 493.2 L136.8 495.2 L137.6 494.0 L138.3 492.4 L139.1 492.1 L139.8 493.7 L140.6 497.0 L141.3 504.3 L142.1 504.7 L142.8 501.3 L143.6 510.0 L144.3 520.9 L145.1 530.6 L145.8 541.1 L146.6 551.3 L147.3 554.3 L148.1 555.4 L148.8 552.2 L149.6 546.4 L150.3 538.7 L151.1 528.5 L151.9 516.4 L152.6 517.4 L153.4 515.4 L154.1 505.2 L154.9 506.2 L155.6 504.3 L156.4 501.0 L157.1 511.0 L157.9 505.8 L158.6 512.2 L159.4 514.1 L160.1 514.6 L160.9 511.7 L161.6 519.7 L162.4 528.9 L163.1 536.0 L163.9 539.9 L164.6 549.8 L165.4 555.9 L166.1 557.7 L166.9 557.8 L167.7 550.5 L168.4 536.3 L169.2 522.9 L169.9 513.8 L170.7 507.6 L171.4 507.6 L172.2 502.5 L172.9 502.5 L173.7 496.0 L174.4 498.4 L175.2 497.5 L175.9 502.6 L176.7 503.6 L177.4 505.9 L178.2 509.2 L178.9 511.6 L179.7 517.1 L180.4 524.5 L181.2 532.5 L181.9 543.1 L182.7 555.8 L183.5 559.0 L184.2 561.3 L185.0 558.0 L185.7 552.1 L186.5 540.6 L187.2 531.5 L188.0 523.2 L188.7 515.8 L189.5 513.5 L190.2 509.6 L191.0 505.2 L191.7 504.0 L192.5 504.4 L193.2 509.0 L194.0 506.7 L194.7 512.7 L195.5 513.5 L196.2 513.2 L197.0 510.7 L197.7 519.0 L198.5 527.8 L199.3 538.2 L200.0 545.4 L200.8 555.2 L201.5 560.1 L202.3 557.6 L203.0 554.8 L203.8 546.3 L204.5 532.6 L205.3 521.7 L206.0 512.7 L206.8 509.5 L207.5 503.7 L208.3 493.7 L209.0 494.7 L209.8 487.7 L210.5 493.8 L211.3 492.8 L212.0 491.7 L212.8 498.8 L213.6 499.4 L214.3 494.1 L215.1 504.6 L215.8 511.1 L216.6 518.4 L217.3 529.2 L218.1 539.8 L218.8 550.6 L219.6 556.4 L220.3 558.7 L221.1 556.3 L221.8 549.2 L222.6 536.9 L223.3 524.5 L224.1 514.0 L224.8 508.0 L225.6 502.8 L226.3 496.7 L227.1 497.2 L227.8 488.0 L228.6 496.4 L229.4 498.1 L230.1 498.5 L230.9 497.5 L231.6 502.2 L232.4 506.3 L233.1 505.9 L233.9 510.6 L234.6 520.6 L235.4 532.2 L236.1 540.2 L236.9 551.8 L237.6 557.2 L238.4 563.9 L239.1 560.1 L239.9 550.0 L240.6 538.1 L241.4 519.6 L242.1 512.9 L242.9 505.4 L243.6 494.9 L244.4 493.6 L245.2 493.1 L245.9 488.0 L246.7 487.4 L247.4 488.5 L248.2 492.0 L248.9 497.8 L249.7 498.9 L250.4 502.1 L251.2 505.6 L251.9 510.3 L252.7 519.8 L253.4 532.0 L254.2 544.9 L254.9 557.7 L255.7 563.0 L256.4 561.8 L257.2 558.0 L257.9 551.8 L258.7 537.5 L259.4 526.6 L260.2 521.9 L261.0 510.1 L261.7 508.0 L262.5 508.4 L263.2 498.8 L264.0 495.0 L264.7 500.8 L265.5 495.5 L266.2 500.6 L267.0 507.2 L267.7 504.1 L268.5 508.9 L269.2 513.8 L270.0 521.4 L270.7 523.4 L271.5 536.4 L272.2 544.1 L273.0 555.6 L273.7 561.6 L274.5 556.9 L275.2 552.4 L276.0 543.7 L276.8 531.7 L277.5 522.3 L278.3 516.4 L279.0 508.0 L279.8 499.5 L280.5 496.9 L281.3 496.4 L282.0 496.3 L282.8 493.4 L283.5 497.7 L284.3 496.2 L285.0 497.4 L285.8 498.0 L286.5 502.9 L287.3 506.6 L288.0 511.3 L288.8 515.4 L289.5 529.6 L290.3 542.0 L291.0 549.4 L291.8 555.9 L292.6 557.5 L293.3 558.4 L294.1 549.6 L294.8 537.1 L295.6 524.6 L296.3 519.2 L297.1 514.2 L297.8 512.0 L298.6 502.1 L299.3 500.7 L300.1 498.1 L300.8 491.6 L301.6 496.8 L302.3 496.9 L303.1 504.3 L303.8 503.6 L304.6 507.4 L305.3 509.9 L306.1 513.8 L306.8 521.5 L307.6 533.5 L308.4 543.6 L309.1 556.4 L309.9 560.6 L310.6 560.7 L311.4 559.1 L312.1 551.5 L312.9 537.4 L313.6 528.8 L314.4 521.2 L315.1 510.6 L315.9 510.3 L316.6 500.2 L317.4 500.2 L318.1 496.6 L318.9 496.7 L319.6 507.1 L320.4 502.4 L321.1 508.6 L321.9 507.8 L322.7 509.3 L323.4 508.5 L324.2 517.5 L324.9 521.2 L325.7 536.3 L326.4 545.1 L327.2 555.7 L327.9 559.9 L328.7 559.3 L329.4 557.4 L330.2 548.6 L330.9 537.3 L331.7 521.2 L332.4 514.5 L333.2 507.7 L333.9 504.5 L334.7 501.2 L335.4 498.1 L336.2 492.0 L336.9 497.4 L337.7 498.8 L338.5 493.4 L339.2 496.8 L340.0 501.5 L340.7 503.5 L341.5 506.9 L342.2 510.4 L343.0 521.8 L343.7 532.3 L344.5 541.8 L345.2 552.2 L346.0 559.1 L346.7 559.9 L347.5 558.5 L348.2 551.0 L349.0 539.5 L349.7 527.9 L350.5 519.4 L351.2 516.3 L352.0 513.0 L352.7 507.5 L353.5 503.2 L354.3 499.7 L355.0 505.9 L355.8 502.9 L356.5 507.4 L357.3 505.7 L358.0 511.3 L358.8 513.8 L359.5 515.2 L360.3 519.2 L361.0 527.7 L361.8 535.7 L362.5 544.8 L363.3 555.1 L364.0 559.6 L364.8 559.2 L365.5 558.3 L366.3 549.3 L367.0 536.6 L367.8 529.3 L368.5 517.2 L369.3 512.7 L370.1 509.3 L370.8 503.2 L371.6 499.3 L372.3 496.0 L373.1 496.5 L373.8 501.1 L374.6 498.3 L375.3 502.2 L376.1 505.6 L376.8 507.2 L377.6 507.7 L378.3 514.7 L379.1 521.4 L379.8 533.8 L380.6 542.1 L381.3 552.3 L382.1 559.2 L382.8 567.5 L383.6 561.7 L384.3 554.2 L385.1 540.6 L385.9 529.7 L386.6 515.6 L387.4 505.4 L388.1 501.5 L388.9 498.4 L389.6 490.7 L390.4 491.5 L391.1 494.1 L391.9 494.0 L392.6 494.7 L393.4 498.8 L394.1 499.5 L394.9 508.8 L395.6 502.7 L396.4 514.8 L397.1 520.8 L397.9 536.6 L398.6 546.6 L399.4 559.9 L400.1 567.1 L400.9 553.9 L401.7 551.4 L402.4 545.5 L403.2 535.4 L403.9 522.8 L404.7 516.5 L405.4 507.7 L406.2 504.8 L406.9 495.4 L407.7 495.5 L408.4 495.4 L409.2 495.2 L409.9 504.7 L410.7 500.2 L411.4 503.1 L412.2 502.3 L412.9 503.6 L413.7 506.2 L414.4 510.4 L415.2 520.5 L416.0 529.2 L416.7 539.0 L417.5 549.2 L418.2 553.7 L419.0 559.5 L419.7 556.8 L420.5 548.9 L421.2 534.7 L422.0 525.5 L422.7 517.4 L423.5 504.9 L424.2 506.1 L425.0 500.9 L425.7 497.0 L426.5 499.9 L427.2 496.2 L428.0 497.5 L428.7 499.3 L429.5 501.0 L430.2 502.9 L431.0 504.4 L431.8 511.2 L432.5 514.7 L433.3 523.8 L434.0 531.6 L434.8 543.1 L435.5 555.4 L436.3 558.9 L437.0 563.5 L437.8 558.9 L438.5 550.0 L439.3 537.5 L440.0 521.2 L440.8 509.4 L441.5 502.1 L442.3 500.3 L443.0 490.4 L443.8 487.6 L444.5 481.7 L445.3 484.5 L446.0 487.7 L446.8 491.9 L447.6 492.8 L448.3 494.5 L449.1 498.2 L449.8 500.3 L450.6 511.2 L451.3 516.2 L452.1 530.9 L452.8 542.3 L453.6 556.2 L454.3 562.5 L455.1 556.5 L455.8 553.7 L456.6 546.6 L457.3 533.2 L458.1 524.2 L458.8 514.7 L459.6 508.4 L460.3 508.3 L461.1 496.8 L461.8 499.7 L462.6 494.5 L463.4 499.2 L464.1 501.7 L464.9 496.2 L465.6 504.6 L466.4 507.5 L467.1 505.3 L467.9 510.9 L468.6 513.6 L469.4 516.6 L470.1 531.8 L470.9 540.2 L471.6 550.9 L472.4 556.2 L473.1 559.1 L473.9 555.3 L474.6 548.8 L475.4 535.8 L476.1 525.4 L476.9 521.3 L477.6 510.9 L478.4 508.2 L479.2 501.4 L479.9 498.9 L480.7 493.8 L481.4 504.1 L482.2 501.9 L482.9 502.5 L483.7 506.5 L484.4 504.6 L485.2 508.2 L485.9 510.1 L486.7 519.7 L487.4 525.0 L488.2 534.0 L488.9 543.8 L489.7 554.4 L490.4 558.8 L491.2 560.1 L491.9 558.4 L492.7 546.8 L493.4 536.5 L494.2 522.6 L495.0 515.0 L495.7 506.5 L496.5 506.6 L497.2 502.1 L498.0 495.8 L498.7 493.5 L499.5 501.5 L500.2 503.6 L501.0 499.0 L501.7 501.8 L502.5 502.9 L503.2 503.8 L504.0 509.7 L504.7 508.0 L505.5 519.4 L506.2 530.6 L507.0 542.5 L507.7 556.4 L508.5 559.3 L509.2 557.0 L510.0 554.0 L510.8 546.8 L511.5 533.7 L512.3 526.0 L513.0 518.3 L513.8 510.8 L514.5 509.5 L515.3 503.8 L516.0 498.7 L516.8 492.5 L517.5 499.2 L518.3 497.8 L519.0 503.8 L519.8 504.9 L520.5 504.2 L521.3 505.9 L522.0 512.0 L522.8 514.0 L523.5 521.7 L524.3 530.2 L525.1 540.1 L525.8 551.0 L526.6 556.6 L527.3 553.2 L528.1 552.2 L528.8 544.9 L529.6 535.4 L530.3 525.0 L531.1 518.7 L531.8 509.8 L532.6 506.3 L533.3 505.1 L534.1 499.7 L534.8 495.9 L535.6 495.4 L536.3 499.4 L537.1 499.4 L537.8 503.7 L538.6 501.7 L539.3 510.0 L540.1 507.9 L540.9 518.8 L541.6 516.9 L542.4 528.7 L543.1 541.7 L543.9 549.2 L544.6 554.4 L545.4 559.7 L546.1 556.3 L546.9 548.8 L547.6 533.8 L548.4 525.6 L549.1 519.8 L549.9 510.7 L550.6 506.2 L551.4 499.8 L552.1 498.2 L552.9 500.9 L553.6 500.0 L554.4 499.7 L555.1 502.3 L555.9 501.2 L556.7 505.3 L557.4 507.0 L558.2 510.1 L558.9 515.0 L559.7 525.0 L560.4 529.5 L561.2 543.1 L561.9 553.7 L562.7 559.4 L563.4 554.7 L564.2 553.4 L564.9 542.6 L565.7 527.3 L566.4 515.8 L567.2 509.9 L567.9 498.2 L568.7 497.9 L569.4 491.6 L570.2 488.6 L570.9 487.1 L571.7 485.7 L572.5 491.7 L573.2 494.0 L574.0 489.8 L574.7 496.1 L575.5 497.8 L576.2 498.9 L577.0 507.3 L577.7 516.4 L578.5 526.6 L579.2 538.1 L580.0 548.2 L580.7 554.7 L581.5 553.7 L582.2 550.6 L583.0 545.4 L583.7 534.0 L584.5 520.0 L585.2 512.0 L586.0 507.7 L586.7 506.5 L587.5 496.6 L588.3 496.1 L589.0 492.2 L589.8 500.6 L590.5 497.5 L591.3 500.7 L592.0 503.6 L592.8 500.7 L593.5 502.7 L594.3 507.8 L595.0 512.9 L595.8 516.3 L596.5 528.2 L597.3 538.5 L598.0 547.9 L598.8 553.0 L599.5 564.3 L600.3 561.2 L601.0 551.2 L601.8 536.6 L602.5 527.6 L603.3 519.0 L604.1 510.8 L604.8 509.4 L605.6 497.0 L606.3 495.9 L607.1 490.6 L607.8 501.0 L608.6 498.9 L609.3 493.0 L610.1 504.7 L610.8 507.2 L611.6 504.8 L612.3 504.4 L613.1 513.3 L613.8 524.4 L614.6 533.8 L615.3 544.8 L616.1 557.1 L616.8 562.5 L617.6 560.9 L618.4 557.9 L619.1 548.1 L619.9 533.9 L620.6 523.4 L621.4 518.9 L622.1 505.8 L622.9 506.9 L623.6 491.4 L624.4 497.5 L625.1 496.5 L625.9 497.5 L626.6 493.1 L627.4 494.4 L628.1 497.0 L628.9 499.4 L629.6 504.8 L630.4 503.7 L631.1 513.8 L631.9 523.2 L632.6 531.2 L633.4 542.8 L634.2 556.6 L634.9 561.4 L635.7 556.4 L636.4 553.8 L637.2 546.5 L637.9 529.0 L638.7 523.0 L639.4 509.6 L640.2 500.8 L640.9 498.1 L641.7 491.4 L642.4 493.1 L643.2 486.1 L643.9 485.5 L644.7 491.0 L645.4 489.2 L646.2 493.5 L646.9 500.2 L647.7 498.9 L648.4 498.9 L649.2 510.4 L650.0 515.1 L650.7 527.2 L651.5 540.5 L652.2 551.4 L653.0 556.1 L653.7 564.9 L654.5 563.9 L655.2 552.6 L656.0 539.3 L656.7 527.3 L657.5 516.3 L658.2 509.9 L659.0 507.0 L659.7 499.4 L660.5 497.5 L661.2 492.8 L662.0 497.6 L662.7 503.5 L663.5 495.8 L664.2 501.2 L665.0 503.4 L665.8 507.4 L666.5 510.4 L667.3 516.6 L668.0 526.5 L668.8 535.7 L669.5 547.5 L670.3 560.6 L671.0 564.9 L671.8 561.1 L672.5 558.6 L673.3 549.6 L674.0 533.5 L674.8 528.6 L675.5 518.5 L676.3 510.6 L677.0 507.8 L677.8 499.6 L678.5 502.1 L679.3 499.2 L680.0 499.3 L680.8 504.3 L681.6 498.7 L682.3 507.8 L683.1 504.7 L683.8 505.6 L684.6 512.9 L685.3 517.3 L686.1 524.4 L686.8 532.3 L687.6 544.3 L688.3 557.3 L689.1 559.6 L689.8 554.7 L690.6 554.9 L691.3 547.0 L692.1 525.6 L692.8 517.2 L693.6 513.7 L694.3 498.9 L695.1 494.1 L695.8 497.6 L696.6 485.4 L697.4 483.8 L698.1 486.9 L698.9 490.3 L699.6 488.4 L700.4 494.9 L701.1 494.0 L701.9 497.7 L702.6 500.9 L703.4 505.3 L704.1 512.6 L704.9 525.3 L705.6 536.9 L706.4 547.9 L707.1 556.3 L707.9 556.6 L708.6 554.5 L709.4 546.1 L710.1 540.2 L710.9 527.9 L711.6 521.5 L712.4 514.3 L713.2 506.4 L713.9 506.5 L714.7 505.3 L715.4 501.5 L716.2 500.9 L716.9 505.2 L717.7 501.1 L718.4 511.3 L719.2 506.3 L719.9 509.8 L720.7 511.3 L721.4 515.4 L722.2 525.4 L722.9 533.7 L723.7 542.4 L724.4 552.7 L725.2 557.1 L725.9 558.7 L726.7 555.0 L727.5 550.4 L728.2 537.4 L729.0 524.4 L729.7 514.7 L730.5 510.8 L731.2 504.2 L732.0 502.1 L732.7 501.0 L733.5 501.2 L734.2 497.4 L735.0 494.7 L735.7 499.9 L736.5 505.8 L737.2 503.0 L738.0 510.2 L738.7 512.0 L739.5 512.7 L740.2 521.3 L741.0 531.3 L741.7 542.0 L742.5 553.0 L743.3 557.6 L744.0 566.3 L744.8 562.3 L745.5 555.0 L746.3 541.3 L747.0 526.8 L747.8 514.6 L748.5 509.3 L749.3 509.6 L750.0 490.3 L750.8 497.2 L751.5 492.0 L752.3 491.0 L753.0 493.3 L753.8 495.8 L754.5 503.0 L755.3 499.4 L756.0 506.0 L756.8 507.0 L757.5 512.0 L758.3 522.9 L759.1 538.2 L759.8 547.6 L760.6 559.1 L761.3 565.0 L762.1 554.4 L762.8 550.7 L763.6 541.5 L764.3 526.6 L765.1 515.5 L765.8 508.1 L766.6 501.5 L767.3 496.0 L768.1 489.3 L768.8 489.1 L769.6 486.5 L770.3 482.1 L771.1 488.4 L771.8 491.4 L772.6 490.9 L773.3 497.2 L774.1 499.4 L774.9 497.2 L775.6 505.8 L776.4 512.0 L777.1 524.2 L777.9 536.9 L778.6 547.0 L779.4 553.3 L780.1 558.0 L780.9 555.8 L781.6 548.5 L782.4 538.6 L783.1 525.8 L783.9 519.5 L784.6 511.7 L785.4 512.4 L786.1 504.3 L786.9 503.1 L787.6 501.2 L788.4 501.6 L789.1 502.9 L789.9 506.7 L790.7 507.3 L791.4 508.3 L792.2 508.4 L792.9 512.1 L793.7 514.3 L794.4 522.8 L795.2 533.7 L795.9 542.9 L796.7 554.7 L797.4 557.6 L798.2 556.5 L798.9 556.6 L799.7 547.0 L800.4 536.8 L801.2 527.8 L801.9 523.1 L802.7 516.0 L803.4 515.1 L804.2 508.7 L804.9 506.4 L805.7 504.1 L806.5 508.3 L807.2 503.8 L808.0 508.8 L808.7 508.7 L809.5 509.4 L810.2 513.4 L811.0 509.3 L811.7 519.8 L812.5 525.4 L813.2 536.0 L814.0 543.4 L814.7 554.3 L815.5 556.8 L816.2 558.6 L817.0 556.3 L817.7 546.1 L818.5 532.1 L819.2 522.5 L820.0 516.1 L820.8 511.0 L821.5 505.2 L822.3 495.7 L823.0 492.7 L823.8 494.9" stroke="#0099c6" stroke-width="1.5" fill="none" stroke-linejoin="round"/><path d="M101.4 487.6 L102.2 487.2 L102.9 488.0 L103.7 487.2 L104.4 488.9 L105.2 489.9 L106.0 493.2 L106.7 496.8 L107.5 495.6 L108.2 499.1 L109.0 503.8 L109.7 509.9 L110.5 515.6 L111.2 517.6 L112.0 520.0 L112.7 518.6 L113.5 514.3 L114.2 506.8 L115.0 499.0 L115.7 496.5 L116.5 492.2 L117.2 491.5 L118.0 488.6 L118.7 488.4 L119.5 486.7 L120.3 490.4 L121.0 489.3 L121.8 489.9 L122.5 488.5 L123.3 489.5 L124.0 490.1 L124.8 490.9 L125.5 496.5 L126.3 498.7 L127.0 503.9 L127.8 510.7 L128.5 515.8 L129.3 519.1 L130.0 516.9 L130.8 514.7 L131.5 510.7 L132.3 503.0 L133.0 497.4 L133.8 492.5 L134.5 491.6 L135.3 484.2 L136.1 482.0 L136.8 483.1 L137.6 482.4 L138.3 481.6 L139.1 481.4 L139.8 482.3 L140.6 484.1 L141.3 488.1 L142.1 488.3 L142.8 486.4 L143.6 491.2 L144.3 497.1 L145.1 502.4 L145.8 508.1 L146.6 513.7 L147.3 515.3 L148.1 515.9 L148.8 514.2 L149.6 511.0 L150.3 506.8 L151.1 501.3 L151.9 494.7 L152.6 495.2 L153.4 494.1 L154.1 488.5 L154.9 489.1 L155.6 488.0 L156.4 486.2 L157.1 491.7 L157.9 488.9 L158.6 492.4 L159.4 493.4 L160.1 493.7 L160.9 492.1 L161.6 496.5 L162.4 501.5 L163.1 505.4 L163.9 507.5 L164.6 512.9 L165.4 516.2 L166.1 517.2 L166.9 517.3 L167.7 513.3 L168.4 505.5 L169.2 498.2 L169.9 493.3 L170.7 489.8 L171.4 489.9 L172.2 487.1 L172.9 487.1 L173.7 483.5 L174.4 484.8 L175.2 484.4 L175.9 487.1 L176.7 487.7 L177.4 489.0 L178.2 490.7 L178.9 492.0 L179.7 495.1 L180.4 499.1 L181.2 503.4 L181.9 509.3 L182.7 516.2 L183.5 517.9 L184.2 519.2 L185.0 517.4 L185.7 514.1 L186.5 507.9 L187.2 502.9 L188.0 498.4 L188.7 494.3 L189.5 493.1 L190.2 491.0 L191.0 488.6 L191.7 487.9 L192.5 488.1 L193.2 490.6 L194.0 489.4 L194.7 492.6 L195.5 493.1 L196.2 492.9 L197.0 491.6 L197.7 496.1 L198.5 500.9 L199.3 506.6 L200.0 510.5 L200.8 515.8 L201.5 518.5 L202.3 517.1 L203.0 515.6 L203.8 511.0 L204.5 503.5 L205.3 497.6 L206.0 492.6 L206.8 490.9 L207.5 487.7 L208.3 482.3 L209.0 482.8 L209.8 479.0 L210.5 482.4 L211.3 481.8 L212.0 481.2 L212.8 485.1 L213.6 485.4 L214.3 482.5 L215.1 488.2 L215.8 491.8 L216.6 495.8 L217.3 501.7 L218.1 507.5 L218.8 513.3 L219.6 516.5 L220.3 517.7 L221.1 516.5 L221.8 512.6 L222.6 505.8 L223.3 499.1 L224.1 493.4 L224.8 490.1 L225.6 487.3 L226.3 483.9 L227.1 484.2 L227.8 479.2 L228.6 483.7 L229.4 484.7 L230.1 484.9 L230.9 484.4 L231.6 486.9 L232.4 489.1 L233.1 488.9 L233.9 491.5 L234.6 497.0 L235.4 503.3 L236.1 507.7 L236.9 514.0 L237.6 516.9 L238.4 520.6 L239.1 518.5 L239.9 513.0 L240.6 506.5 L241.4 496.4 L242.1 492.8 L242.9 488.7 L243.6 483.0 L244.4 482.3 L245.2 481.9 L245.9 479.2 L246.7 478.9 L247.4 479.4 L248.2 481.3 L248.9 484.5 L249.7 485.1 L250.4 486.9 L251.2 488.8 L251.9 491.3 L252.7 496.5 L253.4 503.2 L254.2 510.2 L254.9 517.2 L255.7 520.1 L256.4 519.4 L257.2 517.4 L257.9 514.0 L258.7 506.2 L259.4 500.2 L260.2 497.7 L261.0 491.2 L261.7 490.1 L262.5 490.3 L263.2 485.1 L264.0 483.0 L264.7 486.2 L265.5 483.3 L266.2 486.1 L267.0 489.6 L267.7 488.0 L268.5 490.6 L269.2 493.2 L270.0 497.4 L270.7 498.5 L271.5 505.6 L272.2 509.8 L273.0 516.1 L273.7 519.3 L274.5 516.8 L275.2 514.3 L276.0 509.5 L276.8 503.0 L277.5 497.9 L278.3 494.7 L279.0 490.1 L279.8 485.5 L280.5 484.0 L281.3 483.8 L282.0 483.7 L282.8 482.1 L283.5 484.5 L284.3 483.7 L285.0 484.3 L285.8 484.6 L286.5 487.3 L287.3 489.3 L288.0 491.9 L288.8 494.1 L289.5 501.9 L290.3 508.6 L291.0 512.7 L291.8 516.2 L292.6 517.1 L293.3 517.6 L294.1 512.8 L294.8 506.0 L295.6 499.1 L296.3 496.2 L297.1 493.5 L297.8 492.3 L298.6 486.9 L299.3 486.1 L300.1 484.7 L300.8 481.1 L301.6 484.0 L302.3 484.0 L303.1 488.1 L303.8 487.7 L304.6 489.8 L305.3 491.1 L306.1 493.3 L306.8 497.5 L307.6 504.0 L308.4 509.5 L309.1 516.5 L309.9 518.8 L310.6 518.8 L311.4 518.0 L312.1 513.8 L312.9 506.1 L313.6 501.4 L314.4 497.3 L315.1 491.5 L315.9 491.3 L316.6 485.9 L317.4 485.8 L318.1 483.9 L318.9 483.9 L319.6 489.6 L320.4 487.0 L321.1 490.4 L321.9 490.0 L322.7 490.8 L323.4 490.3 L324.2 495.3 L324.9 497.3 L325.7 505.5 L326.4 510.3 L327.2 516.1 L327.9 518.4 L328.7 518.0 L329.4 517.0 L330.2 512.3 L330.9 506.1 L331.7 497.3 L332.4 493.6 L333.2 489.9 L333.9 488.2 L334.7 486.4 L335.4 484.7 L336.2 481.4 L336.9 484.3 L337.7 485.1 L338.5 482.1 L339.2 484.0 L340.0 486.5 L340.7 487.6 L341.5 489.5 L342.2 491.4 L343.0 497.6 L343.7 503.3 L344.5 508.5 L345.2 514.2 L346.0 518.0 L346.7 518.4 L347.5 517.6 L348.2 513.6 L349.0 507.3 L349.7 501.0 L350.5 496.3 L351.2 494.6 L352.0 492.8 L352.7 489.8 L353.5 487.5 L354.3 485.6 L355.0 489.0 L355.8 487.3 L356.5 489.7 L357.3 488.9 L358.0 491.9 L358.8 493.3 L359.5 494.0 L360.3 496.2 L361.0 500.8 L361.8 505.2 L362.5 510.2 L363.3 515.8 L364.0 518.2 L364.8 518.0 L365.5 517.5 L366.3 512.6 L367.0 505.7 L367.8 501.7 L368.5 495.1 L369.3 492.7 L370.1 490.8 L370.8 487.5 L371.6 485.4 L372.3 483.5 L373.1 483.8 L373.8 486.3 L374.6 484.8 L375.3 486.9 L376.1 488.8 L376.8 489.6 L377.6 489.9 L378.3 493.7 L379.1 497.4 L379.8 504.1 L380.6 508.7 L381.3 514.2 L382.1 518.0 L382.8 522.6 L383.6 519.4 L384.3 515.3 L385.1 507.8 L385.9 501.9 L386.6 494.2 L387.4 488.7 L388.1 486.6 L388.9 484.9 L389.6 480.7 L390.4 481.1 L391.1 482.5 L391.9 482.4 L392.6 482.8 L393.4 485.1 L394.1 485.5 L394.9 490.5 L395.6 487.2 L396.4 493.8 L397.1 497.1 L397.9 505.7 L398.6 511.1 L399.4 518.4 L400.1 522.4 L400.9 515.1 L401.7 513.8 L402.4 510.6 L403.2 505.1 L403.9 498.2 L404.7 494.7 L405.4 489.9 L406.2 488.3 L406.9 483.2 L407.7 483.3 L408.4 483.2 L409.2 483.1 L409.9 488.3 L410.7 485.8 L411.4 487.4 L412.2 487.0 L412.9 487.7 L413.7 489.1 L414.4 491.4 L415.2 496.9 L416.0 501.6 L416.7 507.0 L417.5 512.5 L418.2 515.0 L419.0 518.2 L419.7 516.7 L420.5 512.4 L421.2 504.6 L422.0 499.6 L422.7 495.2 L423.5 488.4 L424.2 489.1 L425.0 486.2 L425.7 484.1 L426.5 485.7 L427.2 483.6 L428.0 484.4 L428.7 485.3 L429.5 486.3 L430.2 487.3 L431.0 488.1 L431.8 491.9 L432.5 493.7 L433.3 498.7 L434.0 503.0 L434.8 509.2 L435.5 515.9 L436.3 517.9 L437.0 520.4 L437.8 517.8 L438.5 513.0 L439.3 506.2 L440.0 497.3 L440.8 490.9 L441.5 486.9 L442.3 485.9 L443.0 480.5 L443.8 478.9 L444.5 475.8 L445.3 477.3 L446.0 479.0 L446.8 481.3 L447.6 481.8 L448.3 482.7 L449.1 484.8 L449.8 485.9 L450.6 491.8 L451.3 494.6 L452.1 502.6 L452.8 508.8 L453.6 516.4 L454.3 519.8 L455.1 516.5 L455.8 515.0 L456.6 511.2 L457.3 503.8 L458.1 498.9 L458.8 493.7 L459.6 490.3 L460.3 490.2 L461.1 484.0 L461.8 485.6 L462.6 482.7 L463.4 485.3 L464.1 486.6 L464.9 483.7 L465.6 488.2 L466.4 489.8 L467.1 488.6 L467.9 491.7 L468.6 493.1 L469.4 494.8 L470.1 503.1 L470.9 507.7 L471.6 513.5 L472.4 516.4 L473.1 517.9 L473.9 515.9 L474.6 512.3 L475.4 505.3 L476.1 499.6 L476.9 497.3 L477.6 491.7 L478.4 490.2 L479.2 486.5 L479.9 485.1 L480.7 482.4 L481.4 488.0 L482.2 486.8 L482.9 487.1 L483.7 489.3 L484.4 488.2 L485.2 490.2 L485.9 491.2 L486.7 496.5 L487.4 499.4 L488.2 504.3 L488.9 509.6 L489.7 515.4 L490.4 517.8 L491.2 518.5 L491.9 517.6 L492.7 511.3 L493.4 505.7 L494.2 498.1 L495.0 493.9 L495.7 489.3 L496.5 489.3 L497.2 486.9 L498.0 483.5 L498.7 482.2 L499.5 486.5 L500.2 487.7 L501.0 485.2 L501.7 486.7 L502.5 487.3 L503.2 487.8 L504.0 491.0 L504.7 490.1 L505.5 496.3 L506.2 502.4 L507.0 508.9 L507.7 516.5 L508.5 518.1 L509.2 516.8 L510.0 515.2 L510.8 511.2 L511.5 504.1 L512.3 499.9 L513.0 495.7 L513.8 491.6 L514.5 490.9 L515.3 487.8 L516.0 485.0 L516.8 481.7 L517.5 485.3 L518.3 484.5 L519.0 487.8 L519.8 488.4 L520.5 488.0 L521.3 489.0 L522.0 492.3 L522.8 493.3 L523.5 497.5 L524.3 502.2 L525.1 507.6 L525.8 513.5 L526.6 516.6 L527.3 514.8 L528.1 514.2 L528.8 510.2 L529.6 505.0 L530.3 499.4 L531.1 495.9 L531.8 491.1 L532.6 489.2 L533.3 488.5 L534.1 485.6 L534.8 483.5 L535.6 483.2 L536.3 485.4 L537.1 485.4 L537.8 487.8 L538.6 486.7 L539.3 491.2 L540.1 490.0 L540.9 496.0 L541.6 494.9 L542.4 501.4 L543.1 508.5 L543.9 512.6 L544.6 515.4 L545.4 518.3 L546.1 516.4 L546.9 512.4 L547.6 504.2 L548.4 499.7 L549.1 496.5 L549.9 491.6 L550.6 489.1 L551.4 485.6 L552.1 484.7 L552.9 486.2 L553.6 485.7 L554.4 485.6 L555.1 487.0 L555.9 486.4 L556.7 488.6 L557.4 489.6 L558.2 491.2 L558.9 493.9 L559.7 499.4 L560.4 501.8 L561.2 509.2 L561.9 515.0 L562.7 518.1 L563.4 515.6 L564.2 514.8 L564.9 509.0 L565.7 500.6 L566.4 494.3 L567.2 491.1 L567.9 484.7 L568.7 484.6 L569.4 481.1 L570.2 479.5 L570.9 478.7 L571.7 477.9 L572.5 481.2 L573.2 482.5 L574.0 480.2 L574.7 483.6 L575.5 484.6 L576.2 485.1 L577.0 489.7 L577.7 494.7 L578.5 500.2 L579.2 506.5 L580.0 512.0 L580.7 515.6 L581.5 515.0 L582.2 513.3 L583.0 510.5 L583.7 504.3 L584.5 496.6 L585.2 492.2 L586.0 489.9 L586.7 489.3 L587.5 483.9 L588.3 483.6 L589.0 481.4 L589.8 486.1 L590.5 484.4 L591.3 486.1 L592.0 487.7 L592.8 486.1 L593.5 487.2 L594.3 490.0 L595.0 492.7 L595.8 494.6 L596.5 501.1 L597.3 506.7 L598.0 511.9 L598.8 514.7 L599.5 520.8 L600.3 519.1 L601.0 513.7 L601.8 505.7 L602.5 500.8 L603.3 496.1 L604.1 491.6 L604.8 490.9 L605.6 484.1 L606.3 483.5 L607.1 480.6 L607.8 486.3 L608.6 485.1 L609.3 481.9 L610.1 488.3 L610.8 489.6 L611.6 488.4 L612.3 488.1 L613.1 493.0 L613.8 499.0 L614.6 504.2 L615.3 510.2 L616.1 516.9 L616.8 519.8 L617.6 518.9 L618.4 517.3 L619.1 512.0 L619.9 504.2 L620.6 498.5 L621.4 496.0 L622.1 488.9 L622.9 489.5 L623.6 481.0 L624.4 484.4 L625.1 483.8 L625.9 484.4 L626.6 482.0 L627.4 482.7 L628.1 484.1 L628.9 485.4 L629.6 488.3 L630.4 487.8 L631.1 493.3 L631.9 498.4 L632.6 502.7 L633.4 509.0 L634.2 516.6 L634.9 519.2 L635.7 516.5 L636.4 515.1 L637.2 511.1 L637.9 501.6 L638.7 498.2 L639.4 491.0 L640.2 486.2 L640.9 484.7 L641.7 481.0 L642.4 482.0 L643.2 478.2 L643.9 477.8 L644.7 480.8 L645.4 479.8 L646.2 482.2 L646.9 485.8 L647.7 485.1 L648.4 485.1 L649.2 491.4 L650.0 494.0 L650.7 500.6 L651.5 507.8 L652.2 513.8 L653.0 516.3 L653.7 521.1 L654.5 520.6 L655.2 514.4 L656.0 507.1 L656.7 500.6 L657.5 494.6 L658.2 491.1 L659.0 489.6 L659.7 485.4 L660.5 484.3 L661.2 481.8 L662.0 484.4 L662.7 487.6 L663.5 483.4 L664.2 486.4 L665.0 487.6 L665.8 489.7 L666.5 491.4 L667.3 494.8 L668.0 500.2 L668.8 505.2 L669.5 511.6 L670.3 518.8 L671.0 521.1 L671.8 519.1 L672.5 517.7 L673.3 512.8 L674.0 504.0 L674.8 501.3 L675.5 495.8 L676.3 491.5 L677.0 490.0 L677.8 485.5 L678.5 486.9 L679.3 485.3 L680.0 485.3 L680.8 488.1 L681.6 485.0 L682.3 490.0 L683.1 488.3 L683.8 488.8 L684.6 492.8 L685.3 495.2 L686.1 499.0 L686.8 503.3 L687.6 509.9 L688.3 517.0 L689.1 518.2 L689.8 515.5 L690.6 515.7 L691.3 511.4 L692.1 499.7 L692.8 495.1 L693.6 493.2 L694.3 485.1 L695.1 482.5 L695.8 484.4 L696.6 477.8 L697.4 476.9 L698.1 478.6 L698.9 480.4 L699.6 479.4 L700.4 483.0 L701.1 482.4 L701.9 484.5 L702.6 486.2 L703.4 488.6 L704.1 492.6 L704.9 499.6 L705.6 505.9 L706.4 511.9 L707.1 516.5 L707.9 516.6 L708.6 515.5 L709.4 510.9 L710.1 507.6 L710.9 501.0 L711.6 497.5 L712.4 493.5 L713.2 489.2 L713.9 489.3 L714.7 488.6 L715.4 486.6 L716.2 486.2 L716.9 488.6 L717.7 486.3 L718.4 491.9 L719.2 489.1 L719.9 491.1 L720.7 491.9 L721.4 494.1 L722.2 499.6 L722.9 504.1 L723.7 508.8 L724.4 514.5 L725.2 516.9 L725.9 517.8 L726.7 515.7 L727.5 513.2 L728.2 506.1 L729.0 499.1 L729.7 493.8 L730.5 491.6 L731.2 488.0 L732.0 486.9 L732.7 486.3 L733.5 486.4 L734.2 484.3 L735.0 482.8 L735.7 485.7 L736.5 488.9 L737.2 487.4 L738.0 491.3 L738.7 492.3 L739.5 492.7 L740.2 497.3 L741.0 502.8 L741.7 508.6 L742.5 514.6 L743.3 517.2 L744.0 521.9 L744.8 519.7 L745.5 515.7 L746.3 508.3 L747.0 500.3 L747.8 493.7 L748.5 490.8 L749.3 491.0 L750.0 480.4 L750.8 484.2 L751.5 481.4 L752.3 480.8 L753.0 482.1 L753.8 483.5 L754.5 487.4 L755.3 485.4 L756.0 489.0 L756.8 489.5 L757.5 492.3 L758.3 498.2 L759.1 506.6 L759.8 511.7 L760.6 517.9 L761.3 521.2 L762.1 515.4 L762.8 513.4 L763.6 508.4 L764.3 500.2 L765.1 494.2 L765.8 490.2 L766.6 486.5 L767.3 483.6 L768.1 479.9 L768.8 479.8 L769.6 478.4 L770.3 476.0 L771.1 479.4 L771.8 481.0 L772.6 480.8 L773.3 484.2 L774.1 485.4 L774.9 484.2 L775.6 488.9 L776.4 492.3 L777.1 498.9 L777.9 505.8 L778.6 511.4 L779.4 514.8 L780.1 517.4 L780.9 516.2 L781.6 512.2 L782.4 506.8 L783.1 499.8 L783.9 496.4 L784.6 492.1 L785.4 492.5 L786.1 488.1 L786.9 487.4 L787.6 486.4 L788.4 486.6 L789.1 487.3 L789.9 489.4 L790.7 489.7 L791.4 490.3 L792.2 490.3 L792.9 492.3 L793.7 493.5 L794.4 498.1 L795.2 504.1 L795.9 509.1 L796.7 515.6 L797.4 517.1 L798.2 516.5 L798.9 516.6 L799.7 511.4 L800.4 505.8 L801.2 500.9 L801.9 498.3 L802.7 494.5 L803.4 494.0 L804.2 490.4 L804.9 489.2 L805.7 487.9 L806.5 490.3 L807.2 487.8 L808.0 490.5 L808.7 490.5 L809.5 490.8 L810.2 493.0 L811.0 490.8 L811.7 496.6 L812.5 499.6 L813.2 505.4 L814.0 509.4 L814.7 515.4 L815.5 516.7 L816.2 517.7 L817.0 516.4 L817.7 510.9 L818.5 503.2 L819.2 498.0 L820.0 494.5 L820.8 491.7 L821.5 488.5 L822.3 483.4 L823.0 481.8 L823.8 482.9" stroke="#dd4477" stroke-width="1.5" fill="none" stroke-linejoin="round"/><path d="M101.4 531.6 L102.2 531.4 L102.9 531.7 L103.7 531.4 L104.4 532.1 L105.2 532.6 L106.0 534.0 L106.7 535.6 L107.5 535.1 L108.2 536.6 L109.0 538.8 L109.7 541.4 L110.5 544.0 L111.2 544.9 L112.0 545.9 L112.7 545.3 L113.5 543.4 L114.2 540.1 L115.0 536.6 L115.7 535.5 L116.5 533.6 L117.2 533.3 L118.0 532.0 L118.7 531.9 L119.5 531.2 L120.3 532.8 L121.0 532.3 L121.8 532.6 L122.5 531.9 L123.3 532.4 L124.0 532.7 L124.8 533.0 L125.5 535.5 L126.3 536.5 L127.0 538.8 L127.8 541.8 L128.5 544.1 L129.3 545.6 L130.0 544.6 L130.8 543.6 L131.5 541.8 L132.3 538.4 L133.0 535.9 L133.8 533.7 L134.5 533.3 L135.3 530.0 L136.1 529.1 L136.8 529.5 L137.6 529.2 L138.3 528.9 L139.1 528.8 L139.8 529.2 L140.6 530.0 L141.3 531.8 L142.1 531.8 L142.8 531.0 L143.6 533.1 L144.3 535.8 L145.1 538.1 L145.8 540.7 L146.6 543.1 L147.3 543.9 L148.1 544.1 L148.8 543.4 L149.6 542.0 L150.3 540.1 L151.1 537.6 L151.9 534.7 L152.6 534.9 L153.4 534.5 L154.1 532.0 L154.9 532.2 L155.6 531.7 L156.4 530.9 L157.1 533.4 L157.9 532.1 L158.6 533.7 L159.4 534.1 L160.1 534.2 L160.9 533.6 L161.6 535.5 L162.4 537.7 L163.1 539.4 L163.9 540.4 L164.6 542.8 L165.4 544.3 L166.1 544.7 L166.9 544.7 L167.7 542.9 L168.4 539.5 L169.2 536.3 L169.9 534.1 L170.7 532.5 L171.4 532.6 L172.2 531.3 L172.9 531.3 L173.7 529.7 L174.4 530.3 L175.2 530.1 L175.9 531.3 L176.7 531.6 L177.4 532.1 L178.2 532.9 L178.9 533.5 L179.7 534.9 L180.4 536.6 L181.2 538.6 L181.9 541.2 L182.7 544.2 L183.5 545.0 L184.2 545.6 L185.0 544.8 L185.7 543.3 L186.5 540.6 L187.2 538.3 L188.0 536.3 L188.7 534.5 L189.5 534.0 L190.2 533.0 L191.0 532.0 L191.7 531.7 L192.5 531.8 L193.2 532.9 L194.0 532.3 L194.7 533.8 L195.5 534.0 L196.2 533.9 L197.0 533.3 L197.7 535.3 L198.5 537.4 L199.3 540.0 L200.0 541.7 L200.8 544.1 L201.5 545.3 L202.3 544.7 L203.0 544.0 L203.8 541.9 L204.5 538.6 L205.3 536.0 L206.0 533.8 L206.8 533.0 L207.5 531.6 L208.3 529.2 L209.0 529.4 L209.8 527.7 L210.5 529.2 L211.3 529.0 L212.0 528.7 L212.8 530.4 L213.6 530.6 L214.3 529.3 L215.1 531.8 L215.8 533.4 L216.6 535.2 L217.3 537.8 L218.1 540.4 L218.8 543.0 L219.6 544.4 L220.3 544.9 L221.1 544.4 L221.8 542.6 L222.6 539.6 L223.3 536.6 L224.1 534.1 L224.8 532.6 L225.6 531.4 L226.3 529.9 L227.1 530.0 L227.8 527.8 L228.6 529.8 L229.4 530.2 L230.1 530.3 L230.9 530.1 L231.6 531.3 L232.4 532.2 L233.1 532.1 L233.9 533.3 L234.6 535.7 L235.4 538.5 L236.1 540.5 L236.9 543.3 L237.6 544.6 L238.4 546.2 L239.1 545.3 L239.9 542.8 L240.6 540.0 L241.4 535.5 L242.1 533.9 L242.9 532.0 L243.6 529.5 L244.4 529.2 L245.2 529.0 L245.9 527.8 L246.7 527.7 L247.4 527.9 L248.2 528.8 L248.9 530.2 L249.7 530.5 L250.4 531.2 L251.2 532.1 L251.9 533.2 L252.7 535.5 L253.4 538.5 L254.2 541.6 L254.9 544.7 L255.7 546.0 L256.4 545.7 L257.2 544.8 L257.9 543.3 L258.7 539.8 L259.4 537.2 L260.2 536.0 L261.0 533.2 L261.7 532.7 L262.5 532.8 L263.2 530.4 L264.0 529.5 L264.7 530.9 L265.5 529.6 L266.2 530.9 L267.0 532.4 L267.7 531.7 L268.5 532.9 L269.2 534.1 L270.0 535.9 L270.7 536.4 L271.5 539.5 L272.2 541.4 L273.0 544.2 L273.7 545.6 L274.5 544.5 L275.2 543.4 L276.0 541.3 L276.8 538.4 L277.5 536.1 L278.3 534.7 L279.0 532.6 L279.8 530.6 L280.5 530.0 L281.3 529.8 L282.0 529.8 L282.8 529.1 L283.5 530.2 L284.3 529.8 L285.0 530.1 L285.8 530.2 L286.5 531.4 L287.3 532.3 L288.0 533.5 L288.8 534.4 L289.5 537.9 L290.3 540.9 L291.0 542.7 L291.8 544.3 L292.6 544.7 L293.3 544.9 L294.1 542.7 L294.8 539.7 L295.6 536.7 L296.3 535.4 L297.1 534.2 L297.8 533.6 L298.6 531.2 L299.3 530.9 L300.1 530.3 L300.8 528.7 L301.6 529.9 L302.3 530.0 L303.1 531.8 L303.8 531.6 L304.6 532.5 L305.3 533.1 L306.1 534.1 L306.8 535.9 L307.6 538.8 L308.4 541.3 L309.1 544.4 L309.9 545.4 L310.6 545.4 L311.4 545.0 L312.1 543.2 L312.9 539.8 L313.6 537.7 L314.4 535.9 L315.1 533.3 L315.9 533.2 L316.6 530.8 L317.4 530.8 L318.1 529.9 L318.9 529.9 L319.6 532.4 L320.4 531.3 L321.1 532.8 L321.9 532.6 L322.7 533.0 L323.4 532.8 L324.2 534.9 L324.9 535.8 L325.7 539.5 L326.4 541.6 L327.2 544.2 L327.9 545.2 L328.7 545.1 L329.4 544.6 L330.2 542.5 L330.9 539.8 L331.7 535.8 L332.4 534.2 L333.2 532.6 L333.9 531.8 L334.7 531.0 L335.4 530.3 L336.2 528.8 L336.9 530.1 L337.7 530.4 L338.5 529.1 L339.2 529.9 L340.0 531.1 L340.7 531.6 L341.5 532.4 L342.2 533.2 L343.0 536.0 L343.7 538.5 L344.5 540.8 L345.2 543.4 L346.0 545.0 L346.7 545.2 L347.5 544.9 L348.2 543.1 L349.0 540.3 L349.7 537.5 L350.5 535.4 L351.2 534.7 L352.0 533.9 L352.7 532.5 L353.5 531.5 L354.3 530.6 L355.0 532.2 L355.8 531.4 L356.5 532.5 L357.3 532.1 L358.0 533.5 L358.8 534.1 L359.5 534.4 L360.3 535.4 L361.0 537.4 L361.8 539.4 L362.5 541.6 L363.3 544.1 L364.0 545.2 L364.8 545.1 L365.5 544.9 L366.3 542.7 L367.0 539.6 L367.8 537.8 L368.5 534.9 L369.3 533.8 L370.1 533.0 L370.8 531.5 L371.6 530.6 L372.3 529.7 L373.1 529.9 L373.8 531.0 L374.6 530.3 L375.3 531.2 L376.1 532.1 L376.8 532.5 L377.6 532.6 L378.3 534.3 L379.1 535.9 L379.8 538.9 L380.6 540.9 L381.3 543.4 L382.1 545.1 L382.8 547.1 L383.6 545.7 L384.3 543.8 L385.1 540.5 L385.9 537.9 L386.6 534.5 L387.4 532.0 L388.1 531.1 L388.9 530.3 L389.6 528.5 L390.4 528.7 L391.1 529.3 L391.9 529.3 L392.6 529.4 L393.4 530.4 L394.1 530.6 L394.9 532.9 L395.6 531.4 L396.4 534.3 L397.1 535.8 L397.9 539.6 L398.6 542.0 L399.4 545.2 L400.1 547.0 L400.9 543.8 L401.7 543.2 L402.4 541.7 L403.2 539.3 L403.9 536.2 L404.7 534.7 L405.4 532.6 L406.2 531.9 L406.9 529.6 L407.7 529.6 L408.4 529.6 L409.2 529.5 L409.9 531.8 L410.7 530.8 L411.4 531.5 L412.2 531.3 L412.9 531.6 L413.7 532.2 L414.4 533.2 L415.2 535.7 L416.0 537.8 L416.7 540.2 L417.5 542.6 L418.2 543.7 L419.0 545.1 L419.7 544.5 L420.5 542.6 L421.2 539.1 L422.0 536.9 L422.7 534.9 L423.5 531.9 L424.2 532.2 L425.0 530.9 L425.7 530.0 L426.5 530.7 L427.2 529.8 L428.0 530.1 L428.7 530.5 L429.5 531.0 L430.2 531.4 L431.0 531.8 L431.8 533.4 L432.5 534.3 L433.3 536.5 L434.0 538.4 L434.8 541.2 L435.5 544.1 L436.3 545.0 L437.0 546.1 L437.8 545.0 L438.5 542.8 L439.3 539.8 L440.0 535.9 L440.8 533.0 L441.5 531.2 L442.3 530.8 L443.0 528.4 L443.8 527.7 L444.5 526.3 L445.3 526.9 L446.0 527.7 L446.8 528.7 L447.6 529.0 L448.3 529.4 L449.1 530.3 L449.8 530.8 L450.6 533.4 L451.3 534.6 L452.1 538.2 L452.8 541.0 L453.6 544.3 L454.3 545.9 L455.1 544.4 L455.8 543.7 L456.6 542.0 L457.3 538.8 L458.1 536.6 L458.8 534.3 L459.6 532.8 L460.3 532.7 L461.1 529.9 L461.8 530.6 L462.6 529.4 L463.4 530.5 L464.1 531.1 L464.9 529.8 L465.6 531.8 L466.4 532.5 L467.1 532.0 L467.9 533.3 L468.6 534.0 L469.4 534.7 L470.1 538.4 L470.9 540.5 L471.6 543.0 L472.4 544.3 L473.1 545.0 L473.9 544.1 L474.6 542.5 L475.4 539.4 L476.1 536.9 L476.9 535.9 L477.6 533.4 L478.4 532.7 L479.2 531.1 L479.9 530.4 L480.7 529.2 L481.4 531.7 L482.2 531.2 L482.9 531.3 L483.7 532.3 L484.4 531.8 L485.2 532.7 L485.9 533.2 L486.7 535.5 L487.4 536.8 L488.2 538.9 L488.9 541.3 L489.7 543.9 L490.4 545.0 L491.2 545.3 L491.9 544.9 L492.7 542.1 L493.4 539.6 L494.2 536.2 L495.0 534.3 L495.7 532.3 L496.5 532.3 L497.2 531.2 L498.0 529.7 L498.7 529.1 L499.5 531.1 L500.2 531.6 L501.0 530.5 L501.7 531.2 L502.5 531.4 L503.2 531.6 L504.0 533.1 L504.7 532.6 L505.5 535.4 L506.2 538.1 L507.0 541.0 L507.7 544.4 L508.5 545.1 L509.2 544.5 L510.0 543.8 L510.8 542.1 L511.5 538.9 L512.3 537.0 L513.0 535.1 L513.8 533.3 L514.5 533.0 L515.3 531.6 L516.0 530.4 L516.8 528.9 L517.5 530.5 L518.3 530.2 L519.0 531.6 L519.8 531.9 L520.5 531.7 L521.3 532.2 L522.0 533.6 L522.8 534.1 L523.5 536.0 L524.3 538.0 L525.1 540.4 L525.8 543.1 L526.6 544.4 L527.3 543.6 L528.1 543.4 L528.8 541.6 L529.6 539.3 L530.3 536.8 L531.1 535.2 L531.8 533.1 L532.6 532.2 L533.3 531.9 L534.1 530.6 L534.8 529.7 L535.6 529.6 L536.3 530.6 L537.1 530.6 L537.8 531.6 L538.6 531.1 L539.3 533.1 L540.1 532.6 L540.9 535.3 L541.6 534.8 L542.4 537.7 L543.1 540.8 L543.9 542.6 L544.6 543.9 L545.4 545.2 L546.1 544.4 L546.9 542.6 L547.6 538.9 L548.4 536.9 L549.1 535.5 L549.9 533.3 L550.6 532.2 L551.4 530.7 L552.1 530.3 L552.9 530.9 L553.6 530.7 L554.4 530.6 L555.1 531.3 L555.9 531.0 L556.7 532.0 L557.4 532.4 L558.2 533.2 L558.9 534.4 L559.7 536.8 L560.4 537.9 L561.2 541.2 L561.9 543.7 L562.7 545.1 L563.4 544.0 L564.2 543.7 L564.9 541.0 L565.7 537.3 L566.4 534.5 L567.2 533.1 L567.9 530.3 L568.7 530.2 L569.4 528.7 L570.2 528.0 L570.9 527.6 L571.7 527.2 L572.5 528.7 L573.2 529.3 L574.0 528.2 L574.7 529.8 L575.5 530.2 L576.2 530.5 L577.0 532.5 L577.7 534.7 L578.5 537.2 L579.2 540.0 L580.0 542.4 L580.7 544.0 L581.5 543.7 L582.2 543.0 L583.0 541.7 L583.7 539.0 L584.5 535.6 L585.2 533.6 L586.0 532.6 L586.7 532.3 L587.5 529.9 L588.3 529.8 L589.0 528.8 L589.8 530.9 L590.5 530.1 L591.3 530.9 L592.0 531.6 L592.8 530.9 L593.5 531.4 L594.3 532.6 L595.0 533.8 L595.8 534.7 L596.5 537.6 L597.3 540.0 L598.0 542.3 L598.8 543.6 L599.5 546.3 L600.3 545.5 L601.0 543.1 L601.8 539.6 L602.5 537.4 L603.3 535.3 L604.1 533.3 L604.8 533.0 L605.6 530.0 L606.3 529.7 L607.1 528.4 L607.8 531.0 L608.6 530.4 L609.3 529.0 L610.1 531.8 L610.8 532.4 L611.6 531.9 L612.3 531.8 L613.1 533.9 L613.8 536.6 L614.6 538.9 L615.3 541.6 L616.1 544.6 L616.8 545.9 L617.6 545.5 L618.4 544.8 L619.1 542.4 L619.9 538.9 L620.6 536.4 L621.4 535.3 L622.1 532.1 L622.9 532.4 L623.6 528.6 L624.4 530.1 L625.1 529.9 L625.9 530.1 L626.6 529.0 L627.4 529.3 L628.1 530.0 L628.9 530.6 L629.6 531.9 L630.4 531.6 L631.1 534.1 L631.9 536.3 L632.6 538.3 L633.4 541.1 L634.2 544.4 L634.9 545.6 L635.7 544.4 L636.4 543.7 L637.2 542.0 L637.9 537.8 L638.7 536.3 L639.4 533.0 L640.2 530.9 L640.9 530.3 L641.7 528.6 L642.4 529.0 L643.2 527.4 L643.9 527.2 L644.7 528.5 L645.4 528.1 L646.2 529.1 L646.9 530.8 L647.7 530.4 L648.4 530.4 L649.2 533.2 L650.0 534.4 L650.7 537.3 L651.5 540.5 L652.2 543.2 L653.0 544.3 L653.7 546.4 L654.5 546.2 L655.2 543.5 L656.0 540.2 L656.7 537.3 L657.5 534.7 L658.2 533.1 L659.0 532.4 L659.7 530.6 L660.5 530.1 L661.2 529.0 L662.0 530.1 L662.7 531.6 L663.5 529.7 L664.2 531.0 L665.0 531.5 L665.8 532.5 L666.5 533.2 L667.3 534.7 L668.0 537.1 L668.8 539.4 L669.5 542.2 L670.3 545.4 L671.0 546.4 L671.8 545.5 L672.5 544.9 L673.3 542.7 L674.0 538.8 L674.8 537.6 L675.5 535.2 L676.3 533.3 L677.0 532.6 L677.8 530.6 L678.5 531.2 L679.3 530.5 L680.0 530.5 L680.8 531.8 L681.6 530.4 L682.3 532.6 L683.1 531.8 L683.8 532.1 L684.6 533.8 L685.3 534.9 L686.1 536.6 L686.8 538.5 L687.6 541.5 L688.3 544.6 L689.1 545.2 L689.8 544.0 L690.6 544.0 L691.3 542.1 L692.1 536.9 L692.8 534.9 L693.6 534.0 L694.3 530.4 L695.1 529.3 L695.8 530.1 L696.6 527.2 L697.4 526.8 L698.1 527.5 L698.9 528.4 L699.6 527.9 L700.4 529.5 L701.1 529.3 L701.9 530.2 L702.6 530.9 L703.4 532.0 L704.1 533.8 L704.9 536.9 L705.6 539.7 L706.4 542.3 L707.1 544.4 L707.9 544.4 L708.6 543.9 L709.4 541.9 L710.1 540.5 L710.9 537.5 L711.6 535.9 L712.4 534.2 L713.2 532.3 L713.9 532.3 L714.7 532.0 L715.4 531.1 L716.2 530.9 L716.9 532.0 L717.7 531.0 L718.4 533.4 L719.2 532.2 L719.9 533.1 L720.7 533.4 L721.4 534.4 L722.2 536.9 L722.9 538.9 L723.7 541.0 L724.4 543.5 L725.2 544.5 L725.9 545.0 L726.7 544.1 L727.5 542.9 L728.2 539.8 L729.0 536.6 L729.7 534.3 L730.5 533.3 L731.2 531.7 L732.0 531.2 L732.7 531.0 L733.5 531.0 L734.2 530.1 L735.0 529.4 L735.7 530.7 L736.5 532.1 L737.2 531.4 L738.0 533.2 L738.7 533.6 L739.5 533.8 L740.2 535.9 L741.0 538.3 L741.7 540.9 L742.5 543.6 L743.3 544.7 L744.0 546.8 L744.8 545.8 L745.5 544.0 L746.3 540.7 L747.0 537.2 L747.8 534.3 L748.5 533.0 L749.3 533.0 L750.0 528.4 L750.8 530.0 L751.5 528.8 L752.3 528.5 L753.0 529.1 L753.8 529.7 L754.5 531.4 L755.3 530.6 L756.0 532.2 L756.8 532.4 L757.5 533.6 L758.3 536.3 L759.1 540.0 L759.8 542.2 L760.6 545.0 L761.3 546.5 L762.1 543.9 L762.8 543.0 L763.6 540.8 L764.3 537.2 L765.1 534.5 L765.8 532.7 L766.6 531.1 L767.3 529.7 L768.1 528.1 L768.8 528.1 L769.6 527.4 L770.3 526.4 L771.1 527.9 L771.8 528.6 L772.6 528.5 L773.3 530.0 L774.1 530.6 L774.9 530.0 L775.6 532.1 L776.4 533.6 L777.1 536.6 L777.9 539.6 L778.6 542.1 L779.4 543.6 L780.1 544.8 L780.9 544.2 L781.6 542.5 L782.4 540.1 L783.1 537.0 L783.9 535.4 L784.6 533.6 L785.4 533.7 L786.1 531.7 L786.9 531.5 L787.6 531.0 L788.4 531.1 L789.1 531.4 L789.9 532.3 L790.7 532.5 L791.4 532.7 L792.2 532.7 L792.9 533.7 L793.7 534.2 L794.4 536.2 L795.2 538.9 L795.9 541.1 L796.7 544.0 L797.4 544.7 L798.2 544.4 L798.9 544.4 L799.7 542.1 L800.4 539.6 L801.2 537.5 L801.9 536.3 L802.7 534.6 L803.4 534.4 L804.2 532.8 L804.9 532.3 L805.7 531.7 L806.5 532.7 L807.2 531.6 L808.0 532.8 L808.7 532.8 L809.5 533.0 L810.2 534.0 L811.0 533.0 L811.7 535.5 L812.5 536.9 L813.2 539.4 L814.0 541.2 L814.7 543.9 L815.5 544.5 L816.2 544.9 L817.0 544.4 L817.7 541.9 L818.5 538.5 L819.2 536.2 L820.0 534.6 L820.8 533.4 L821.5 532.0 L822.3 529.7 L823.0 529.0 L823.8 529.5" stroke="#66aa00" stroke-width="1.5" fill="none" stroke-linejoin="round"/><path d="M101.4 548.7 L102.2 548.4 L102.9 548.9 L103.7 548.4 L104.4 549.6 L105.2 550.3 L106.0 552.6 L106.7 555.1 L107.5 554.2 L108.2 556.7 L109.0 560.0 L109.7 564.2 L110.5 568.1 L111.2 569.5 L112.0 571.2 L112.7 570.2 L113.5 567.3 L114.2 562.0 L115.0 556.6 L115.7 554.9 L116.5 551.9 L117.2 551.4 L118.0 549.4 L118.7 549.2 L119.5 548.1 L120.3 550.6 L121.0 549.9 L121.8 550.3 L122.5 549.3 L123.3 550.0 L124.0 550.5 L124.8 551.0 L125.5 554.8 L126.3 556.4 L127.0 560.0 L127.8 564.8 L128.5 568.3 L129.3 570.6 L130.0 569.0 L130.8 567.5 L131.5 564.7 L132.3 559.4 L133.0 555.5 L133.8 552.1 L134.5 551.5 L135.3 546.3 L136.1 544.8 L136.8 545.6 L137.6 545.1 L138.3 544.5 L139.1 544.4 L139.8 545.0 L140.6 546.2 L141.3 549.0 L142.1 549.2 L142.8 547.9 L143.6 551.2 L144.3 555.3 L145.1 559.0 L145.8 562.9 L146.6 566.8 L147.3 568.0 L148.1 568.4 L148.8 567.2 L149.6 565.0 L150.3 562.0 L151.1 558.2 L151.9 553.6 L152.6 554.0 L153.4 553.2 L154.1 549.4 L154.9 549.7 L155.6 549.0 L156.4 547.8 L157.1 551.5 L157.9 549.6 L158.6 552.0 L159.4 552.7 L160.1 552.9 L160.9 551.8 L161.6 554.9 L162.4 558.3 L163.1 561.0 L163.9 562.5 L164.6 566.2 L165.4 568.6 L166.1 569.2 L166.9 569.3 L167.7 566.5 L168.4 561.1 L169.2 556.1 L169.9 552.6 L170.7 550.3 L171.4 550.3 L172.2 548.3 L172.9 548.3 L173.7 545.9 L174.4 546.8 L175.2 546.5 L175.9 548.4 L176.7 548.8 L177.4 549.6 L178.2 550.9 L178.9 551.8 L179.7 553.9 L180.4 556.7 L181.2 559.7 L181.9 563.7 L182.7 568.5 L183.5 569.8 L184.2 570.6 L185.0 569.4 L185.7 567.1 L186.5 562.8 L187.2 559.3 L188.0 556.2 L188.7 553.4 L189.5 552.5 L190.2 551.0 L191.0 549.4 L191.7 548.9 L192.5 549.1 L193.2 550.8 L194.0 549.9 L194.7 552.2 L195.5 552.5 L196.2 552.4 L197.0 551.5 L197.7 554.6 L198.5 557.9 L199.3 561.9 L200.0 564.6 L200.8 568.3 L201.5 570.2 L202.3 569.2 L203.0 568.1 L203.8 564.9 L204.5 559.7 L205.3 555.6 L206.0 552.2 L206.8 551.0 L207.5 548.8 L208.3 545.0 L209.0 545.4 L209.8 542.7 L210.5 545.0 L211.3 544.7 L212.0 544.3 L212.8 547.0 L213.6 547.2 L214.3 545.2 L215.1 549.1 L215.8 551.6 L216.6 554.4 L217.3 558.5 L218.1 562.5 L218.8 566.6 L219.6 568.8 L220.3 569.6 L221.1 568.7 L221.8 566.0 L222.6 561.4 L223.3 556.7 L224.1 552.7 L224.8 550.4 L225.6 548.5 L226.3 546.2 L227.1 546.3 L227.8 542.9 L228.6 546.0 L229.4 546.7 L230.1 546.8 L230.9 546.4 L231.6 548.2 L232.4 549.8 L233.1 549.6 L233.9 551.4 L234.6 555.2 L235.4 559.6 L236.1 562.6 L236.9 567.0 L237.6 569.0 L238.4 571.6 L239.1 570.2 L239.9 566.3 L240.6 561.8 L241.4 554.8 L242.1 552.3 L242.9 549.4 L243.6 545.5 L244.4 545.0 L245.2 544.8 L245.9 542.9 L246.7 542.6 L247.4 543.0 L248.2 544.3 L248.9 546.5 L249.7 547.0 L250.4 548.2 L251.2 549.5 L251.9 551.3 L252.7 554.9 L253.4 559.5 L254.2 564.4 L254.9 569.2 L255.7 571.2 L256.4 570.8 L257.2 569.4 L257.9 567.0 L258.7 561.6 L259.4 557.5 L260.2 555.7 L261.0 551.2 L261.7 550.4 L262.5 550.6 L263.2 546.9 L264.0 545.5 L264.7 547.7 L265.5 545.7 L266.2 547.6 L267.0 550.1 L267.7 548.9 L268.5 550.8 L269.2 552.6 L270.0 555.5 L270.7 556.3 L271.5 561.2 L272.2 564.1 L273.0 568.5 L273.7 570.7 L274.5 569.0 L275.2 567.3 L276.0 563.9 L276.8 559.4 L277.5 555.9 L278.3 553.6 L279.0 550.4 L279.8 547.2 L280.5 546.2 L281.3 546.0 L282.0 546.0 L282.8 544.9 L283.5 546.5 L284.3 546.0 L285.0 546.4 L285.8 546.6 L286.5 548.5 L287.3 549.9 L288.0 551.7 L288.8 553.2 L289.5 558.6 L290.3 563.3 L291.0 566.1 L291.8 568.6 L292.6 569.2 L293.3 569.5 L294.1 566.2 L294.8 561.4 L295.6 556.7 L296.3 554.7 L297.1 552.8 L297.8 551.9 L298.6 548.2 L299.3 547.6 L300.1 546.7 L300.8 544.2 L301.6 546.2 L302.3 546.2 L303.1 549.0 L303.8 548.8 L304.6 550.2 L305.3 551.1 L306.1 552.6 L306.8 555.5 L307.6 560.1 L308.4 563.9 L309.1 568.7 L309.9 570.3 L310.6 570.4 L311.4 569.8 L312.1 566.9 L312.9 561.6 L313.6 558.3 L314.4 555.4 L315.1 551.4 L315.9 551.3 L316.6 547.5 L317.4 547.5 L318.1 546.1 L318.9 546.1 L319.6 550.1 L320.4 548.3 L321.1 550.6 L321.9 550.3 L322.7 550.9 L323.4 550.6 L324.2 554.0 L324.9 555.4 L325.7 561.1 L326.4 564.5 L327.2 568.5 L327.9 570.1 L328.7 569.8 L329.4 569.1 L330.2 565.8 L330.9 561.5 L331.7 555.4 L332.4 552.9 L333.2 550.3 L333.9 549.1 L334.7 547.8 L335.4 546.7 L336.2 544.4 L336.9 546.4 L337.7 546.9 L338.5 544.9 L339.2 546.2 L340.0 548.0 L340.7 548.7 L341.5 550.0 L342.2 551.3 L343.0 555.7 L343.7 559.6 L344.5 563.2 L345.2 567.2 L346.0 569.8 L346.7 570.1 L347.5 569.5 L348.2 566.7 L349.0 562.3 L349.7 558.0 L350.5 554.7 L351.2 553.6 L352.0 552.3 L352.7 550.2 L353.5 548.6 L354.3 547.3 L355.0 549.6 L355.8 548.5 L356.5 550.2 L357.3 549.6 L358.0 551.7 L358.8 552.6 L359.5 553.1 L360.3 554.7 L361.0 557.9 L361.8 560.9 L362.5 564.4 L363.3 568.3 L364.0 570.0 L364.8 569.8 L365.5 569.5 L366.3 566.1 L367.0 561.3 L367.8 558.5 L368.5 553.9 L369.3 552.2 L370.1 550.9 L370.8 548.6 L371.6 547.1 L372.3 545.9 L373.1 546.1 L373.8 547.8 L374.6 546.8 L375.3 548.2 L376.1 549.5 L376.8 550.1 L377.6 550.3 L378.3 553.0 L379.1 555.5 L379.8 560.2 L380.6 563.3 L381.3 567.2 L382.1 569.8 L382.8 573.0 L383.6 570.8 L384.3 567.9 L385.1 562.8 L385.9 558.6 L386.6 553.3 L387.4 549.4 L388.1 548.0 L388.9 546.8 L389.6 543.9 L390.4 544.2 L391.1 545.1 L391.9 545.1 L392.6 545.4 L393.4 546.9 L394.1 547.2 L394.9 550.7 L395.6 548.4 L396.4 553.0 L397.1 555.3 L397.9 561.3 L398.6 565.0 L399.4 570.1 L400.1 572.8 L400.9 567.8 L401.7 566.9 L402.4 564.6 L403.2 560.8 L403.9 556.0 L404.7 553.6 L405.4 550.3 L406.2 549.2 L406.9 545.7 L407.7 545.7 L408.4 545.7 L409.2 545.6 L409.9 549.2 L410.7 547.5 L411.4 548.6 L412.2 548.3 L412.9 548.8 L413.7 549.7 L414.4 551.3 L415.2 555.2 L416.0 558.4 L416.7 562.2 L417.5 566.0 L418.2 567.7 L419.0 570.0 L419.7 568.9 L420.5 565.9 L421.2 560.5 L422.0 557.0 L422.7 554.0 L423.5 549.3 L424.2 549.7 L425.0 547.7 L425.7 546.3 L426.5 547.4 L427.2 545.9 L428.0 546.5 L428.7 547.1 L429.5 547.8 L430.2 548.5 L431.0 549.0 L431.8 551.6 L432.5 553.0 L433.3 556.4 L434.0 559.4 L434.8 563.7 L435.5 568.4 L436.3 569.7 L437.0 571.4 L437.8 569.7 L438.5 566.3 L439.3 561.6 L440.0 555.4 L440.8 551.0 L441.5 548.2 L442.3 547.5 L443.0 543.8 L443.8 542.7 L444.5 540.5 L445.3 541.5 L446.0 542.7 L446.8 544.3 L447.6 544.7 L448.3 545.3 L449.1 546.7 L449.8 547.5 L450.6 551.6 L451.3 553.5 L452.1 559.1 L452.8 563.4 L453.6 568.7 L454.3 571.1 L455.1 568.8 L455.8 567.7 L456.6 565.1 L457.3 560.0 L458.1 556.6 L458.8 552.9 L459.6 550.6 L460.3 550.5 L461.1 546.2 L461.8 547.3 L462.6 545.3 L463.4 547.1 L464.1 548.0 L464.9 546.0 L465.6 549.1 L466.4 550.2 L467.1 549.4 L467.9 551.5 L468.6 552.5 L469.4 553.7 L470.1 559.4 L470.9 562.6 L471.6 566.7 L472.4 568.7 L473.1 569.8 L473.9 568.3 L474.6 565.9 L475.4 561.0 L476.1 557.0 L476.9 555.4 L477.6 551.5 L478.4 550.5 L479.2 547.9 L479.9 547.0 L480.7 545.1 L481.4 549.0 L482.2 548.1 L482.9 548.4 L483.7 549.8 L484.4 549.1 L485.2 550.5 L485.9 551.2 L486.7 554.9 L487.4 556.9 L488.2 560.3 L488.9 564.0 L489.7 568.0 L490.4 569.7 L491.2 570.2 L491.9 569.5 L492.7 565.1 L493.4 561.2 L494.2 556.0 L495.0 553.1 L495.7 549.9 L496.5 549.9 L497.2 548.2 L498.0 545.8 L498.7 544.9 L499.5 548.0 L500.2 548.7 L501.0 547.0 L501.7 548.1 L502.5 548.5 L503.2 548.8 L504.0 551.1 L504.7 550.4 L505.5 554.7 L506.2 559.0 L507.0 563.5 L507.7 568.8 L508.5 569.9 L509.2 569.0 L510.0 567.8 L510.8 565.1 L511.5 560.2 L512.3 557.2 L513.0 554.3 L513.8 551.5 L514.5 551.0 L515.3 548.8 L516.0 546.9 L516.8 544.6 L517.5 547.1 L518.3 546.6 L519.0 548.8 L519.8 549.2 L520.5 549.0 L521.3 549.6 L522.0 552.0 L522.8 552.7 L523.5 555.6 L524.3 558.8 L525.1 562.6 L525.8 566.7 L526.6 568.8 L527.3 567.6 L528.1 567.2 L528.8 564.4 L529.6 560.8 L530.3 556.9 L531.1 554.5 L531.8 551.1 L532.6 549.8 L533.3 549.3 L534.1 547.3 L534.8 545.9 L535.6 545.7 L536.3 547.2 L537.1 547.2 L537.8 548.8 L538.6 548.0 L539.3 551.2 L540.1 550.4 L540.9 554.5 L541.6 553.8 L542.4 558.3 L543.1 563.2 L543.9 566.0 L544.6 568.0 L545.4 570.0 L546.1 568.7 L546.9 565.9 L547.6 560.2 L548.4 557.1 L549.1 554.9 L549.9 551.4 L550.6 549.8 L551.4 547.3 L552.1 546.7 L552.9 547.7 L553.6 547.4 L554.4 547.3 L555.1 548.3 L555.9 547.9 L556.7 549.4 L557.4 550.1 L558.2 551.2 L558.9 553.1 L559.7 556.9 L560.4 558.6 L561.2 563.7 L561.9 567.7 L562.7 569.9 L563.4 568.1 L564.2 567.6 L564.9 563.5 L565.7 557.7 L566.4 553.4 L567.2 551.1 L567.9 546.7 L568.7 546.6 L569.4 544.2 L570.2 543.1 L570.9 542.5 L571.7 542.0 L572.5 544.2 L573.2 545.1 L574.0 543.5 L574.7 545.9 L575.5 546.6 L576.2 547.0 L577.0 550.2 L577.7 553.6 L578.5 557.5 L579.2 561.8 L580.0 565.7 L580.7 568.1 L581.5 567.7 L582.2 566.5 L583.0 564.6 L583.7 560.3 L584.5 555.0 L585.2 551.9 L586.0 550.3 L586.7 549.9 L587.5 546.1 L588.3 545.9 L589.0 544.4 L589.8 547.6 L590.5 546.4 L591.3 547.7 L592.0 548.8 L592.8 547.7 L593.5 548.4 L594.3 550.4 L595.0 552.3 L595.8 553.6 L596.5 558.1 L597.3 562.0 L598.0 565.6 L598.8 567.5 L599.5 571.8 L600.3 570.6 L601.0 566.8 L601.8 561.3 L602.5 557.9 L603.3 554.6 L604.1 551.5 L604.8 551.0 L605.6 546.2 L606.3 545.8 L607.1 543.8 L607.8 547.8 L608.6 547.0 L609.3 544.7 L610.1 549.2 L610.8 550.1 L611.6 549.2 L612.3 549.1 L613.1 552.4 L613.8 556.6 L614.6 560.2 L615.3 564.4 L616.1 569.0 L616.8 571.1 L617.6 570.4 L618.4 569.3 L619.1 565.6 L619.9 560.2 L620.6 556.3 L621.4 554.6 L622.1 549.6 L622.9 550.0 L623.6 544.1 L624.4 546.5 L625.1 546.1 L625.9 546.4 L626.6 544.8 L627.4 545.3 L628.1 546.2 L628.9 547.2 L629.6 549.2 L630.4 548.8 L631.1 552.6 L631.9 556.2 L632.6 559.2 L633.4 563.6 L634.2 568.8 L634.9 570.7 L635.7 568.7 L636.4 567.8 L637.2 565.0 L637.9 558.4 L638.7 556.1 L639.4 551.0 L640.2 547.7 L640.9 546.7 L641.7 544.1 L642.4 544.8 L643.2 542.1 L643.9 541.9 L644.7 544.0 L645.4 543.3 L646.2 544.9 L646.9 547.5 L647.7 547.0 L648.4 547.0 L649.2 551.3 L650.0 553.1 L650.7 557.7 L651.5 562.7 L652.2 566.9 L653.0 568.7 L653.7 572.0 L654.5 571.6 L655.2 567.3 L656.0 562.3 L656.7 557.7 L657.5 553.6 L658.2 551.2 L659.0 550.1 L659.7 547.2 L660.5 546.4 L661.2 544.7 L662.0 546.5 L662.7 548.7 L663.5 545.8 L664.2 547.9 L665.0 548.7 L665.8 550.2 L666.5 551.3 L667.3 553.7 L668.0 557.4 L668.8 560.9 L669.5 565.4 L670.3 570.3 L671.0 572.0 L671.8 570.5 L672.5 569.6 L673.3 566.2 L674.0 560.1 L674.8 558.2 L675.5 554.4 L676.3 551.4 L677.0 550.4 L677.8 547.3 L678.5 548.2 L679.3 547.1 L680.0 547.1 L680.8 549.0 L681.6 546.9 L682.3 550.3 L683.1 549.2 L683.8 549.5 L684.6 552.3 L685.3 553.9 L686.1 556.6 L686.8 559.6 L687.6 564.2 L688.3 569.1 L689.1 570.0 L689.8 568.1 L690.6 568.2 L691.3 565.2 L692.1 557.1 L692.8 553.9 L693.6 552.6 L694.3 547.0 L695.1 545.2 L695.8 546.5 L696.6 541.9 L697.4 541.3 L698.1 542.4 L698.9 543.7 L699.6 543.0 L700.4 545.5 L701.1 545.1 L701.9 546.5 L702.6 547.7 L703.4 549.4 L704.1 552.1 L704.9 557.0 L705.6 561.4 L706.4 565.5 L707.1 568.7 L707.9 568.8 L708.6 568.0 L709.4 564.9 L710.1 562.6 L710.9 558.0 L711.6 555.5 L712.4 552.8 L713.2 549.8 L713.9 549.9 L714.7 549.4 L715.4 548.0 L716.2 547.7 L716.9 549.4 L717.7 547.8 L718.4 551.7 L719.2 549.8 L719.9 551.1 L720.7 551.7 L721.4 553.2 L722.2 557.0 L722.9 560.2 L723.7 563.4 L724.4 567.4 L725.2 569.0 L725.9 569.6 L726.7 568.2 L727.5 566.5 L728.2 561.6 L729.0 556.7 L729.7 553.0 L730.5 551.5 L731.2 549.0 L732.0 548.2 L732.7 547.8 L733.5 547.8 L734.2 546.4 L735.0 545.4 L735.7 547.4 L736.5 549.6 L737.2 548.5 L738.0 551.3 L738.7 551.9 L739.5 552.2 L740.2 555.5 L741.0 559.2 L741.7 563.3 L742.5 567.5 L743.3 569.2 L744.0 572.5 L744.8 571.0 L745.5 568.2 L746.3 563.0 L747.0 557.5 L747.8 552.9 L748.5 550.9 L749.3 551.0 L750.0 543.7 L750.8 546.3 L751.5 544.4 L752.3 544.0 L753.0 544.9 L753.8 545.8 L754.5 548.5 L755.3 547.2 L756.0 549.7 L756.8 550.0 L757.5 551.9 L758.3 556.1 L759.1 561.9 L759.8 565.4 L760.6 569.8 L761.3 572.0 L762.1 568.0 L762.8 566.6 L763.6 563.1 L764.3 557.5 L765.1 553.3 L765.8 550.5 L766.6 548.0 L767.3 545.9 L768.1 543.3 L768.8 543.3 L769.6 542.3 L770.3 540.6 L771.1 543.0 L771.8 544.1 L772.6 544.0 L773.3 546.3 L774.1 547.2 L774.9 546.4 L775.6 549.6 L776.4 551.9 L777.1 556.6 L777.9 561.4 L778.6 565.2 L779.4 567.6 L780.1 569.4 L780.9 568.5 L781.6 565.8 L782.4 562.0 L783.1 557.2 L783.9 554.8 L784.6 551.8 L785.4 552.1 L786.1 549.0 L786.9 548.6 L787.6 547.8 L788.4 548.0 L789.1 548.5 L789.9 549.9 L790.7 550.2 L791.4 550.6 L792.2 550.6 L792.9 552.0 L793.7 552.8 L794.4 556.0 L795.2 560.2 L795.9 563.6 L796.7 568.1 L797.4 569.2 L798.2 568.8 L798.9 568.8 L799.7 565.2 L800.4 561.4 L801.2 557.9 L801.9 556.1 L802.7 553.5 L803.4 553.1 L804.2 550.7 L804.9 549.8 L805.7 548.9 L806.5 550.5 L807.2 548.8 L808.0 550.7 L808.7 550.7 L809.5 550.9 L810.2 552.5 L811.0 550.9 L811.7 554.9 L812.5 557.0 L813.2 561.0 L814.0 563.8 L814.7 568.0 L815.5 568.9 L816.2 569.6 L817.0 568.7 L817.7 564.9 L818.5 559.6 L819.2 555.9 L820.0 553.5 L820.8 551.5 L821.5 549.3 L822.3 545.8 L823.0 544.6 L823.8 545.5" stroke="#b82e2e" stroke-width="1.5" fill="none" stroke-linejoin="round"/><path d="M101.4 624.4 L102.2 624.1 L102.9 624.6 L103.7 624.1 L104.4 625.2 L105.2 625.8 L106.0 627.9 L106.7 630.1 L107.5 629.4 L108.2 631.5 L109.0 634.5 L109.7 638.3 L110.5 641.9 L111.2 643.1 L112.0 644.6 L112.7 643.7 L113.5 641.1 L114.2 636.4 L115.0 631.5 L115.7 629.9 L116.5 627.2 L117.2 626.8 L118.0 625.0 L118.7 624.9 L119.5 623.8 L120.3 626.1 L121.0 625.4 L121.8 625.8 L122.5 624.9 L123.3 625.5 L124.0 626.0 L124.8 626.5 L125.5 629.9 L126.3 631.3 L127.0 634.6 L127.8 638.8 L128.5 642.0 L129.3 644.1 L130.0 642.7 L130.8 641.3 L131.5 638.8 L132.3 634.0 L133.0 630.5 L133.8 627.4 L134.5 626.9 L135.3 622.3 L136.1 620.9 L136.8 621.6 L137.6 621.1 L138.3 620.6 L139.1 620.5 L139.8 621.1 L140.6 622.2 L141.3 624.7 L142.1 624.8 L142.8 623.6 L143.6 626.6 L144.3 630.3 L145.1 633.6 L145.8 637.2 L146.6 640.7 L147.3 641.7 L148.1 642.1 L148.8 641.0 L149.6 639.0 L150.3 636.4 L151.1 632.9 L151.9 628.8 L152.6 629.1 L153.4 628.5 L154.1 625.0 L154.9 625.3 L155.6 624.7 L156.4 623.5 L157.1 626.9 L157.9 625.2 L158.6 627.4 L159.4 628.0 L160.1 628.2 L160.9 627.2 L161.6 629.9 L162.4 633.1 L163.1 635.5 L163.9 636.8 L164.6 640.2 L165.4 642.3 L166.1 642.9 L166.9 642.9 L167.7 640.4 L168.4 635.6 L169.2 631.0 L169.9 627.9 L170.7 625.8 L171.4 625.8 L172.2 624.1 L172.9 624.1 L173.7 621.8 L174.4 622.7 L175.2 622.4 L175.9 624.1 L176.7 624.4 L177.4 625.2 L178.2 626.3 L178.9 627.1 L179.7 629.0 L180.4 631.6 L181.2 634.3 L181.9 637.9 L182.7 642.2 L183.5 643.3 L184.2 644.1 L185.0 643.0 L185.7 641.0 L186.5 637.1 L187.2 633.9 L188.0 631.1 L188.7 628.6 L189.5 627.8 L190.2 626.5 L191.0 625.0 L191.7 624.6 L192.5 624.7 L193.2 626.3 L194.0 625.5 L194.7 627.5 L195.5 627.8 L196.2 627.7 L197.0 626.9 L197.7 629.7 L198.5 632.7 L199.3 636.2 L200.0 638.7 L200.8 642.0 L201.5 643.7 L202.3 642.8 L203.0 641.9 L203.8 639.0 L204.5 634.3 L205.3 630.6 L206.0 627.5 L206.8 626.4 L207.5 624.5 L208.3 621.0 L209.0 621.4 L209.8 619.0 L210.5 621.1 L211.3 620.7 L212.0 620.4 L212.8 622.8 L213.6 623.0 L214.3 621.2 L215.1 624.8 L215.8 627.0 L216.6 629.5 L217.3 633.2 L218.1 636.8 L218.8 640.5 L219.6 642.4 L220.3 643.2 L221.1 642.4 L221.8 640.0 L222.6 635.8 L223.3 631.6 L224.1 628.0 L224.8 625.9 L225.6 624.2 L226.3 622.1 L227.1 622.2 L227.8 619.1 L228.6 622.0 L229.4 622.6 L230.1 622.7 L230.9 622.4 L231.6 624.0 L232.4 625.3 L233.1 625.2 L233.9 626.8 L234.6 630.2 L235.4 634.2 L236.1 636.9 L236.9 640.9 L237.6 642.7 L238.4 645.0 L239.1 643.7 L239.9 640.3 L240.6 636.2 L241.4 629.9 L242.1 627.6 L242.9 625.0 L243.6 621.5 L244.4 621.0 L245.2 620.8 L245.9 619.1 L246.7 618.9 L247.4 619.3 L248.2 620.5 L248.9 622.4 L249.7 622.8 L250.4 623.9 L251.2 625.1 L251.9 626.7 L252.7 630.0 L253.4 634.1 L254.2 638.5 L254.9 642.9 L255.7 644.7 L256.4 644.3 L257.2 643.0 L257.9 640.9 L258.7 636.0 L259.4 632.3 L260.2 630.7 L261.0 626.7 L261.7 625.9 L262.5 626.1 L263.2 622.8 L264.0 621.5 L264.7 623.5 L265.5 621.7 L266.2 623.4 L267.0 625.6 L267.7 624.6 L268.5 626.3 L269.2 627.9 L270.0 630.5 L270.7 631.2 L271.5 635.6 L272.2 638.2 L273.0 642.2 L273.7 644.2 L274.5 642.6 L275.2 641.1 L276.0 638.1 L276.8 634.0 L277.5 630.8 L278.3 628.8 L279.0 625.9 L279.8 623.0 L280.5 622.1 L281.3 622.0 L282.0 622.0 L282.8 621.0 L283.5 622.4 L284.3 621.9 L285.0 622.3 L285.8 622.5 L286.5 624.2 L287.3 625.4 L288.0 627.1 L288.8 628.5 L289.5 633.3 L290.3 637.5 L291.0 640.1 L291.8 642.3 L292.6 642.8 L293.3 643.1 L294.1 640.1 L294.8 635.8 L295.6 631.6 L296.3 629.7 L297.1 628.0 L297.8 627.3 L298.6 623.9 L299.3 623.4 L300.1 622.6 L300.8 620.3 L301.6 622.1 L302.3 622.2 L303.1 624.7 L303.8 624.4 L304.6 625.7 L305.3 626.6 L306.1 627.9 L306.8 630.5 L307.6 634.6 L308.4 638.1 L309.1 642.4 L309.9 643.9 L310.6 643.9 L311.4 643.4 L312.1 640.8 L312.9 636.0 L313.6 633.0 L314.4 630.4 L315.1 626.8 L315.9 626.7 L316.6 623.3 L317.4 623.3 L318.1 622.1 L318.9 622.1 L319.6 625.6 L320.4 624.0 L321.1 626.1 L321.9 625.8 L322.7 626.4 L323.4 626.1 L324.2 629.2 L324.9 630.4 L325.7 635.6 L326.4 638.6 L327.2 642.2 L327.9 643.6 L328.7 643.4 L329.4 642.8 L330.2 639.8 L330.9 635.9 L331.7 630.4 L332.4 628.1 L333.2 625.8 L333.9 624.7 L334.7 623.6 L335.4 622.6 L336.2 620.5 L336.9 622.3 L337.7 622.8 L338.5 621.0 L339.2 622.1 L340.0 623.7 L340.7 624.4 L341.5 625.6 L342.2 626.7 L343.0 630.6 L343.7 634.2 L344.5 637.4 L345.2 641.0 L346.0 643.4 L346.7 643.6 L347.5 643.1 L348.2 640.6 L349.0 636.7 L349.7 632.7 L350.5 629.8 L351.2 628.8 L352.0 627.6 L352.7 625.8 L353.5 624.3 L354.3 623.1 L355.0 625.2 L355.8 624.2 L356.5 625.7 L357.3 625.2 L358.0 627.1 L358.8 627.9 L359.5 628.4 L360.3 629.7 L361.0 632.6 L361.8 635.4 L362.5 638.5 L363.3 642.0 L364.0 643.5 L364.8 643.4 L365.5 643.1 L366.3 640.0 L367.0 635.7 L367.8 633.2 L368.5 629.1 L369.3 627.5 L370.1 626.4 L370.8 624.3 L371.6 623.0 L372.3 621.8 L373.1 622.0 L373.8 623.6 L374.6 622.6 L375.3 624.0 L376.1 625.1 L376.8 625.7 L377.6 625.8 L378.3 628.2 L379.1 630.5 L379.8 634.7 L380.6 637.6 L381.3 641.0 L382.1 643.4 L382.8 646.2 L383.6 644.3 L384.3 641.7 L385.1 637.0 L385.9 633.3 L386.6 628.5 L387.4 625.0 L388.1 623.7 L388.9 622.7 L389.6 620.0 L390.4 620.3 L391.1 621.2 L391.9 621.2 L392.6 621.4 L393.4 622.8 L394.1 623.0 L394.9 626.2 L395.6 624.1 L396.4 628.3 L397.1 630.3 L397.9 635.7 L398.6 639.1 L399.4 643.6 L400.1 646.1 L400.9 641.6 L401.7 640.7 L402.4 638.7 L403.2 635.3 L403.9 631.0 L404.7 628.8 L405.4 625.8 L406.2 624.8 L406.9 621.6 L407.7 621.7 L408.4 621.6 L409.2 621.6 L409.9 624.8 L410.7 623.3 L411.4 624.3 L412.2 624.0 L412.9 624.4 L413.7 625.3 L414.4 626.7 L415.2 630.2 L416.0 633.2 L416.7 636.5 L417.5 640.0 L418.2 641.5 L419.0 643.5 L419.7 642.6 L420.5 639.9 L421.2 635.0 L422.0 631.9 L422.7 629.1 L423.5 624.9 L424.2 625.3 L425.0 623.5 L425.7 622.2 L426.5 623.2 L427.2 621.9 L428.0 622.4 L428.7 623.0 L429.5 623.5 L430.2 624.2 L431.0 624.7 L431.8 627.0 L432.5 628.2 L433.3 631.3 L434.0 634.0 L434.8 637.9 L435.5 642.1 L436.3 643.3 L437.0 644.8 L437.8 643.3 L438.5 640.3 L439.3 636.0 L440.0 630.4 L440.8 626.4 L441.5 623.9 L442.3 623.3 L443.0 619.9 L443.8 619.0 L444.5 617.0 L445.3 617.9 L446.0 619.0 L446.8 620.4 L447.6 620.8 L448.3 621.3 L449.1 622.6 L449.8 623.3 L450.6 627.0 L451.3 628.7 L452.1 633.7 L452.8 637.6 L453.6 642.4 L454.3 644.5 L455.1 642.5 L455.8 641.5 L456.6 639.1 L457.3 634.5 L458.1 631.5 L458.8 628.2 L459.6 626.1 L460.3 626.0 L461.1 622.1 L461.8 623.1 L462.6 621.3 L463.4 622.9 L464.1 623.8 L464.9 621.9 L465.6 624.8 L466.4 625.8 L467.1 625.0 L467.9 626.9 L468.6 627.8 L469.4 628.9 L470.1 634.0 L470.9 636.9 L471.6 640.6 L472.4 642.4 L473.1 643.3 L473.9 642.1 L474.6 639.8 L475.4 635.4 L476.1 631.9 L476.9 630.4 L477.6 626.9 L478.4 626.0 L479.2 623.7 L479.9 622.8 L480.7 621.1 L481.4 624.6 L482.2 623.8 L482.9 624.1 L483.7 625.4 L484.4 624.8 L485.2 626.0 L485.9 626.6 L486.7 629.9 L487.4 631.7 L488.2 634.8 L488.9 638.2 L489.7 641.8 L490.4 643.2 L491.2 643.7 L491.9 643.1 L492.7 639.2 L493.4 635.7 L494.2 630.9 L495.0 628.3 L495.7 625.4 L496.5 625.5 L497.2 623.9 L498.0 621.8 L498.7 621.0 L499.5 623.7 L500.2 624.4 L501.0 622.9 L501.7 623.8 L502.5 624.2 L503.2 624.5 L504.0 626.5 L504.7 625.9 L505.5 629.8 L506.2 633.7 L507.0 637.7 L507.7 642.4 L508.5 643.4 L509.2 642.6 L510.0 641.6 L510.8 639.1 L511.5 634.7 L512.3 632.1 L513.0 629.4 L513.8 626.9 L514.5 626.4 L515.3 624.5 L516.0 622.8 L516.8 620.7 L517.5 622.9 L518.3 622.5 L519.0 624.5 L519.8 624.9 L520.5 624.6 L521.3 625.2 L522.0 627.3 L522.8 628.0 L523.5 630.6 L524.3 633.5 L525.1 636.9 L525.8 640.6 L526.6 642.5 L527.3 641.4 L528.1 641.0 L528.8 638.5 L529.6 635.3 L530.3 631.7 L531.1 629.6 L531.8 626.6 L532.6 625.4 L533.3 624.9 L534.1 623.1 L534.8 621.8 L535.6 621.6 L536.3 623.0 L537.1 623.0 L537.8 624.5 L538.6 623.8 L539.3 626.6 L540.1 625.9 L540.9 629.6 L541.6 629.0 L542.4 633.0 L543.1 637.4 L543.9 640.0 L544.6 641.8 L545.4 643.5 L546.1 642.4 L546.9 639.9 L547.6 634.7 L548.4 631.9 L549.1 629.9 L549.9 626.8 L550.6 625.3 L551.4 623.1 L552.1 622.6 L552.9 623.5 L553.6 623.2 L554.4 623.1 L555.1 624.0 L555.9 623.6 L556.7 625.0 L557.4 625.6 L558.2 626.7 L558.9 628.3 L559.7 631.7 L560.4 633.3 L561.2 637.9 L561.9 641.5 L562.7 643.5 L563.4 641.9 L564.2 641.4 L564.9 637.7 L565.7 632.5 L566.4 628.6 L567.2 626.6 L567.9 622.6 L568.7 622.5 L569.4 620.3 L570.2 619.3 L570.9 618.8 L571.7 618.3 L572.5 620.4 L573.2 621.2 L574.0 619.7 L574.7 621.9 L575.5 622.5 L576.2 622.8 L577.0 625.7 L577.7 628.8 L578.5 632.3 L579.2 636.2 L580.0 639.6 L580.7 641.8 L581.5 641.5 L582.2 640.4 L583.0 638.7 L583.7 634.8 L584.5 630.0 L585.2 627.3 L586.0 625.8 L586.7 625.4 L587.5 622.0 L588.3 621.9 L589.0 620.5 L589.8 623.4 L590.5 622.3 L591.3 623.4 L592.0 624.4 L592.8 623.4 L593.5 624.1 L594.3 625.9 L595.0 627.6 L595.8 628.8 L596.5 632.8 L597.3 636.3 L598.0 639.5 L598.8 641.3 L599.5 645.1 L600.3 644.1 L601.0 640.7 L601.8 635.7 L602.5 632.6 L603.3 629.7 L604.1 626.9 L604.8 626.4 L605.6 622.2 L606.3 621.8 L607.1 620.0 L607.8 623.5 L608.6 622.8 L609.3 620.8 L610.1 624.8 L610.8 625.6 L611.6 624.8 L612.3 624.7 L613.1 627.7 L613.8 631.5 L614.6 634.7 L615.3 638.5 L616.1 642.7 L616.8 644.5 L617.6 644.0 L618.4 642.9 L619.1 639.6 L619.9 634.8 L620.6 631.2 L621.4 629.6 L622.1 625.2 L622.9 625.6 L623.6 620.3 L624.4 622.4 L625.1 622.0 L625.9 622.3 L626.6 620.9 L627.4 621.3 L628.1 622.2 L628.9 623.0 L629.6 624.8 L630.4 624.5 L631.1 627.9 L631.9 631.1 L632.6 633.8 L633.4 637.8 L634.2 642.5 L634.9 644.1 L635.7 642.4 L636.4 641.5 L637.2 639.0 L637.9 633.1 L638.7 631.0 L639.4 626.5 L640.2 623.5 L640.9 622.6 L641.7 620.3 L642.4 620.9 L643.2 618.5 L643.9 618.3 L644.7 620.1 L645.4 619.5 L646.2 621.0 L646.9 623.3 L647.7 622.8 L648.4 622.8 L649.2 626.8 L650.0 628.4 L650.7 632.5 L651.5 637.0 L652.2 640.7 L653.0 642.3 L653.7 645.3 L654.5 645.0 L655.2 641.1 L656.0 636.6 L656.7 632.5 L657.5 628.8 L658.2 626.6 L659.0 625.6 L659.7 623.0 L660.5 622.3 L661.2 620.7 L662.0 622.4 L662.7 624.4 L663.5 621.8 L664.2 623.6 L665.0 624.4 L665.8 625.7 L666.5 626.7 L667.3 628.9 L668.0 632.3 L668.8 635.4 L669.5 639.4 L670.3 643.9 L671.0 645.3 L671.8 644.0 L672.5 643.2 L673.3 640.1 L674.0 634.6 L674.8 632.9 L675.5 629.5 L676.3 626.8 L677.0 625.9 L677.8 623.1 L678.5 623.9 L679.3 622.9 L680.0 623.0 L680.8 624.7 L681.6 622.8 L682.3 625.9 L683.1 624.8 L683.8 625.1 L684.6 627.6 L685.3 629.1 L686.1 631.5 L686.8 634.2 L687.6 638.3 L688.3 642.7 L689.1 643.5 L689.8 641.8 L690.6 641.9 L691.3 639.2 L692.1 631.9 L692.8 629.1 L693.6 627.9 L694.3 622.8 L695.1 621.2 L695.8 622.4 L696.6 618.2 L697.4 617.7 L698.1 618.7 L698.9 619.9 L699.6 619.3 L700.4 621.5 L701.1 621.2 L701.9 622.4 L702.6 623.5 L703.4 625.0 L704.1 627.5 L704.9 631.8 L705.6 635.8 L706.4 639.5 L707.1 642.4 L707.9 642.5 L708.6 641.8 L709.4 638.9 L710.1 636.9 L710.9 632.7 L711.6 630.5 L712.4 628.1 L713.2 625.4 L713.9 625.4 L714.7 625.0 L715.4 623.7 L716.2 623.5 L716.9 625.0 L717.7 623.6 L718.4 627.0 L719.2 625.3 L719.9 626.5 L720.7 627.0 L721.4 628.5 L722.2 631.9 L722.9 634.7 L723.7 637.6 L724.4 641.2 L725.2 642.7 L725.9 643.2 L726.7 642.0 L727.5 640.4 L728.2 636.0 L729.0 631.5 L729.7 628.2 L730.5 626.9 L731.2 624.6 L732.0 623.9 L732.7 623.5 L733.5 623.6 L734.2 622.3 L735.0 621.4 L735.7 623.2 L736.5 625.2 L737.2 624.2 L738.0 626.7 L738.7 627.3 L739.5 627.5 L740.2 630.5 L741.0 633.9 L741.7 637.5 L742.5 641.3 L743.3 642.8 L744.0 645.8 L744.8 644.4 L745.5 641.9 L746.3 637.3 L747.0 632.3 L747.8 628.2 L748.5 626.4 L749.3 626.5 L750.0 619.9 L750.8 622.2 L751.5 620.5 L752.3 620.2 L753.0 620.9 L753.8 621.8 L754.5 624.2 L755.3 623.0 L756.0 625.2 L756.8 625.6 L757.5 627.3 L758.3 631.0 L759.1 636.2 L759.8 639.4 L760.6 643.3 L761.3 645.4 L762.1 641.8 L762.8 640.5 L763.6 637.4 L764.3 632.3 L765.1 628.5 L765.8 626.0 L766.6 623.7 L767.3 621.8 L768.1 619.6 L768.8 619.5 L769.6 618.6 L770.3 617.1 L771.1 619.3 L771.8 620.3 L772.6 620.1 L773.3 622.2 L774.1 623.0 L774.9 622.3 L775.6 625.2 L776.4 627.3 L777.1 631.4 L777.9 635.8 L778.6 639.2 L779.4 641.4 L780.1 643.0 L780.9 642.2 L781.6 639.7 L782.4 636.4 L783.1 632.0 L783.9 629.9 L784.6 627.2 L785.4 627.4 L786.1 624.7 L786.9 624.3 L787.6 623.6 L788.4 623.8 L789.1 624.2 L789.9 625.5 L790.7 625.7 L791.4 626.1 L792.2 626.1 L792.9 627.3 L793.7 628.1 L794.4 631.0 L795.2 634.7 L795.9 637.8 L796.7 641.9 L797.4 642.8 L798.2 642.5 L798.9 642.5 L799.7 639.2 L800.4 635.8 L801.2 632.7 L801.9 631.1 L802.7 628.7 L803.4 628.4 L804.2 626.2 L804.9 625.4 L805.7 624.6 L806.5 626.0 L807.2 624.5 L808.0 626.2 L808.7 626.2 L809.5 626.4 L810.2 627.8 L811.0 626.4 L811.7 630.0 L812.5 631.8 L813.2 635.5 L814.0 638.0 L814.7 641.7 L815.5 642.6 L816.2 643.2 L817.0 642.4 L817.7 638.9 L818.5 634.1 L819.2 630.9 L820.0 628.7 L820.8 626.9 L821.5 625.0 L822.3 621.7 L823.0 620.7 L823.8 621.5" stroke="#316395" stroke-width="1.5" fill="none" stroke-linejoin="round"/><path d="M101.2 449 H124.2" stroke="#3366cc" stroke-width="2"/><path d="M183.9 449 H206" stroke="#dc3912" stroke-width="2"/><path d="M265.7 449 H288.7" stroke="#ff9900" stroke-width="2"/><path d="M348.3 449 H370.9" stroke="#109618" stroke-width="2"/><path d="M430.2 449 H452.8" stroke="#990099" stroke-width="2"/><path d="M512.5 449 H535.1" stroke="#0099c6" stroke-width="2"/><path d="M598.3 449 H620.9" stroke="#dd4477" stroke-width="2"/><path d="M684 449 H706.6" stroke="#66aa00" stroke-width="2"/><path d="M779 449.4 L790.2 444 L790.2 454.8 Z" fill="#c8c8c8"/><path d="M813.7 444 L824.5 449.4 L813.7 454.8 Z" fill="#0a0acc"/></svg>
<div class=t style="left:24.50px;top:7px;font-size:11.6px;line-height:11.6px;color:#ecec22;font-weight:bold;font-style:normal;transform:scaleX(0.9094);">Home</div>
<div class=t style="left:88.30px;top:7px;font-size:11.6px;line-height:11.6px;color:#ecec22;font-weight:bold;font-style:normal;transform:scaleX(0.8394);">Instructions</div>
<div class=t style="left:178.90px;top:7px;font-size:11.6px;line-height:11.6px;color:#ecec22;font-weight:bold;font-style:normal;transform:scaleX(0.8238);">Projects</div>
<div class=t style="left:251.00px;top:7px;font-size:11.6px;line-height:11.6px;color:#ecec22;font-weight:bold;font-style:normal;transform:scaleX(0.9002);">Input</div>
<div class=t style="left:311.20px;top:7px;font-size:11.6px;line-height:11.6px;color:#ecec22;font-weight:bold;font-style:italic;transform:scaleX(0.9179);text-decoration:underline;">ME Design</div>
<div class=t style="left:400.40px;top:7px;font-size:11.6px;line-height:11.6px;color:#ecec22;font-weight:bold;font-style:normal;transform:scaleX(0.8083);">Tools</div>
<div class=t style="left:459.70px;top:7px;font-size:11.6px;line-height:11.6px;color:#ecec22;font-weight:bold;font-style:normal;transform:scaleX(0.8538);">Interpreting Results</div>
<div class=t style="left:587.70px;top:7px;font-size:11.6px;line-height:11.6px;color:#ecec22;font-weight:bold;font-style:normal;transform:scaleX(0.6907);">?</div>
<div class=t style="left:627.00px;top:7px;font-size:11.6px;line-height:11.6px;color:#ecec22;font-weight:bold;font-style:normal;transform:scaleX(0.8840);">About</div>
<div class=t style="left:700.80px;top:7px;font-size:11.6px;line-height:11.6px;color:#111;font-weight:bold;font-style:normal;transform:scaleX(0.8008);">US</div>
<div class=t style="left:733.40px;top:7px;font-size:11.6px;line-height:11.6px;color:#111;font-weight:bold;font-style:normal;transform:scaleX(0.8387);">SI</div>
<div class=t style="left:780.20px;top:7px;font-size:12.8px;line-height:12.8px;color:#000;font-weight:bold;font-style:normal;transform:scaleX(0.9648);">Save To DB</div>
<div class=t style="left:863.40px;top:7px;font-size:12.8px;line-height:12.8px;color:#000;font-weight:bold;font-style:normal;transform:scaleX(0.9629);">Save To File</div>
<div class=t style="left:21.70px;top:35px;font-size:11.6px;line-height:11.6px;color:#f01c24;font-weight:normal;font-style:italic;transform:scaleX(0.8865);-webkit-text-stroke:0.5px currentColor;">Loaded Project:</div>
<div class=t style="left:107.20px;top:35px;font-size:11.6px;line-height:11.6px;color:#4a4a4a;font-weight:normal;font-style:normal;transform:scaleX(0.8810);-webkit-text-stroke:0.35px currentColor;">09-37910 Fish Springs SB 395 100.8-91.6-Raghu</div>
<div class=t style="left:453.90px;top:35px;font-size:11.6px;line-height:11.6px;color:#f01c24;font-weight:normal;font-style:italic;transform:scaleX(0.9040);-webkit-text-stroke:0.5px currentColor;">Loaded Trial:</div>
<div class=t style="left:530.00px;top:35px;font-size:11.6px;line-height:11.6px;color:#4a4a4a;font-weight:normal;font-style:normal;transform:scaleX(0.8993);-webkit-text-stroke:0.35px currentColor;">Section 3: Two Layer Overlay</div>
<div class=t style="left:909.23px;top:35px;font-size:11px;line-height:11px;color:#fff;font-weight:bold;font-style:normal;">?</div>
<div class=t style="left:29.40px;top:63px;font-size:13.8px;line-height:13.8px;color:#111;font-weight:normal;font-style:normal;transform:scaleX(0.9833);">Run Simulation</div>
<div class=t style="left:158.00px;top:65px;font-size:13px;line-height:13px;color:#111;font-weight:normal;font-style:normal;transform:scaleX(0.9069);-webkit-text-stroke:0.35px currentColor;">Progress (secs): 151 152 153 154 155 156 157 158 159 160 161 Sim Done... 162 Rpts Done</div>
<div class=t style="left:146.50px;top:90px;font-size:12.5px;line-height:12.5px;color:#111;font-weight:normal;font-style:italic;transform:scaleX(0.9296);-webkit-text-stroke:0.35px currentColor;">Monte Carlo</div>
<div class=t style="left:229.90px;top:90px;font-size:12.5px;line-height:12.5px;color:#111;font-weight:normal;font-style:italic;transform:scaleX(0.9415);-webkit-text-stroke:0.35px currentColor;">60 Simulations</div>
<div class=t style="left:326.60px;top:90px;font-size:12.5px;line-height:12.5px;color:#111;font-weight:normal;font-style:italic;transform:scaleX(0.9367);-webkit-text-stroke:0.35px currentColor;">DL=40 yrs</div>
<div class=t style="left:400.20px;top:90px;font-size:12.5px;line-height:12.5px;color:#111;font-weight:normal;font-style:italic;transform:scaleX(0.8819);-webkit-text-stroke:0.35px currentColor;">TI=12.0</div>
<div class=t style="left:462.30px;top:89px;font-size:12.3px;line-height:12.3px;color:#111;font-weight:normal;font-style:normal;transform:scaleX(0.9729);-webkit-text-stroke:0.35px currentColor;">Simulation Duration</div>
<div class=t style="left:593.80px;top:89px;font-size:12.3px;line-height:12.3px;color:#111;font-weight:normal;font-style:normal;transform:scaleX(0.9205);">40</div>
<div class=t style="left:618.00px;top:89px;font-size:12.3px;line-height:12.3px;color:#111;font-weight:normal;font-style:normal;transform:scaleX(0.9021);-webkit-text-stroke:0.35px currentColor;">yrs</div>
<div class=t style="left:692.60px;top:90px;font-size:12.5px;line-height:12.5px;color:#111;font-weight:normal;font-style:normal;transform:scaleX(0.9315);-webkit-text-stroke:0.35px currentColor;">Graph Modulus using Log Scale</div>
<div class=t style="left:54.20px;top:111px;font-size:13.8px;line-height:13.8px;color:#111;font-weight:normal;font-style:normal;transform:scaleX(0.9778);">Cancel</div>
<div class=t style="left:141.70px;top:111px;font-size:11.3px;line-height:11.3px;color:#111;font-weight:normal;font-style:normal;transform:scaleX(0.9585);-webkit-text-stroke:0.2px currentColor;">Overall reliability is greater than required (95%).</div>
<div class=t style="left:711.70px;top:115px;font-size:13.8px;line-height:13.8px;color:#111;font-weight:normal;font-style:normal;transform:scaleX(0.9768);">Graphs</div>
<div class=t style="left:780.90px;top:115px;font-size:13.8px;line-height:13.8px;color:#111;font-weight:normal;font-style:normal;transform:scaleX(0.9749);">Reports</div>
<div class=t style="left:128.40px;top:157px;font-size:11.8px;line-height:11.8px;color:#333;font-weight:normal;font-style:normal;transform:scaleX(0.9793);">Overall</div>
<div class=t style="left:210.60px;top:157px;font-size:11.8px;line-height:11.8px;color:#333;font-weight:normal;font-style:normal;transform:scaleX(0.9621);">Cracking</div>
<div class=t style="left:302.00px;top:157px;font-size:11.8px;line-height:11.8px;color:#333;font-weight:normal;font-style:normal;transform:scaleX(0.9735);">Rutting</div>
<div class=t style="left:384.70px;top:157px;font-size:11.8px;line-height:11.8px;color:#333;font-weight:normal;font-style:normal;transform:scaleX(0.9644);">Threshold</div>
<div class=t style="left:82.71px;top:380px;font-size:12px;line-height:12px;color:#444;font-weight:normal;font-style:normal;">0</div>
<div class=t style="left:82.71px;top:338px;font-size:12px;line-height:12px;color:#444;font-weight:normal;font-style:normal;">1</div>
<div class=t style="left:82.71px;top:296px;font-size:12px;line-height:12px;color:#444;font-weight:normal;font-style:normal;">2</div>
<div class=t style="left:82.71px;top:255px;font-size:12px;line-height:12px;color:#444;font-weight:normal;font-style:normal;">3</div>
<div class=t style="left:82.71px;top:213px;font-size:12px;line-height:12px;color:#444;font-weight:normal;font-style:normal;">4</div>
<div class=t style="left:82.71px;top:171px;font-size:12px;line-height:12px;color:#444;font-weight:normal;font-style:normal;">5</div>
<div class=t style="left:111.05px;top:391px;font-size:9.6px;line-height:9.6px;color:#444;font-weight:normal;font-style:normal;transform:scaleX(0.8293);">2024</div>
<div class=t style="left:147.16px;top:391px;font-size:9.6px;line-height:9.6px;color:#444;font-weight:normal;font-style:normal;transform:scaleX(0.8293);">2026</div>
<div class=t style="left:183.28px;top:391px;font-size:9.6px;line-height:9.6px;color:#444;font-weight:normal;font-style:normal;transform:scaleX(0.8293);">2028</div>
<div class=t style="left:219.40px;top:391px;font-size:9.6px;line-height:9.6px;color:#444;font-weight:normal;font-style:normal;transform:scaleX(0.8293);">2030</div>
<div class=t style="left:255.51px;top:391px;font-size:9.6px;line-height:9.6px;color:#444;font-weight:normal;font-style:normal;transform:scaleX(0.8293);">2032</div>
<div class=t style="left:291.63px;top:391px;font-size:9.6px;line-height:9.6px;color:#444;font-weight:normal;font-style:normal;transform:scaleX(0.8293);">2034</div>
<div class=t style="left:327.74px;top:391px;font-size:9.6px;line-height:9.6px;color:#444;font-weight:normal;font-style:normal;transform:scaleX(0.8293);">2036</div>
<div class=t style="left:363.86px;top:391px;font-size:9.6px;line-height:9.6px;color:#444;font-weight:normal;font-style:normal;transform:scaleX(0.8293);">2038</div>
<div class=t style="left:399.98px;top:391px;font-size:9.6px;line-height:9.6px;color:#444;font-weight:normal;font-style:normal;transform:scaleX(0.8293);">2040</div>
<div class=t style="left:436.09px;top:391px;font-size:9.6px;line-height:9.6px;color:#444;font-weight:normal;font-style:normal;transform:scaleX(0.8293);">2042</div>
<div class=t style="left:472.21px;top:391px;font-size:9.6px;line-height:9.6px;color:#444;font-weight:normal;font-style:normal;transform:scaleX(0.8293);">2044</div>
<div class=t style="left:508.32px;top:391px;font-size:9.6px;line-height:9.6px;color:#444;font-weight:normal;font-style:normal;transform:scaleX(0.8293);">2046</div>
<div class=t style="left:544.44px;top:391px;font-size:9.6px;line-height:9.6px;color:#444;font-weight:normal;font-style:normal;transform:scaleX(0.8293);">2048</div>
<div class=t style="left:580.56px;top:391px;font-size:9.6px;line-height:9.6px;color:#444;font-weight:normal;font-style:normal;transform:scaleX(0.8293);">2050</div>
<div class=t style="left:616.67px;top:391px;font-size:9.6px;line-height:9.6px;color:#444;font-weight:normal;font-style:normal;transform:scaleX(0.8293);">2052</div>
<div class=t style="left:652.79px;top:391px;font-size:9.6px;line-height:9.6px;color:#444;font-weight:normal;font-style:normal;transform:scaleX(0.8293);">2054</div>
<div class=t style="left:688.90px;top:391px;font-size:9.6px;line-height:9.6px;color:#444;font-weight:normal;font-style:normal;transform:scaleX(0.8293);">2056</div>
<div class=t style="left:725.02px;top:391px;font-size:9.6px;line-height:9.6px;color:#444;font-weight:normal;font-style:normal;transform:scaleX(0.8293);">2058</div>
<div class=t style="left:761.14px;top:391px;font-size:9.6px;line-height:9.6px;color:#444;font-weight:normal;font-style:normal;transform:scaleX(0.8293);">2060</div>
<div class=t style="left:797.25px;top:391px;font-size:9.6px;line-height:9.6px;color:#444;font-weight:normal;font-style:normal;transform:scaleX(0.8293);">2062</div>
<div class=t style="left:451.70px;top:405px;font-size:11.8px;line-height:11.8px;color:#333;font-weight:normal;font-style:italic;transform:scaleX(0.9389);">Date</div>
<div class=t style="left:128.90px;top:444px;font-size:12px;line-height:12px;color:#333;font-weight:normal;font-style:normal;transform:scaleX(0.9338);">Min-E1</div>
<div class=t style="left:210.70px;top:444px;font-size:12px;line-height:12px;color:#333;font-weight:normal;font-style:normal;transform:scaleX(0.9338);">Min-E2</div>
<div class=t style="left:293.00px;top:444px;font-size:12px;line-height:12px;color:#333;font-weight:normal;font-style:normal;transform:scaleX(0.9417);">Min-E3</div>
<div class=t style="left:375.60px;top:444px;font-size:12px;line-height:12px;color:#333;font-weight:normal;font-style:normal;transform:scaleX(0.9233);">Min-E4</div>
<div class=t style="left:458.20px;top:444px;font-size:12px;line-height:12px;color:#333;font-weight:normal;font-style:normal;transform:scaleX(0.9470);">Min-E5</div>
<div class=t style="left:539.80px;top:444px;font-size:12px;line-height:12px;color:#333;font-weight:normal;font-style:normal;transform:scaleX(0.9433);">Max-E1</div>
<div class=t style="left:625.60px;top:444px;font-size:12px;line-height:12px;color:#333;font-weight:normal;font-style:normal;transform:scaleX(0.9530);">Max-E2</div>
<div class=t style="left:711.30px;top:444px;font-size:12px;line-height:12px;color:#333;font-weight:normal;font-style:normal;transform:scaleX(0.9433);">Max-E3</div>
<div class=t style="left:794.30px;top:444px;font-size:12px;line-height:12px;color:#3535c8;font-weight:normal;font-style:normal;transform:scaleX(0.9348);">1/2</div>
<div class=t style="left:55.18px;top:460px;font-size:11.2px;line-height:11.2px;color:#444;font-weight:normal;font-style:normal;">10,000</div>
<div class=t style="left:61.40px;top:511px;font-size:11.2px;line-height:11.2px;color:#444;font-weight:normal;font-style:normal;">1,000</div>
<div class=t style="left:70.73px;top:561px;font-size:11.2px;line-height:11.2px;color:#444;font-weight:normal;font-style:normal;">100</div>
<div class=t style="left:76.95px;top:612px;font-size:11.2px;line-height:11.2px;color:#444;font-weight:normal;font-style:normal;">10</div>
<div class=t style="left:83.17px;top:669px;font-size:11.2px;line-height:11.2px;color:#444;font-weight:normal;font-style:normal;">0</div>
<div class=t style="left:107.55px;top:679px;font-size:11.2px;line-height:11.2px;color:#444;font-weight:normal;font-style:normal;transform:scaleX(0.9923);">2024</div>
<div class=t style="left:143.66px;top:679px;font-size:11.2px;line-height:11.2px;color:#444;font-weight:normal;font-style:normal;transform:scaleX(0.9923);">2026</div>
<div class=t style="left:179.78px;top:679px;font-size:11.2px;line-height:11.2px;color:#444;font-weight:normal;font-style:normal;transform:scaleX(0.9923);">2028</div>
<div class=t style="left:215.90px;top:679px;font-size:11.2px;line-height:11.2px;color:#444;font-weight:normal;font-style:normal;transform:scaleX(0.9923);">2030</div>
<div class=t style="left:252.01px;top:679px;font-size:11.2px;line-height:11.2px;color:#444;font-weight:normal;font-style:normal;transform:scaleX(0.9923);">2032</div>
<div class=t style="left:288.13px;top:679px;font-size:11.2px;line-height:11.2px;color:#444;font-weight:normal;font-style:normal;transform:scaleX(0.9923);">2034</div>
<div class=t style="left:324.24px;top:679px;font-size:11.2px;line-height:11.2px;color:#444;font-weight:normal;font-style:normal;transform:scaleX(0.9923);">2036</div>
<div class=t style="left:360.36px;top:679px;font-size:11.2px;line-height:11.2px;color:#444;font-weight:normal;font-style:normal;transform:scaleX(0.9923);">2038</div>
<div class=t style="left:396.48px;top:679px;font-size:11.2px;line-height:11.2px;color:#444;font-weight:normal;font-style:normal;transform:scaleX(0.9923);">2040</div>
<div class=t style="left:432.59px;top:679px;font-size:11.2px;line-height:11.2px;color:#444;font-weight:normal;font-style:normal;transform:scaleX(0.9923);">2042</div>
<div class=t style="left:468.71px;top:679px;font-size:11.2px;line-height:11.2px;color:#444;font-weight:normal;font-style:normal;transform:scaleX(0.9923);">2044</div>
<div class=t style="left:504.82px;top:679px;font-size:11.2px;line-height:11.2px;color:#444;font-weight:normal;font-style:normal;transform:scaleX(0.9923);">2046</div>
<div class=t style="left:540.94px;top:679px;font-size:11.2px;line-height:11.2px;color:#444;font-weight:normal;font-style:normal;transform:scaleX(0.9923);">2048</div>
<div class=t style="left:577.06px;top:679px;font-size:11.2px;line-height:11.2px;color:#444;font-weight:normal;font-style:normal;transform:scaleX(0.9923);">2050</div>
<div class=t style="left:613.17px;top:679px;font-size:11.2px;line-height:11.2px;color:#444;font-weight:normal;font-style:normal;transform:scaleX(0.9923);">2052</div>
<div class=t style="left:649.29px;top:679px;font-size:11.2px;line-height:11.2px;color:#444;font-weight:normal;font-style:normal;transform:scaleX(0.9923);">2054</div>
<div class=t style="left:685.40px;top:679px;font-size:11.2px;line-height:11.2px;color:#444;font-weight:normal;font-style:normal;transform:scaleX(0.9923);">2056</div>
<div class=t style="left:721.52px;top:679px;font-size:11.2px;line-height:11.2px;color:#444;font-weight:normal;font-style:normal;transform:scaleX(0.9923);">2058</div>
<div class=t style="left:757.64px;top:679px;font-size:11.2px;line-height:11.2px;color:#444;font-weight:normal;font-style:normal;transform:scaleX(0.9923);">2060</div>
<div class=t style="left:793.75px;top:679px;font-size:11.2px;line-height:11.2px;color:#444;font-weight:normal;font-style:normal;transform:scaleX(0.9923);">2062</div>
<div class=t style="left:451.70px;top:694px;font-size:11.5px;line-height:11.5px;color:#333;font-weight:normal;font-style:normal;transform:scaleX(0.9507);">Date</div>
<div class=t style="left:0;top:0;width:110px;height:12px;font-size:11.3px;line-height:12px;color:#444;transform-origin:0 0;transform:translate(45.6px,336.5px) rotate(-90deg);text-align:center">Failure Probability (%)</div>
<div class=t style="left:0;top:0;width:68px;height:12px;font-size:11.5px;line-height:12px;color:#333;font-style:italic;transform-origin:0 0;transform:translate(30.8px,603px) rotate(-90deg);text-align:center">Modulus (ksi)</div>
</body></html>
